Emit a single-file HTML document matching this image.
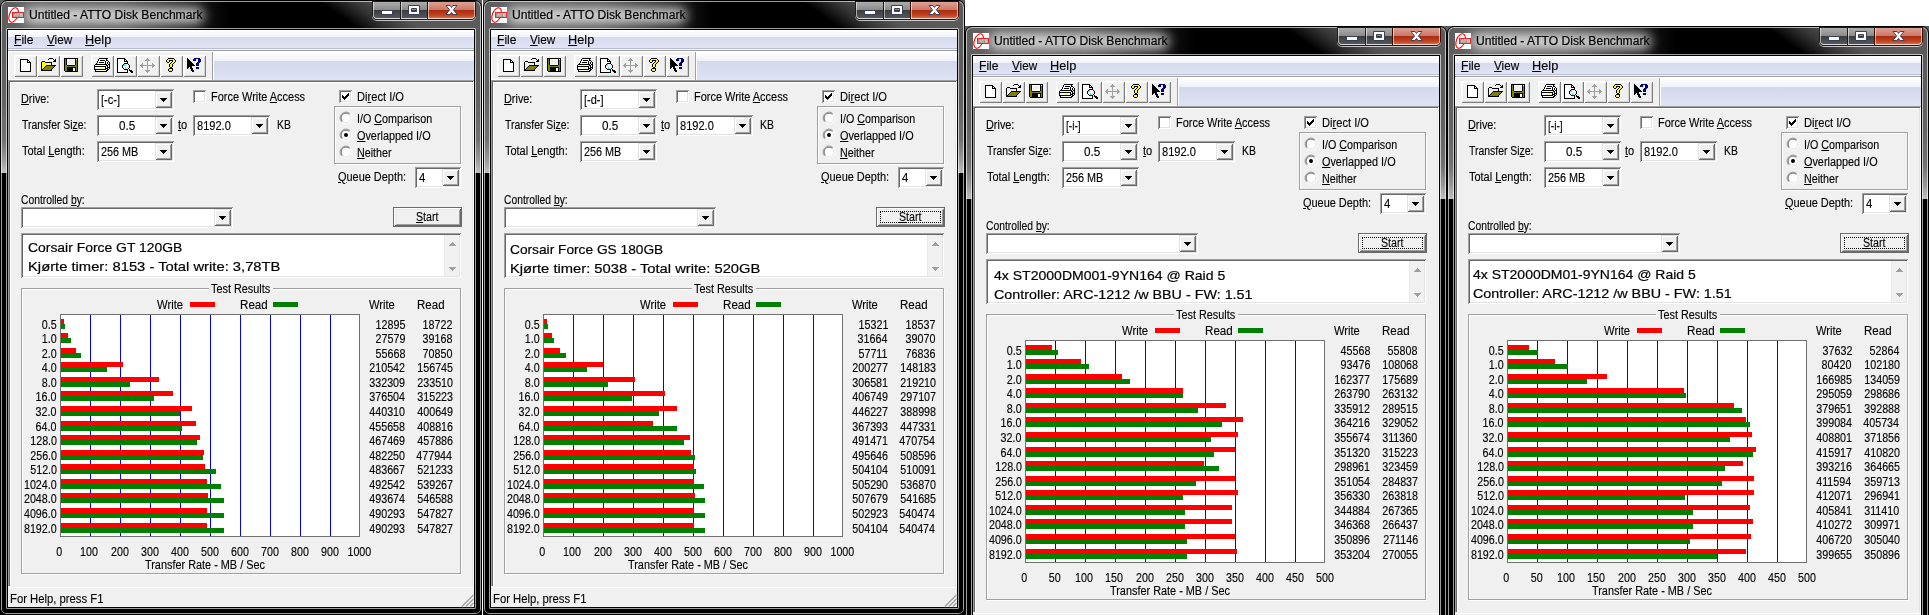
<!DOCTYPE html><html><head><meta charset="utf-8"><title>ATTO Disk Benchmark</title><style>
html,body{margin:0;padding:0}
body{width:1929px;height:615px;background:#fff;position:relative;overflow:hidden;font-family:"Liberation Sans",sans-serif}
.win{position:absolute;width:482px;height:615px;background:#000;overflow:hidden}
.win div,.win span,.win svg,.win i{position:absolute}
.t{white-space:pre;display:block;-webkit-text-stroke:.13px #000}
.ns{-webkit-text-stroke:.12px #000 !important}
.ds{-webkit-text-stroke:.2px #000 !important}
.t u{text-decoration:underline;text-underline-offset:1px}
.px{display:block;overflow:visible}
.glassT{left:0;top:0;width:482px;height:30px;background:linear-gradient(90deg,#5e5e5e 0,#626262 30px,#555 120px,#111 205px,#000 230px,#000 100%)}
.glassT2{left:290px;top:0;width:192px;height:30px;background:linear-gradient(35deg,#000 40px,#333 58px,#444 67px,#555 76px,#5a5a5a 100px)}
.glassL{left:0;top:30px;width:8px;height:143px;background:linear-gradient(180deg,#5e5e5e 0,#646464 70px,#727272 110px,#9a9a9a 130px,#c0c0c0 143px)}
.glassR{left:474px;top:30px;width:8px;height:143px;background:linear-gradient(180deg,#5a5a5a 0,#626262 70px,#727272 110px,#9a9a9a 130px,#c0c0c0 143px)}
.glow{left:24px;top:8px;width:180px;height:15px;border-radius:8px;background:rgba(255,255,255,.8);filter:blur(6px)}
.edgeO{left:0;top:0;width:480px;height:613px;border:1px solid #000;border-radius:7px 7px 6px 6px;box-shadow:inset 0 0 0 1px rgba(255,255,255,.62)}
.edgeI{left:6px;top:28px;width:468px;height:579px;border:1px solid rgba(255,255,255,.62);box-shadow:inset 0 0 0 1px #000;border-radius:1px}
.client{left:8px;top:30px;width:466px;height:577px;background:#f0f0f0}
.menubar{left:8px;top:30px;width:466px;height:19px;background:linear-gradient(180deg,#fff 0,#f1f3fb 7px,#d6dbed 7px,#e0e4f5 18px,#b9bfd2 18px)}
.tbline1{left:8px;top:49px;width:466px;height:1px;background:#f4f4f6}
.tbline2{left:8px;top:50px;width:466px;height:1px;background:#a0a0a0}
.tbline3{left:8px;top:51px;width:466px;height:1px;background:#fff}
.tbleft{left:8px;top:52px;width:204px;height:28px;background:linear-gradient(180deg,#f0f0f0 27px,#fff 27px);box-shadow:inset 1px 0 0 #fff}
.tbsep{left:212px;top:52px;width:2px;height:28px;background:linear-gradient(90deg,#a0a0a0 1px,#fff 1px)}
.tbright{left:214px;top:52px;width:260px;height:28px;background:linear-gradient(180deg,#fff 0,#eff1fa 9px,#d3d8eb 9px,#dee2f4 28px)}
.form{left:8px;top:80px;width:466px;height:510px;background:#f0f0f0;box-shadow:inset 1px 1px 0 #a0a0a0,inset -1px -1px 0 #fff,inset 2px 2px 0 #696969,inset -2px -2px 0 #e3e3e3,inset 3px 3px 0 #fff}
.status{left:8px;top:586px;width:466px;height:21px;background:linear-gradient(180deg,#f0f0f0 1px,#fbfbfb 1px,#fbfbfb 2px,#f0f0f0 2px)}
.capwrap{left:372px;top:1px;width:104px;height:20px;border:1px solid rgba(255,255,255,.7);border-top:none;border-radius:0 0 5px 5px;box-sizing:border-box}
.cap{top:2px;height:17px;box-sizing:border-box;border:1px solid rgba(255,255,255,.55);border-top:none}
.cmin{left:373px;width:28px;border-radius:0 0 0 4px;background:linear-gradient(180deg,#adadad 0,#8a8a8a 8px,#3c3c3c 8px,#555a64 17px);box-shadow:0 0 0 1px #1c1c1c}
.cmax{left:401px;width:27px;background:linear-gradient(180deg,#adadad 0,#8a8a8a 8px,#3c3c3c 8px,#555a64 17px);box-shadow:0 0 0 1px #1c1c1c}
.cclose{left:428px;width:47px;border-radius:0 0 4px 0;background:linear-gradient(180deg,#dda093 0,#cc7766 8px,#a82a12 8px,#c2411d 13px,#d47a55 17px);box-shadow:0 0 0 1px #3a0c06}
.chart{left:60px;top:314px;width:298px;height:221px;border:1px solid #707070;background:#fff;overflow:hidden}
.chart i{display:block}
.g{top:0;width:1px;height:221px;background:#0000ff}
.r{left:0;height:5px;background:#ff0000}
.n{left:0;height:5px;background:#008000}
</style></head><body>
<div class="win" style="left:0px;top:0px">
<div class="glassT"></div><div class="glassT2"></div><div class="glassL"></div><div class="glassR"></div>
<div class="glow"></div>
<div class="edgeO"></div><div class="edgeI"></div>
<svg class="px" style="left:8px;top:7px" width="16" height="16" viewBox="0 0 16 16"><rect width="16" height="16" fill="#fff"/><ellipse cx="5.6" cy="8" rx="4.2" ry="7.6" transform="rotate(22 5.6 8)" fill="none" stroke="#f00" stroke-width="1.1"/><rect x="4.5" y="5.5" width="11" height="5" fill="#a3968a" stroke="#e8202c" stroke-width="1"/><path d="M6.5 9.5l1-3l1 3M9 6.5h2M10 6.5v3M11.5 6.5h2M12.5 6.5v3" stroke="#e8e0d8" stroke-width=".7" fill="none"/><rect x="13.6" y="6.6" width="1.2" height="2.8" fill="none" stroke="#e8e0d8" stroke-width=".5"/></svg>
<span class="t ds" style="left:28.53px;transform-origin:0 0;top:7.00px;font-size:12px;line-height:16px;transform:scaleX(1.007);">Untitled - ATTO Disk Benchmark</span>
<div class="capwrap"></div>
<div class="cap cmin"></div><div class="cap cmax"></div><div class="cap cclose"></div>
<svg class="px" style="left:381px;top:10px" width="12" height="5" viewBox="0 0 12 5"><rect x=".5" y=".5" width="11" height="4" fill="#fff" stroke="#3a4058" stroke-width="1"/></svg>
<svg class="px" style="left:408px;top:5px" width="12" height="10" viewBox="0 0 12 10"><path d="M.5 .5h11v9h-11z M3.5 3.5v3h5v-3z" fill="#fff" fill-rule="evenodd" stroke="#3a4058" stroke-width="1"/></svg>
<svg class="px" style="left:445px;top:4px" width="13" height="12" viewBox="0 0 13 12"><path d="M1 1.5h4l1.5 1.9l1.5-1.9h4l-3.6 4.4l3.8 4.6h-4.1l-1.6-2.1l-1.6 2.1h-4.1l3.8-4.6z" fill="#fff" stroke="#40435a" stroke-width="1" stroke-linejoin="round"/></svg>
<div class="client">
</div>
<div class="menubar"></div>
<span class="t ns" style="left:14.23px;transform-origin:0 0;top:32.00px;font-size:12px;line-height:16px;transform:scaleX(1.007);"><u>F</u>ile</span>
<span class="t ns" style="left:46.78px;transform-origin:0 0;top:32.00px;font-size:12px;line-height:16px;transform:scaleX(0.977);"><u>V</u>iew</span>
<span class="t ns" style="left:84.98px;transform-origin:0 0;top:32.00px;font-size:12px;line-height:16px;transform:scaleX(1.062);"><u>H</u>elp</span>
<div class="tbline1"></div><div class="tbline2"></div><div class="tbline3"></div>
<div class="tbleft"></div><div class="tbsep"></div><div class="tbright"></div>
<div style="position:absolute;left:14px;top:55px;width:23px;height:22px;background:#f0f0f0;box-shadow:inset 1px 1px 0 #fff,inset -1px -1px 0 #7d7d7d,inset 2px 2px 0 #f9f9f9,inset -2px -2px 0 #d4d4d4;"></div>
<div style="position:absolute;left:37px;top:55px;width:23px;height:22px;background:#f0f0f0;box-shadow:inset 1px 1px 0 #fff,inset -1px -1px 0 #7d7d7d,inset 2px 2px 0 #f9f9f9,inset -2px -2px 0 #d4d4d4;"></div>
<div style="position:absolute;left:60px;top:55px;width:23px;height:22px;background:#f0f0f0;box-shadow:inset 1px 1px 0 #fff,inset -1px -1px 0 #7d7d7d,inset 2px 2px 0 #f9f9f9,inset -2px -2px 0 #d4d4d4;"></div>
<div style="position:absolute;left:91px;top:55px;width:23px;height:22px;background:#f0f0f0;box-shadow:inset 1px 1px 0 #fff,inset -1px -1px 0 #7d7d7d,inset 2px 2px 0 #f9f9f9,inset -2px -2px 0 #d4d4d4;"></div>
<div style="position:absolute;left:114px;top:55px;width:23px;height:22px;background:#f0f0f0;box-shadow:inset 1px 1px 0 #fff,inset -1px -1px 0 #7d7d7d,inset 2px 2px 0 #f9f9f9,inset -2px -2px 0 #d4d4d4;"></div>
<div style="position:absolute;left:137px;top:55px;width:23px;height:22px;background:#f0f0f0;box-shadow:inset 1px 1px 0 #fff,inset -1px -1px 0 #7d7d7d,inset 2px 2px 0 #f9f9f9,inset -2px -2px 0 #d4d4d4;"></div>
<div style="position:absolute;left:160px;top:55px;width:23px;height:22px;background:#f0f0f0;box-shadow:inset 1px 1px 0 #fff,inset -1px -1px 0 #7d7d7d,inset 2px 2px 0 #f9f9f9,inset -2px -2px 0 #d4d4d4;"></div>
<div style="position:absolute;left:183px;top:55px;width:23px;height:22px;background:#f0f0f0;box-shadow:inset 1px 1px 0 #fff,inset -1px -1px 0 #7d7d7d,inset 2px 2px 0 #f9f9f9,inset -2px -2px 0 #d4d4d4;"></div>
<svg class="px" style="left:20px;top:59px" width="11" height="13" viewBox="0 0 11 13" shape-rendering="crispEdges"><rect x="0" y="0" width="8" height="1" fill="#000"/><rect x="0" y="1" width="1" height="1" fill="#000"/><rect x="1" y="1" width="6" height="1" fill="#fff"/><rect x="7" y="1" width="2" height="1" fill="#000"/><rect x="0" y="2" width="1" height="1" fill="#000"/><rect x="1" y="2" width="6" height="1" fill="#fff"/><rect x="7" y="2" width="1" height="1" fill="#000"/><rect x="8" y="2" width="1" height="1" fill="#fff"/><rect x="9" y="2" width="1" height="1" fill="#000"/><rect x="0" y="3" width="1" height="1" fill="#000"/><rect x="1" y="3" width="6" height="1" fill="#fff"/><rect x="7" y="3" width="4" height="1" fill="#000"/><rect x="0" y="4" width="1" height="1" fill="#000"/><rect x="1" y="4" width="9" height="1" fill="#fff"/><rect x="10" y="4" width="1" height="1" fill="#000"/><rect x="0" y="5" width="1" height="1" fill="#000"/><rect x="1" y="5" width="9" height="1" fill="#fff"/><rect x="10" y="5" width="1" height="1" fill="#000"/><rect x="0" y="6" width="1" height="1" fill="#000"/><rect x="1" y="6" width="9" height="1" fill="#fff"/><rect x="10" y="6" width="1" height="1" fill="#000"/><rect x="0" y="7" width="1" height="1" fill="#000"/><rect x="1" y="7" width="9" height="1" fill="#fff"/><rect x="10" y="7" width="1" height="1" fill="#000"/><rect x="0" y="8" width="1" height="1" fill="#000"/><rect x="1" y="8" width="9" height="1" fill="#fff"/><rect x="10" y="8" width="1" height="1" fill="#000"/><rect x="0" y="9" width="1" height="1" fill="#000"/><rect x="1" y="9" width="9" height="1" fill="#fff"/><rect x="10" y="9" width="1" height="1" fill="#000"/><rect x="0" y="10" width="1" height="1" fill="#000"/><rect x="1" y="10" width="9" height="1" fill="#fff"/><rect x="10" y="10" width="1" height="1" fill="#000"/><rect x="0" y="11" width="1" height="1" fill="#000"/><rect x="1" y="11" width="9" height="1" fill="#fff"/><rect x="10" y="11" width="1" height="1" fill="#000"/><rect x="0" y="12" width="11" height="1" fill="#000"/></svg>
<svg class="px" style="left:41px;top:58px" width="16" height="13" viewBox="0 0 16 13" shape-rendering="crispEdges"><rect x="8" y="0" width="4" height="1" fill="#000"/><rect x="7" y="1" width="1" height="1" fill="#000"/><rect x="12" y="1" width="1" height="1" fill="#000"/><rect x="14" y="1" width="1" height="1" fill="#000"/><rect x="13" y="2" width="2" height="1" fill="#000"/><rect x="1" y="3" width="3" height="1" fill="#000"/><rect x="12" y="3" width="3" height="1" fill="#000"/><rect x="0" y="4" width="1" height="1" fill="#000"/><rect x="1" y="4" width="1" height="1" fill="#ffff00"/><rect x="2" y="4" width="1" height="1" fill="#fff"/><rect x="3" y="4" width="1" height="1" fill="#ffff00"/><rect x="4" y="4" width="7" height="1" fill="#000"/><rect x="0" y="5" width="1" height="1" fill="#000"/><rect x="1" y="5" width="1" height="1" fill="#fff"/><rect x="2" y="5" width="1" height="1" fill="#ffff00"/><rect x="3" y="5" width="1" height="1" fill="#fff"/><rect x="4" y="5" width="1" height="1" fill="#ffff00"/><rect x="5" y="5" width="1" height="1" fill="#fff"/><rect x="6" y="5" width="1" height="1" fill="#ffff00"/><rect x="7" y="5" width="1" height="1" fill="#fff"/><rect x="8" y="5" width="1" height="1" fill="#ffff00"/><rect x="9" y="5" width="1" height="1" fill="#fff"/><rect x="10" y="5" width="1" height="1" fill="#000"/><rect x="0" y="6" width="1" height="1" fill="#000"/><rect x="1" y="6" width="1" height="1" fill="#ffff00"/><rect x="2" y="6" width="1" height="1" fill="#fff"/><rect x="3" y="6" width="1" height="1" fill="#ffff00"/><rect x="4" y="6" width="1" height="1" fill="#fff"/><rect x="5" y="6" width="1" height="1" fill="#ffff00"/><rect x="6" y="6" width="1" height="1" fill="#fff"/><rect x="7" y="6" width="1" height="1" fill="#ffff00"/><rect x="8" y="6" width="1" height="1" fill="#fff"/><rect x="9" y="6" width="1" height="1" fill="#ffff00"/><rect x="10" y="6" width="1" height="1" fill="#000"/><rect x="0" y="7" width="1" height="1" fill="#000"/><rect x="1" y="7" width="1" height="1" fill="#fff"/><rect x="2" y="7" width="1" height="1" fill="#ffff00"/><rect x="3" y="7" width="1" height="1" fill="#fff"/><rect x="4" y="7" width="1" height="1" fill="#ffff00"/><rect x="5" y="7" width="10" height="1" fill="#000"/><rect x="0" y="8" width="1" height="1" fill="#000"/><rect x="1" y="8" width="1" height="1" fill="#ffff00"/><rect x="2" y="8" width="1" height="1" fill="#fff"/><rect x="3" y="8" width="1" height="1" fill="#ffff00"/><rect x="4" y="8" width="1" height="1" fill="#000"/><rect x="5" y="8" width="8" height="1" fill="#808000"/><rect x="13" y="8" width="1" height="1" fill="#000"/><rect x="0" y="9" width="1" height="1" fill="#000"/><rect x="1" y="9" width="1" height="1" fill="#fff"/><rect x="2" y="9" width="1" height="1" fill="#ffff00"/><rect x="3" y="9" width="1" height="1" fill="#000"/><rect x="4" y="9" width="8" height="1" fill="#808000"/><rect x="12" y="9" width="1" height="1" fill="#000"/><rect x="0" y="10" width="1" height="1" fill="#000"/><rect x="1" y="10" width="1" height="1" fill="#ffff00"/><rect x="2" y="10" width="1" height="1" fill="#000"/><rect x="3" y="10" width="8" height="1" fill="#808000"/><rect x="11" y="10" width="1" height="1" fill="#000"/><rect x="0" y="11" width="2" height="1" fill="#000"/><rect x="2" y="11" width="8" height="1" fill="#808000"/><rect x="10" y="11" width="1" height="1" fill="#000"/><rect x="0" y="12" width="11" height="1" fill="#000"/></svg>
<svg class="px" style="left:64px;top:58px" width="14" height="14" viewBox="0 0 14 14" shape-rendering="crispEdges"><rect x="0" y="0" width="14" height="1" fill="#000"/><rect x="0" y="1" width="1" height="1" fill="#000"/><rect x="1" y="1" width="1" height="1" fill="#808000"/><rect x="2" y="1" width="1" height="1" fill="#000"/><rect x="3" y="1" width="8" height="1" fill="#fff"/><rect x="11" y="1" width="1" height="1" fill="#000"/><rect x="12" y="1" width="1" height="1" fill="#fff"/><rect x="13" y="1" width="1" height="1" fill="#000"/><rect x="0" y="2" width="1" height="1" fill="#000"/><rect x="1" y="2" width="1" height="1" fill="#808000"/><rect x="2" y="2" width="1" height="1" fill="#000"/><rect x="3" y="2" width="1" height="1" fill="#fff"/><rect x="4" y="2" width="6" height="1" fill="#f0f0f0"/><rect x="10" y="2" width="1" height="1" fill="#fff"/><rect x="11" y="2" width="1" height="1" fill="#000"/><rect x="12" y="2" width="1" height="1" fill="#808000"/><rect x="13" y="2" width="1" height="1" fill="#000"/><rect x="0" y="3" width="1" height="1" fill="#000"/><rect x="1" y="3" width="1" height="1" fill="#808000"/><rect x="2" y="3" width="1" height="1" fill="#000"/><rect x="3" y="3" width="1" height="1" fill="#fff"/><rect x="4" y="3" width="6" height="1" fill="#f0f0f0"/><rect x="10" y="3" width="1" height="1" fill="#fff"/><rect x="11" y="3" width="1" height="1" fill="#000"/><rect x="12" y="3" width="1" height="1" fill="#808000"/><rect x="13" y="3" width="1" height="1" fill="#000"/><rect x="0" y="4" width="1" height="1" fill="#000"/><rect x="1" y="4" width="1" height="1" fill="#808000"/><rect x="2" y="4" width="1" height="1" fill="#000"/><rect x="3" y="4" width="1" height="1" fill="#fff"/><rect x="4" y="4" width="6" height="1" fill="#f0f0f0"/><rect x="10" y="4" width="1" height="1" fill="#fff"/><rect x="11" y="4" width="1" height="1" fill="#000"/><rect x="12" y="4" width="1" height="1" fill="#808000"/><rect x="13" y="4" width="1" height="1" fill="#000"/><rect x="0" y="5" width="1" height="1" fill="#000"/><rect x="1" y="5" width="1" height="1" fill="#808000"/><rect x="2" y="5" width="1" height="1" fill="#000"/><rect x="3" y="5" width="1" height="1" fill="#fff"/><rect x="4" y="5" width="6" height="1" fill="#f0f0f0"/><rect x="10" y="5" width="1" height="1" fill="#fff"/><rect x="11" y="5" width="1" height="1" fill="#000"/><rect x="12" y="5" width="1" height="1" fill="#808000"/><rect x="13" y="5" width="1" height="1" fill="#000"/><rect x="0" y="6" width="1" height="1" fill="#000"/><rect x="1" y="6" width="1" height="1" fill="#808000"/><rect x="2" y="6" width="1" height="1" fill="#000"/><rect x="3" y="6" width="8" height="1" fill="#fff"/><rect x="11" y="6" width="1" height="1" fill="#000"/><rect x="12" y="6" width="1" height="1" fill="#808000"/><rect x="13" y="6" width="1" height="1" fill="#000"/><rect x="0" y="7" width="1" height="1" fill="#000"/><rect x="1" y="7" width="2" height="1" fill="#808000"/><rect x="3" y="7" width="8" height="1" fill="#000"/><rect x="11" y="7" width="2" height="1" fill="#808000"/><rect x="13" y="7" width="1" height="1" fill="#000"/><rect x="0" y="8" width="1" height="1" fill="#000"/><rect x="1" y="8" width="12" height="1" fill="#808000"/><rect x="13" y="8" width="1" height="1" fill="#000"/><rect x="0" y="9" width="1" height="1" fill="#000"/><rect x="1" y="9" width="2" height="1" fill="#808000"/><rect x="3" y="9" width="9" height="1" fill="#000"/><rect x="12" y="9" width="1" height="1" fill="#808000"/><rect x="13" y="9" width="1" height="1" fill="#000"/><rect x="0" y="10" width="1" height="1" fill="#000"/><rect x="1" y="10" width="2" height="1" fill="#808000"/><rect x="3" y="10" width="6" height="1" fill="#000"/><rect x="9" y="10" width="2" height="1" fill="#fff"/><rect x="11" y="10" width="1" height="1" fill="#000"/><rect x="12" y="10" width="1" height="1" fill="#808000"/><rect x="13" y="10" width="1" height="1" fill="#000"/><rect x="0" y="11" width="1" height="1" fill="#000"/><rect x="1" y="11" width="2" height="1" fill="#808000"/><rect x="3" y="11" width="6" height="1" fill="#000"/><rect x="9" y="11" width="2" height="1" fill="#fff"/><rect x="11" y="11" width="1" height="1" fill="#000"/><rect x="12" y="11" width="1" height="1" fill="#808000"/><rect x="13" y="11" width="1" height="1" fill="#000"/><rect x="0" y="12" width="1" height="1" fill="#000"/><rect x="1" y="12" width="2" height="1" fill="#808000"/><rect x="3" y="12" width="6" height="1" fill="#000"/><rect x="9" y="12" width="2" height="1" fill="#fff"/><rect x="11" y="12" width="1" height="1" fill="#000"/><rect x="12" y="12" width="1" height="1" fill="#808000"/><rect x="13" y="12" width="1" height="1" fill="#000"/><rect x="1" y="13" width="13" height="1" fill="#000"/></svg>
<svg class="px" style="left:94px;top:58px" width="16" height="14" viewBox="0 0 16 14" shape-rendering="crispEdges"><rect x="5" y="0" width="9" height="1" fill="#000"/><rect x="4" y="1" width="1" height="1" fill="#000"/><rect x="5" y="1" width="7" height="1" fill="#fff"/><rect x="12" y="1" width="1" height="1" fill="#000"/><rect x="4" y="2" width="1" height="1" fill="#000"/><rect x="5" y="2" width="1" height="1" fill="#fff"/><rect x="6" y="2" width="5" height="1" fill="#000"/><rect x="11" y="2" width="1" height="1" fill="#fff"/><rect x="12" y="2" width="2" height="1" fill="#000"/><rect x="3" y="3" width="1" height="1" fill="#000"/><rect x="4" y="3" width="7" height="1" fill="#fff"/><rect x="11" y="3" width="1" height="1" fill="#000"/><rect x="12" y="3" width="1" height="1" fill="#fff"/><rect x="14" y="3" width="1" height="1" fill="#000"/><rect x="3" y="4" width="1" height="1" fill="#000"/><rect x="4" y="4" width="1" height="1" fill="#fff"/><rect x="5" y="4" width="5" height="1" fill="#000"/><rect x="10" y="4" width="1" height="1" fill="#fff"/><rect x="11" y="4" width="1" height="1" fill="#000"/><rect x="13" y="4" width="1" height="1" fill="#000"/><rect x="15" y="4" width="1" height="1" fill="#000"/><rect x="2" y="5" width="1" height="1" fill="#000"/><rect x="3" y="5" width="8" height="1" fill="#fff"/><rect x="11" y="5" width="1" height="1" fill="#000"/><rect x="13" y="5" width="1" height="1" fill="#000"/><rect x="15" y="5" width="1" height="1" fill="#000"/><rect x="1" y="6" width="12" height="1" fill="#000"/><rect x="14" y="6" width="2" height="1" fill="#000"/><rect x="0" y="7" width="1" height="1" fill="#000"/><rect x="1" y="7" width="11" height="1" fill="#fff"/><rect x="12" y="7" width="2" height="1" fill="#000"/><rect x="15" y="7" width="1" height="1" fill="#000"/><rect x="0" y="8" width="12" height="1" fill="#000"/><rect x="13" y="8" width="1" height="1" fill="#000"/><rect x="15" y="8" width="1" height="1" fill="#000"/><rect x="0" y="9" width="1" height="1" fill="#000"/><rect x="1" y="9" width="10" height="1" fill="#fff"/><rect x="11" y="9" width="1" height="1" fill="#000"/><rect x="13" y="9" width="3" height="1" fill="#000"/><rect x="0" y="10" width="1" height="1" fill="#000"/><rect x="1" y="10" width="5" height="1" fill="#fff"/><rect x="6" y="10" width="3" height="1" fill="#ffff00"/><rect x="9" y="10" width="2" height="1" fill="#fff"/><rect x="11" y="10" width="3" height="1" fill="#000"/><rect x="15" y="10" width="1" height="1" fill="#000"/><rect x="0" y="11" width="12" height="1" fill="#000"/><rect x="13" y="11" width="2" height="1" fill="#000"/><rect x="1" y="12" width="1" height="1" fill="#000"/><rect x="2" y="12" width="10" height="1" fill="#fff"/><rect x="12" y="12" width="2" height="1" fill="#000"/><rect x="1" y="13" width="12" height="1" fill="#000"/></svg>
<svg class="px" style="left:117px;top:58px" width="16" height="15" viewBox="0 0 16 15" shape-rendering="crispEdges"><rect x="0" y="0" width="8" height="1" fill="#000"/><rect x="0" y="1" width="1" height="1" fill="#000"/><rect x="1" y="1" width="6" height="1" fill="#fff"/><rect x="7" y="1" width="2" height="1" fill="#000"/><rect x="0" y="2" width="1" height="1" fill="#000"/><rect x="1" y="2" width="6" height="1" fill="#fff"/><rect x="7" y="2" width="1" height="1" fill="#000"/><rect x="8" y="2" width="1" height="1" fill="#fff"/><rect x="9" y="2" width="1" height="1" fill="#000"/><rect x="0" y="3" width="1" height="1" fill="#000"/><rect x="1" y="3" width="6" height="1" fill="#fff"/><rect x="7" y="3" width="4" height="1" fill="#000"/><rect x="0" y="4" width="1" height="1" fill="#000"/><rect x="1" y="4" width="9" height="1" fill="#fff"/><rect x="10" y="4" width="1" height="1" fill="#000"/><rect x="0" y="5" width="1" height="1" fill="#000"/><rect x="1" y="5" width="6" height="1" fill="#fff"/><rect x="7" y="5" width="4" height="1" fill="#000"/><rect x="0" y="6" width="1" height="1" fill="#000"/><rect x="1" y="6" width="5" height="1" fill="#fff"/><rect x="6" y="6" width="1" height="1" fill="#000"/><rect x="7" y="6" width="1" height="1" fill="#00ffff"/><rect x="8" y="6" width="1" height="1" fill="#fff"/><rect x="9" y="6" width="2" height="1" fill="#f0f0f0"/><rect x="11" y="6" width="1" height="1" fill="#000"/><rect x="0" y="7" width="1" height="1" fill="#000"/><rect x="1" y="7" width="4" height="1" fill="#fff"/><rect x="5" y="7" width="1" height="1" fill="#000"/><rect x="6" y="7" width="2" height="1" fill="#00ffff"/><rect x="8" y="7" width="1" height="1" fill="#fff"/><rect x="9" y="7" width="3" height="1" fill="#f0f0f0"/><rect x="12" y="7" width="1" height="1" fill="#000"/><rect x="0" y="8" width="1" height="1" fill="#000"/><rect x="1" y="8" width="4" height="1" fill="#fff"/><rect x="5" y="8" width="1" height="1" fill="#000"/><rect x="6" y="8" width="3" height="1" fill="#fff"/><rect x="9" y="8" width="3" height="1" fill="#f0f0f0"/><rect x="12" y="8" width="1" height="1" fill="#000"/><rect x="0" y="9" width="1" height="1" fill="#000"/><rect x="1" y="9" width="4" height="1" fill="#fff"/><rect x="5" y="9" width="1" height="1" fill="#000"/><rect x="6" y="9" width="2" height="1" fill="#fff"/><rect x="8" y="9" width="1" height="1" fill="#00ffff"/><rect x="9" y="9" width="3" height="1" fill="#f0f0f0"/><rect x="12" y="9" width="1" height="1" fill="#000"/><rect x="0" y="10" width="1" height="1" fill="#000"/><rect x="1" y="10" width="5" height="1" fill="#fff"/><rect x="6" y="10" width="1" height="1" fill="#000"/><rect x="7" y="10" width="1" height="1" fill="#f0f0f0"/><rect x="8" y="10" width="1" height="1" fill="#00ffff"/><rect x="9" y="10" width="2" height="1" fill="#f0f0f0"/><rect x="11" y="10" width="1" height="1" fill="#000"/><rect x="0" y="11" width="1" height="1" fill="#000"/><rect x="1" y="11" width="6" height="1" fill="#fff"/><rect x="7" y="11" width="4" height="1" fill="#000"/><rect x="12" y="11" width="1" height="1" fill="#000"/><rect x="0" y="12" width="1" height="1" fill="#000"/><rect x="1" y="12" width="9" height="1" fill="#fff"/><rect x="10" y="12" width="1" height="1" fill="#000"/><rect x="12" y="12" width="3" height="1" fill="#000"/><rect x="0" y="13" width="1" height="1" fill="#000"/><rect x="1" y="13" width="9" height="1" fill="#fff"/><rect x="10" y="13" width="1" height="1" fill="#000"/><rect x="13" y="13" width="3" height="1" fill="#000"/><rect x="0" y="14" width="11" height="1" fill="#000"/><rect x="14" y="14" width="2" height="1" fill="#000"/></svg>
<svg class="px" style="left:140px;top:58px" width="15" height="15" viewBox="0 0 15 15" shape-rendering="crispEdges"><rect x="7" y="0" width="1" height="1" fill="#a0a0a0"/><rect x="6" y="1" width="3" height="1" fill="#a0a0a0"/><rect x="5" y="2" width="5" height="1" fill="#a0a0a0"/><rect x="7" y="3" width="1" height="1" fill="#a0a0a0"/><rect x="7" y="4" width="1" height="1" fill="#a0a0a0"/><rect x="2" y="5" width="1" height="1" fill="#a0a0a0"/><rect x="7" y="5" width="1" height="1" fill="#a0a0a0"/><rect x="12" y="5" width="1" height="1" fill="#a0a0a0"/><rect x="1" y="6" width="2" height="1" fill="#a0a0a0"/><rect x="7" y="6" width="1" height="1" fill="#a0a0a0"/><rect x="12" y="6" width="2" height="1" fill="#a0a0a0"/><rect x="0" y="7" width="15" height="1" fill="#a0a0a0"/><rect x="1" y="8" width="2" height="1" fill="#a0a0a0"/><rect x="7" y="8" width="1" height="1" fill="#a0a0a0"/><rect x="12" y="8" width="2" height="1" fill="#a0a0a0"/><rect x="2" y="9" width="1" height="1" fill="#a0a0a0"/><rect x="7" y="9" width="1" height="1" fill="#a0a0a0"/><rect x="12" y="9" width="1" height="1" fill="#a0a0a0"/><rect x="7" y="10" width="1" height="1" fill="#a0a0a0"/><rect x="7" y="11" width="1" height="1" fill="#a0a0a0"/><rect x="5" y="12" width="5" height="1" fill="#a0a0a0"/><rect x="6" y="13" width="3" height="1" fill="#a0a0a0"/><rect x="7" y="14" width="1" height="1" fill="#a0a0a0"/></svg>
<svg class="px" style="left:166px;top:58px" width="10" height="14" viewBox="0 0 10 14" shape-rendering="crispEdges"><rect x="2" y="0" width="6" height="1" fill="#000"/><rect x="1" y="1" width="1" height="1" fill="#000"/><rect x="2" y="1" width="6" height="1" fill="#ffff00"/><rect x="8" y="1" width="1" height="1" fill="#000"/><rect x="0" y="2" width="1" height="1" fill="#000"/><rect x="1" y="2" width="2" height="1" fill="#ffff00"/><rect x="3" y="2" width="4" height="1" fill="#000"/><rect x="7" y="2" width="2" height="1" fill="#ffff00"/><rect x="9" y="2" width="1" height="1" fill="#000"/><rect x="0" y="3" width="1" height="1" fill="#000"/><rect x="1" y="3" width="2" height="1" fill="#ffff00"/><rect x="3" y="3" width="1" height="1" fill="#000"/><rect x="6" y="3" width="1" height="1" fill="#000"/><rect x="7" y="3" width="2" height="1" fill="#ffff00"/><rect x="9" y="3" width="1" height="1" fill="#000"/><rect x="1" y="4" width="2" height="1" fill="#000"/><rect x="5" y="4" width="1" height="1" fill="#000"/><rect x="6" y="4" width="2" height="1" fill="#ffff00"/><rect x="8" y="4" width="1" height="1" fill="#000"/><rect x="4" y="5" width="1" height="1" fill="#000"/><rect x="5" y="5" width="2" height="1" fill="#ffff00"/><rect x="7" y="5" width="1" height="1" fill="#000"/><rect x="3" y="6" width="1" height="1" fill="#000"/><rect x="4" y="6" width="2" height="1" fill="#ffff00"/><rect x="6" y="6" width="1" height="1" fill="#000"/><rect x="3" y="7" width="1" height="1" fill="#000"/><rect x="4" y="7" width="2" height="1" fill="#ffff00"/><rect x="6" y="7" width="1" height="1" fill="#000"/><rect x="3" y="8" width="1" height="1" fill="#000"/><rect x="4" y="8" width="2" height="1" fill="#ffff00"/><rect x="6" y="8" width="1" height="1" fill="#000"/><rect x="4" y="9" width="2" height="1" fill="#000"/><rect x="3" y="10" width="4" height="1" fill="#000"/><rect x="2" y="11" width="1" height="1" fill="#000"/><rect x="3" y="11" width="3" height="1" fill="#ffff00"/><rect x="6" y="11" width="1" height="1" fill="#000"/><rect x="2" y="12" width="1" height="1" fill="#000"/><rect x="3" y="12" width="3" height="1" fill="#ffff00"/><rect x="6" y="12" width="1" height="1" fill="#000"/><rect x="3" y="13" width="3" height="1" fill="#000"/></svg>
<svg class="px" style="left:187px;top:58px" width="16" height="14" viewBox="0 0 16 14" shape-rendering="crispEdges"><rect x="0" y="0" width="1" height="1" fill="#000"/><rect x="7" y="0" width="6" height="1" fill="#000080"/><rect x="0" y="1" width="2" height="1" fill="#000"/><rect x="6" y="1" width="3" height="1" fill="#000080"/><rect x="11" y="1" width="3" height="1" fill="#000080"/><rect x="0" y="2" width="3" height="1" fill="#000"/><rect x="6" y="2" width="3" height="1" fill="#000080"/><rect x="11" y="2" width="3" height="1" fill="#000080"/><rect x="0" y="3" width="4" height="1" fill="#000"/><rect x="11" y="3" width="3" height="1" fill="#000080"/><rect x="0" y="4" width="5" height="1" fill="#000"/><rect x="10" y="4" width="3" height="1" fill="#000080"/><rect x="0" y="5" width="6" height="1" fill="#000"/><rect x="9" y="5" width="3" height="1" fill="#000080"/><rect x="0" y="6" width="7" height="1" fill="#000"/><rect x="9" y="6" width="3" height="1" fill="#000080"/><rect x="0" y="7" width="8" height="1" fill="#000"/><rect x="9" y="7" width="3" height="1" fill="#000080"/><rect x="0" y="8" width="5" height="1" fill="#000"/><rect x="0" y="9" width="2" height="1" fill="#000"/><rect x="3" y="9" width="2" height="1" fill="#000"/><rect x="9" y="9" width="3" height="1" fill="#000080"/><rect x="0" y="10" width="1" height="1" fill="#000"/><rect x="3" y="10" width="3" height="1" fill="#000"/><rect x="9" y="10" width="3" height="1" fill="#000080"/><rect x="4" y="11" width="2" height="1" fill="#000"/><rect x="4" y="12" width="3" height="1" fill="#000"/><rect x="5" y="13" width="2" height="1" fill="#000"/></svg>
<div class="form"></div>
<span class="t" style="left:21.13px;transform-origin:0 0;top:91.00px;font-size:12px;line-height:16px;transform:scaleX(0.905);"><u>D</u>rive:</span>
<span class="t" style="left:21.79px;transform-origin:0 0;top:117.00px;font-size:12px;line-height:16px;transform:scaleX(0.868);">Transfer Si<u>z</u>e:</span>
<span class="t" style="left:21.78px;transform-origin:0 0;top:143.00px;font-size:12px;line-height:16px;transform:scaleX(0.912);">Total <u>L</u>ength:</span>
<div style="position:absolute;left:97px;top:89px;width:77px;height:21px;background:#fff;box-shadow:inset 1px 1px 0 #a0a0a0,inset -1px -1px 0 #fff,inset 2px 2px 0 #696969,inset -2px -2px 0 #e3e3e3;"></div><div style="position:absolute;left:155px;top:91px;width:17px;height:17px;background:#f0f0f0;box-shadow:inset 1px 1px 0 #e3e3e3,inset -1px -1px 0 #696969,inset 2px 2px 0 #fff,inset -2px -2px 0 #a0a0a0;"></div><svg class="px" style="left:160px;top:98px" width="7" height="4" viewBox="0 0 7 4" shape-rendering="crispEdges"><path d="M0 0h7v1h-1v1h-1v1h-1v1h-1v-1h-1v-1h-1v-1h-1z" fill="#000"/></svg>
<div style="position:absolute;left:97px;top:115px;width:77px;height:21px;background:#fff;box-shadow:inset 1px 1px 0 #a0a0a0,inset -1px -1px 0 #fff,inset 2px 2px 0 #696969,inset -2px -2px 0 #e3e3e3;"></div><div style="position:absolute;left:155px;top:117px;width:17px;height:17px;background:#f0f0f0;box-shadow:inset 1px 1px 0 #e3e3e3,inset -1px -1px 0 #696969,inset 2px 2px 0 #fff,inset -2px -2px 0 #a0a0a0;"></div><svg class="px" style="left:160px;top:124px" width="7" height="4" viewBox="0 0 7 4" shape-rendering="crispEdges"><path d="M0 0h7v1h-1v1h-1v1h-1v1h-1v-1h-1v-1h-1v-1h-1z" fill="#000"/></svg>
<div style="position:absolute;left:97px;top:141px;width:77px;height:21px;background:#fff;box-shadow:inset 1px 1px 0 #a0a0a0,inset -1px -1px 0 #fff,inset 2px 2px 0 #696969,inset -2px -2px 0 #e3e3e3;"></div><div style="position:absolute;left:155px;top:143px;width:17px;height:17px;background:#f0f0f0;box-shadow:inset 1px 1px 0 #e3e3e3,inset -1px -1px 0 #696969,inset 2px 2px 0 #fff,inset -2px -2px 0 #a0a0a0;"></div><svg class="px" style="left:160px;top:150px" width="7" height="4" viewBox="0 0 7 4" shape-rendering="crispEdges"><path d="M0 0h7v1h-1v1h-1v1h-1v1h-1v-1h-1v-1h-1v-1h-1z" fill="#000"/></svg>
<span class="t" style="left:101.02px;transform-origin:0 0;top:92.00px;font-size:12px;line-height:16px;transform:scaleX(0.923);">[-c-]</span>
<span class="t" style="left:118.93px;transform-origin:0 0;top:118.00px;font-size:12px;line-height:16px;transform:scaleX(0.974);">0.5</span>
<span class="t" style="left:100.96px;transform-origin:0 0;top:144.00px;font-size:12px;line-height:16px;transform:scaleX(0.901);">256 MB</span>
<span class="t" style="left:178.28px;transform-origin:0 0;top:117.00px;font-size:12px;line-height:16px;transform:scaleX(0.920);"><u>t</u>o</span>
<div style="position:absolute;left:193px;top:115px;width:77px;height:21px;background:#fff;box-shadow:inset 1px 1px 0 #a0a0a0,inset -1px -1px 0 #fff,inset 2px 2px 0 #696969,inset -2px -2px 0 #e3e3e3;"></div><div style="position:absolute;left:251px;top:117px;width:17px;height:17px;background:#f0f0f0;box-shadow:inset 1px 1px 0 #e3e3e3,inset -1px -1px 0 #696969,inset 2px 2px 0 #fff,inset -2px -2px 0 #a0a0a0;"></div><svg class="px" style="left:256px;top:124px" width="7" height="4" viewBox="0 0 7 4" shape-rendering="crispEdges"><path d="M0 0h7v1h-1v1h-1v1h-1v1h-1v-1h-1v-1h-1v-1h-1z" fill="#000"/></svg>
<span class="t" style="left:197.16px;transform-origin:0 0;top:118.00px;font-size:12px;line-height:16px;transform:scaleX(0.920);">8192.0</span>
<span class="t" style="left:276.67px;transform-origin:0 0;top:117.00px;font-size:12px;line-height:16px;transform:scaleX(0.868);">KB</span>
<div style="position:absolute;left:193px;top:90px;width:13px;height:13px;background:#fff;box-shadow:inset 1px 1px 0 #a0a0a0,inset -1px -1px 0 #fff,inset 2px 2px 0 #696969,inset -2px -2px 0 #e3e3e3;"></div>
<span class="t" style="left:210.82px;transform-origin:0 0;top:89.00px;font-size:12px;line-height:16px;transform:scaleX(0.912);">Force Write <u>A</u>ccess</span>
<div style="position:absolute;left:339px;top:90px;width:13px;height:13px;background:#fff;box-shadow:inset 1px 1px 0 #a0a0a0,inset -1px -1px 0 #fff,inset 2px 2px 0 #696969,inset -2px -2px 0 #e3e3e3;"></div><svg class="px" style="left:342px;top:93px" width="7" height="7" viewBox="0 0 7 7" shape-rendering="crispEdges"><path d="M0 2h1v1h1v1h1v-1h1v-1h1v-1h1v-1h1v3h-1v1h-1v1h-1v1h-1v1h-1v-1h-1v-1h-1z" fill="#000"/></svg>
<span class="t" style="left:356.61px;transform-origin:0 0;top:89.00px;font-size:12px;line-height:16px;transform:scaleX(0.927);">Di<u>r</u>ect I/O</span>
<div style="position:absolute;left:334px;top:106px;width:127px;height:58px;border:1px solid #a0a0a0;box-shadow:1px 1px 0 #fff,inset 1px 1px 0 #fff;box-sizing:border-box;"></div>
<svg class="px" style="left:340px;top:112px" width="12" height="12" viewBox="0 0 12 12"><circle cx="6" cy="6" r="5.5" fill="#fff"/><path d="M1.8 10.2A5.5 5.5 0 0 1 10.2 1.8" fill="none" stroke="#a0a0a0" stroke-width="1"/><path d="M2.5 9.5A4.5 4.5 0 0 1 9.5 2.5" fill="none" stroke="#696969" stroke-width="1"/><path d="M10.2 1.8A5.5 5.5 0 0 1 1.8 10.2" fill="none" stroke="#fff" stroke-width="1"/><path d="M9.5 2.5A4.5 4.5 0 0 1 2.5 9.5" fill="none" stroke="#e3e3e3" stroke-width="1"/></svg>
<svg class="px" style="left:340px;top:129px" width="12" height="12" viewBox="0 0 12 12"><circle cx="6" cy="6" r="5.5" fill="#fff"/><path d="M1.8 10.2A5.5 5.5 0 0 1 10.2 1.8" fill="none" stroke="#a0a0a0" stroke-width="1"/><path d="M2.5 9.5A4.5 4.5 0 0 1 9.5 2.5" fill="none" stroke="#696969" stroke-width="1"/><path d="M10.2 1.8A5.5 5.5 0 0 1 1.8 10.2" fill="none" stroke="#fff" stroke-width="1"/><path d="M9.5 2.5A4.5 4.5 0 0 1 2.5 9.5" fill="none" stroke="#e3e3e3" stroke-width="1"/><circle cx="6" cy="6" r="2" fill="#000"/></svg>
<svg class="px" style="left:340px;top:146px" width="12" height="12" viewBox="0 0 12 12"><circle cx="6" cy="6" r="5.5" fill="#fff"/><path d="M1.8 10.2A5.5 5.5 0 0 1 10.2 1.8" fill="none" stroke="#a0a0a0" stroke-width="1"/><path d="M2.5 9.5A4.5 4.5 0 0 1 9.5 2.5" fill="none" stroke="#696969" stroke-width="1"/><path d="M10.2 1.8A5.5 5.5 0 0 1 1.8 10.2" fill="none" stroke="#fff" stroke-width="1"/><path d="M9.5 2.5A4.5 4.5 0 0 1 2.5 9.5" fill="none" stroke="#e3e3e3" stroke-width="1"/></svg>
<span class="t" style="left:356.53px;transform-origin:0 0;top:111.00px;font-size:12px;line-height:16px;transform:scaleX(0.894);">I/O <u>C</u>omparison</span>
<span class="t" style="left:356.96px;transform-origin:0 0;top:128.00px;font-size:12px;line-height:16px;transform:scaleX(0.904);"><u>O</u>verlapped I/O</span>
<span class="t" style="left:356.64px;transform-origin:0 0;top:145.00px;font-size:12px;line-height:16px;transform:scaleX(0.892);"><u>N</u>either</span>
<span class="t" style="left:338.45px;transform-origin:0 0;top:169.00px;font-size:12px;line-height:16px;transform:scaleX(0.911);"><u>Q</u>ueue Depth:</span>
<div style="position:absolute;left:415px;top:167px;width:46px;height:21px;background:#fff;box-shadow:inset 1px 1px 0 #a0a0a0,inset -1px -1px 0 #fff,inset 2px 2px 0 #696969,inset -2px -2px 0 #e3e3e3;"></div><div style="position:absolute;left:442px;top:169px;width:17px;height:17px;background:#f0f0f0;box-shadow:inset 1px 1px 0 #e3e3e3,inset -1px -1px 0 #696969,inset 2px 2px 0 #fff,inset -2px -2px 0 #a0a0a0;"></div><svg class="px" style="left:447px;top:176px" width="7" height="4" viewBox="0 0 7 4" shape-rendering="crispEdges"><path d="M0 0h7v1h-1v1h-1v1h-1v1h-1v-1h-1v-1h-1v-1h-1z" fill="#000"/></svg>
<span class="t" style="left:419.27px;transform-origin:0 0;top:170.00px;font-size:12px;line-height:16px;transform:scaleX(0.948);">4</span>
<span class="t" style="left:21.48px;transform-origin:0 0;top:192.00px;font-size:12px;line-height:16px;transform:scaleX(0.860);">Controlled <u>b</u>y:</span>
<div style="position:absolute;left:21px;top:207px;width:212px;height:21px;background:#fff;box-shadow:inset 1px 1px 0 #a0a0a0,inset -1px -1px 0 #fff,inset 2px 2px 0 #696969,inset -2px -2px 0 #e3e3e3;"></div><div style="position:absolute;left:214px;top:209px;width:17px;height:17px;background:#f0f0f0;box-shadow:inset 1px 1px 0 #e3e3e3,inset -1px -1px 0 #696969,inset 2px 2px 0 #fff,inset -2px -2px 0 #a0a0a0;"></div><svg class="px" style="left:219px;top:216px" width="7" height="4" viewBox="0 0 7 4" shape-rendering="crispEdges"><path d="M0 0h7v1h-1v1h-1v1h-1v1h-1v-1h-1v-1h-1v-1h-1z" fill="#000"/></svg>
<div style="position:absolute;left:393px;top:207px;width:69px;height:20px;background:#f0f0f0;box-shadow:inset 0 0 0 1px #6a6a6a,inset 2px 2px 0 #fff,inset -2px -2px 0 #696969,inset 3px 3px 0 #e8e8e8,inset -3px -3px 0 #a0a0a0;"></div>
<span class="t" style="left:416.07px;transform-origin:0 0;top:209.00px;font-size:12px;line-height:16px;transform:scaleX(0.886);"><u>S</u>tart</span>
<div style="position:absolute;left:21px;top:233px;width:440px;height:45px;background:#fff;box-shadow:inset 1px 1px 0 #a0a0a0,inset -1px -1px 0 #fff,inset 2px 2px 0 #696969,inset -2px -2px 0 #e3e3e3;"></div>
<div style="position:absolute;left:444px;top:235px;width:15px;height:41px;background:#f1f1f1;box-shadow:inset 1px 0 0 #e9e9e9;"></div>
<svg class="px" style="left:449px;top:242px" width="7" height="4" viewBox="0 0 7 4" shape-rendering="crispEdges"><path d="M3 0h1v1h1v1h1v1h1v1h-7v-1h1v-1h1v-1h1z" fill="#a0a0a0"/></svg>
<svg class="px" style="left:449px;top:267px" width="7" height="4" viewBox="0 0 7 4" shape-rendering="crispEdges"><path d="M0 0h7v1h-1v1h-1v1h-1v1h-1v-1h-1v-1h-1v-1h-1z" fill="#a0a0a0"/></svg>
<span class="t ds" style="left:27.80px;transform-origin:0 0;top:239.00px;font-size:13.6px;line-height:17px;transform:scaleX(1.023);">Corsair Force GT 120GB</span>
<span class="t ds" style="left:27.62px;transform-origin:0 0;top:258.00px;font-size:13.6px;line-height:17px;transform:scaleX(1.086);">Kjørte timer: 8153 - Total write: 3,78TB</span>
<div style="position:absolute;left:21px;top:288px;width:440px;height:286px;border:1px solid #a0a0a0;box-shadow:1px 1px 0 #fff,inset 1px 1px 0 #fff;box-sizing:border-box;"></div>
<div style="position:absolute;left:209px;top:286px;width:64px;height:6px;background:#f0f0f0;"></div>
<span class="t" style="left:211.48px;transform-origin:0 0;top:281.00px;font-size:12px;line-height:16px;transform:scaleX(0.904);">Test Results</span>
<span class="t" style="left:156.89px;transform-origin:0 0;top:297.00px;font-size:12px;line-height:16px;transform:scaleX(0.937);">Write</span>
<div style="position:absolute;left:190px;top:302px;width:25px;height:5px;background:#f00;"></div>
<span class="t" style="left:239.67px;transform-origin:0 0;top:297.00px;font-size:12px;line-height:16px;transform:scaleX(0.967);">Read</span>
<div style="position:absolute;left:273px;top:302px;width:25px;height:5px;background:#008000;"></div>
<span class="t" style="left:368.89px;transform-origin:0 0;top:297.00px;font-size:12px;line-height:16px;transform:scaleX(0.929);">Write</span>
<span class="t" style="left:416.58px;transform-origin:0 0;top:297.00px;font-size:12px;line-height:16px;transform:scaleX(0.960);">Read</span>
<div class="chart">
<i class="g" style="left:29px"></i>
<i class="g" style="left:59px"></i>
<i class="g" style="left:89px"></i>
<i class="g" style="left:119px"></i>
<i class="g" style="left:149px"></i>
<i class="g" style="left:179px"></i>
<i class="g" style="left:209px"></i>
<i class="g" style="left:239px"></i>
<i class="g" style="left:269px"></i>
<i class="r" style="top:4px;width:2.5px"></i><i class="n" style="top:9px;width:4.2px"></i>
<i class="r" style="top:18px;width:6.9px"></i><i class="n" style="top:23px;width:10.4px"></i>
<i class="r" style="top:33px;width:15.3px"></i><i class="n" style="top:38px;width:19.9px"></i>
<i class="r" style="top:47px;width:61.8px"></i><i class="n" style="top:52px;width:45.6px"></i>
<i class="r" style="top:62px;width:98.3px"></i><i class="n" style="top:67px;width:68.7px"></i>
<i class="r" style="top:76px;width:111.6px"></i><i class="n" style="top:81px;width:93.2px"></i>
<i class="r" style="top:91px;width:130.7px"></i><i class="n" style="top:96px;width:118.8px"></i>
<i class="r" style="top:106px;width:135.3px"></i><i class="n" style="top:111px;width:121.2px"></i>
<i class="r" style="top:120px;width:138.8px"></i><i class="n" style="top:125px;width:136.0px"></i>
<i class="r" style="top:135px;width:143.3px"></i><i class="n" style="top:140px;width:142.0px"></i>
<i class="r" style="top:149px;width:143.7px"></i><i class="n" style="top:154px;width:155.0px"></i>
<i class="r" style="top:164px;width:146.4px"></i><i class="n" style="top:169px;width:160.4px"></i>
<i class="r" style="top:178px;width:146.7px"></i><i class="n" style="top:183px;width:162.6px"></i>
<i class="r" style="top:193px;width:145.7px"></i><i class="n" style="top:198px;width:162.9px"></i>
<i class="r" style="top:208px;width:145.7px"></i><i class="n" style="top:213px;width:162.9px"></i>
</div>
<span class="t" style="left:40.16px;transform-origin:100% 0;top:317.00px;font-size:12px;line-height:16px;transform:scaleX(0.893);">0.5</span>
<span class="t" style="left:371.58px;transform-origin:100% 0;top:317.00px;font-size:12px;line-height:16px;transform:scaleX(0.893);">12895</span>
<span class="t" style="left:419.38px;transform-origin:100% 0;top:317.00px;font-size:12px;line-height:16px;transform:scaleX(0.893);">18722</span>
<span class="t" style="left:40.05px;transform-origin:100% 0;top:331.00px;font-size:12px;line-height:16px;transform:scaleX(0.893);">1.0</span>
<span class="t" style="left:371.58px;transform-origin:100% 0;top:331.00px;font-size:12px;line-height:16px;transform:scaleX(0.893);">27579</span>
<span class="t" style="left:419.38px;transform-origin:100% 0;top:331.00px;font-size:12px;line-height:16px;transform:scaleX(0.893);">39168</span>
<span class="t" style="left:40.05px;transform-origin:100% 0;top:346.00px;font-size:12px;line-height:16px;transform:scaleX(0.893);">2.0</span>
<span class="t" style="left:371.58px;transform-origin:100% 0;top:346.00px;font-size:12px;line-height:16px;transform:scaleX(0.893);">55668</span>
<span class="t" style="left:419.27px;transform-origin:100% 0;top:346.00px;font-size:12px;line-height:16px;transform:scaleX(0.893);">70850</span>
<span class="t" style="left:40.05px;transform-origin:100% 0;top:360.00px;font-size:12px;line-height:16px;transform:scaleX(0.893);">4.0</span>
<span class="t" style="left:364.86px;transform-origin:100% 0;top:360.00px;font-size:12px;line-height:16px;transform:scaleX(0.893);">210542</span>
<span class="t" style="left:412.66px;transform-origin:100% 0;top:360.00px;font-size:12px;line-height:16px;transform:scaleX(0.893);">156745</span>
<span class="t" style="left:40.05px;transform-origin:100% 0;top:375.00px;font-size:12px;line-height:16px;transform:scaleX(0.893);">8.0</span>
<span class="t" style="left:364.86px;transform-origin:100% 0;top:375.00px;font-size:12px;line-height:16px;transform:scaleX(0.893);">332309</span>
<span class="t" style="left:412.55px;transform-origin:100% 0;top:375.00px;font-size:12px;line-height:16px;transform:scaleX(0.893);">233510</span>
<span class="t" style="left:33.33px;transform-origin:100% 0;top:389.00px;font-size:12px;line-height:16px;transform:scaleX(0.893);">16.0</span>
<span class="t" style="left:364.65px;transform-origin:100% 0;top:389.00px;font-size:12px;line-height:16px;transform:scaleX(0.893);">376504</span>
<span class="t" style="left:412.66px;transform-origin:100% 0;top:389.00px;font-size:12px;line-height:16px;transform:scaleX(0.893);">315223</span>
<span class="t" style="left:33.33px;transform-origin:100% 0;top:404.00px;font-size:12px;line-height:16px;transform:scaleX(0.893);">32.0</span>
<span class="t" style="left:364.75px;transform-origin:100% 0;top:404.00px;font-size:12px;line-height:16px;transform:scaleX(0.893);">440310</span>
<span class="t" style="left:412.66px;transform-origin:100% 0;top:404.00px;font-size:12px;line-height:16px;transform:scaleX(0.893);">400649</span>
<span class="t" style="left:33.33px;transform-origin:100% 0;top:419.00px;font-size:12px;line-height:16px;transform:scaleX(0.893);">64.0</span>
<span class="t" style="left:364.86px;transform-origin:100% 0;top:419.00px;font-size:12px;line-height:16px;transform:scaleX(0.893);">455658</span>
<span class="t" style="left:412.66px;transform-origin:100% 0;top:419.00px;font-size:12px;line-height:16px;transform:scaleX(0.893);">408816</span>
<span class="t" style="left:26.62px;transform-origin:100% 0;top:433.00px;font-size:12px;line-height:16px;transform:scaleX(0.893);">128.0</span>
<span class="t" style="left:364.86px;transform-origin:100% 0;top:433.00px;font-size:12px;line-height:16px;transform:scaleX(0.893);">467469</span>
<span class="t" style="left:412.66px;transform-origin:100% 0;top:433.00px;font-size:12px;line-height:16px;transform:scaleX(0.893);">457886</span>
<span class="t" style="left:26.62px;transform-origin:100% 0;top:448.00px;font-size:12px;line-height:16px;transform:scaleX(0.893);">256.0</span>
<span class="t" style="left:364.75px;transform-origin:100% 0;top:448.00px;font-size:12px;line-height:16px;transform:scaleX(0.893);">482250</span>
<span class="t" style="left:412.45px;transform-origin:100% 0;top:448.00px;font-size:12px;line-height:16px;transform:scaleX(0.893);">477944</span>
<span class="t" style="left:26.62px;transform-origin:100% 0;top:462.00px;font-size:12px;line-height:16px;transform:scaleX(0.893);">512.0</span>
<span class="t" style="left:364.86px;transform-origin:100% 0;top:462.00px;font-size:12px;line-height:16px;transform:scaleX(0.893);">483667</span>
<span class="t" style="left:412.66px;transform-origin:100% 0;top:462.00px;font-size:12px;line-height:16px;transform:scaleX(0.893);">521233</span>
<span class="t" style="left:20.01px;transform-origin:100% 0;top:477.00px;font-size:12px;line-height:16px;transform:scaleX(0.893);">1024.0</span>
<span class="t" style="left:364.86px;transform-origin:100% 0;top:477.00px;font-size:12px;line-height:16px;transform:scaleX(0.893);">492542</span>
<span class="t" style="left:412.66px;transform-origin:100% 0;top:477.00px;font-size:12px;line-height:16px;transform:scaleX(0.893);">539267</span>
<span class="t" style="left:20.01px;transform-origin:100% 0;top:491.00px;font-size:12px;line-height:16px;transform:scaleX(0.893);">2048.0</span>
<span class="t" style="left:364.65px;transform-origin:100% 0;top:491.00px;font-size:12px;line-height:16px;transform:scaleX(0.893);">493674</span>
<span class="t" style="left:412.66px;transform-origin:100% 0;top:491.00px;font-size:12px;line-height:16px;transform:scaleX(0.893);">546588</span>
<span class="t" style="left:20.01px;transform-origin:100% 0;top:506.00px;font-size:12px;line-height:16px;transform:scaleX(0.893);">4096.0</span>
<span class="t" style="left:364.86px;transform-origin:100% 0;top:506.00px;font-size:12px;line-height:16px;transform:scaleX(0.893);">490293</span>
<span class="t" style="left:412.66px;transform-origin:100% 0;top:506.00px;font-size:12px;line-height:16px;transform:scaleX(0.893);">547827</span>
<span class="t" style="left:20.01px;transform-origin:100% 0;top:521.00px;font-size:12px;line-height:16px;transform:scaleX(0.893);">8192.0</span>
<span class="t" style="left:364.86px;transform-origin:100% 0;top:521.00px;font-size:12px;line-height:16px;transform:scaleX(0.893);">490293</span>
<span class="t" style="left:412.66px;transform-origin:100% 0;top:521.00px;font-size:12px;line-height:16px;transform:scaleX(0.893);">547827</span>
<span class="t" style="left:56.34px;transform-origin:50% 0;top:544.00px;font-size:12px;line-height:16px;transform:scaleX(0.893);">0</span>
<span class="t" style="left:79.47px;transform-origin:50% 0;top:544.00px;font-size:12px;line-height:16px;transform:scaleX(0.893);">100</span>
<span class="t" style="left:109.63px;transform-origin:50% 0;top:544.00px;font-size:12px;line-height:16px;transform:scaleX(0.893);">200</span>
<span class="t" style="left:139.68px;transform-origin:50% 0;top:544.00px;font-size:12px;line-height:16px;transform:scaleX(0.893);">300</span>
<span class="t" style="left:169.79px;transform-origin:50% 0;top:544.00px;font-size:12px;line-height:16px;transform:scaleX(0.893);">400</span>
<span class="t" style="left:199.68px;transform-origin:50% 0;top:544.00px;font-size:12px;line-height:16px;transform:scaleX(0.893);">500</span>
<span class="t" style="left:229.63px;transform-origin:50% 0;top:544.00px;font-size:12px;line-height:16px;transform:scaleX(0.893);">600</span>
<span class="t" style="left:259.63px;transform-origin:50% 0;top:544.00px;font-size:12px;line-height:16px;transform:scaleX(0.893);">700</span>
<span class="t" style="left:289.68px;transform-origin:50% 0;top:544.00px;font-size:12px;line-height:16px;transform:scaleX(0.893);">800</span>
<span class="t" style="left:319.63px;transform-origin:50% 0;top:544.00px;font-size:12px;line-height:16px;transform:scaleX(0.893);">900</span>
<span class="t" style="left:346.11px;transform-origin:50% 0;top:544.00px;font-size:12px;line-height:16px;transform:scaleX(0.893);">1000</span>
<span class="t" style="left:144.68px;transform-origin:0 0;top:557.00px;font-size:12px;line-height:16px;transform:scaleX(0.907);">Transfer Rate - MB / Sec</span>
<div class="status"></div>
<span class="t ns" style="left:9.50px;transform-origin:0 0;top:591.00px;font-size:12px;line-height:16px;transform:scaleX(0.940);">For Help, press F1</span>
<svg class="px" style="left:461px;top:594px" width="13" height="13" viewBox="0 0 13 13"><path d="M13 1.5L1.5 13M13 5.5L5.5 13M13 9.5L9.5 13" stroke="#fff" stroke-width="1.2"/><path d="M12.5 1L1 12.5M12.5 5L5 12.5M12.5 9L9 12.5" stroke="#a4a4a4" stroke-width="1.7"/></svg>
</div>
<div style="position:absolute;left:482px;top:0;width:1px;height:615px;background:#fff"></div>
<div class="win" style="left:483px;top:0px">
<div class="glassT"></div><div class="glassT2"></div><div class="glassL"></div><div class="glassR"></div>
<div class="glow"></div>
<div class="edgeO"></div><div class="edgeI"></div>
<svg class="px" style="left:8px;top:7px" width="16" height="16" viewBox="0 0 16 16"><rect width="16" height="16" fill="#fff"/><ellipse cx="5.6" cy="8" rx="4.2" ry="7.6" transform="rotate(22 5.6 8)" fill="none" stroke="#f00" stroke-width="1.1"/><rect x="4.5" y="5.5" width="11" height="5" fill="#a3968a" stroke="#e8202c" stroke-width="1"/><path d="M6.5 9.5l1-3l1 3M9 6.5h2M10 6.5v3M11.5 6.5h2M12.5 6.5v3" stroke="#e8e0d8" stroke-width=".7" fill="none"/><rect x="13.6" y="6.6" width="1.2" height="2.8" fill="none" stroke="#e8e0d8" stroke-width=".5"/></svg>
<span class="t ds" style="left:28.53px;transform-origin:0 0;top:7.00px;font-size:12px;line-height:16px;transform:scaleX(1.007);">Untitled - ATTO Disk Benchmark</span>
<div class="capwrap"></div>
<div class="cap cmin"></div><div class="cap cmax"></div><div class="cap cclose"></div>
<svg class="px" style="left:381px;top:10px" width="12" height="5" viewBox="0 0 12 5"><rect x=".5" y=".5" width="11" height="4" fill="#fff" stroke="#3a4058" stroke-width="1"/></svg>
<svg class="px" style="left:408px;top:5px" width="12" height="10" viewBox="0 0 12 10"><path d="M.5 .5h11v9h-11z M3.5 3.5v3h5v-3z" fill="#fff" fill-rule="evenodd" stroke="#3a4058" stroke-width="1"/></svg>
<svg class="px" style="left:445px;top:4px" width="13" height="12" viewBox="0 0 13 12"><path d="M1 1.5h4l1.5 1.9l1.5-1.9h4l-3.6 4.4l3.8 4.6h-4.1l-1.6-2.1l-1.6 2.1h-4.1l3.8-4.6z" fill="#fff" stroke="#40435a" stroke-width="1" stroke-linejoin="round"/></svg>
<div class="client">
</div>
<div class="menubar"></div>
<span class="t ns" style="left:14.23px;transform-origin:0 0;top:32.00px;font-size:12px;line-height:16px;transform:scaleX(1.007);"><u>F</u>ile</span>
<span class="t ns" style="left:46.78px;transform-origin:0 0;top:32.00px;font-size:12px;line-height:16px;transform:scaleX(0.977);"><u>V</u>iew</span>
<span class="t ns" style="left:84.98px;transform-origin:0 0;top:32.00px;font-size:12px;line-height:16px;transform:scaleX(1.062);"><u>H</u>elp</span>
<div class="tbline1"></div><div class="tbline2"></div><div class="tbline3"></div>
<div class="tbleft"></div><div class="tbsep"></div><div class="tbright"></div>
<div style="position:absolute;left:14px;top:55px;width:23px;height:22px;background:#f0f0f0;box-shadow:inset 1px 1px 0 #fff,inset -1px -1px 0 #7d7d7d,inset 2px 2px 0 #f9f9f9,inset -2px -2px 0 #d4d4d4;"></div>
<div style="position:absolute;left:37px;top:55px;width:23px;height:22px;background:#f0f0f0;box-shadow:inset 1px 1px 0 #fff,inset -1px -1px 0 #7d7d7d,inset 2px 2px 0 #f9f9f9,inset -2px -2px 0 #d4d4d4;"></div>
<div style="position:absolute;left:60px;top:55px;width:23px;height:22px;background:#f0f0f0;box-shadow:inset 1px 1px 0 #fff,inset -1px -1px 0 #7d7d7d,inset 2px 2px 0 #f9f9f9,inset -2px -2px 0 #d4d4d4;"></div>
<div style="position:absolute;left:91px;top:55px;width:23px;height:22px;background:#f0f0f0;box-shadow:inset 1px 1px 0 #fff,inset -1px -1px 0 #7d7d7d,inset 2px 2px 0 #f9f9f9,inset -2px -2px 0 #d4d4d4;"></div>
<div style="position:absolute;left:114px;top:55px;width:23px;height:22px;background:#f0f0f0;box-shadow:inset 1px 1px 0 #fff,inset -1px -1px 0 #7d7d7d,inset 2px 2px 0 #f9f9f9,inset -2px -2px 0 #d4d4d4;"></div>
<div style="position:absolute;left:137px;top:55px;width:23px;height:22px;background:#f0f0f0;box-shadow:inset 1px 1px 0 #fff,inset -1px -1px 0 #7d7d7d,inset 2px 2px 0 #f9f9f9,inset -2px -2px 0 #d4d4d4;"></div>
<div style="position:absolute;left:160px;top:55px;width:23px;height:22px;background:#f0f0f0;box-shadow:inset 1px 1px 0 #fff,inset -1px -1px 0 #7d7d7d,inset 2px 2px 0 #f9f9f9,inset -2px -2px 0 #d4d4d4;"></div>
<div style="position:absolute;left:183px;top:55px;width:23px;height:22px;background:#f0f0f0;box-shadow:inset 1px 1px 0 #fff,inset -1px -1px 0 #7d7d7d,inset 2px 2px 0 #f9f9f9,inset -2px -2px 0 #d4d4d4;"></div>
<svg class="px" style="left:20px;top:59px" width="11" height="13" viewBox="0 0 11 13" shape-rendering="crispEdges"><rect x="0" y="0" width="8" height="1" fill="#000"/><rect x="0" y="1" width="1" height="1" fill="#000"/><rect x="1" y="1" width="6" height="1" fill="#fff"/><rect x="7" y="1" width="2" height="1" fill="#000"/><rect x="0" y="2" width="1" height="1" fill="#000"/><rect x="1" y="2" width="6" height="1" fill="#fff"/><rect x="7" y="2" width="1" height="1" fill="#000"/><rect x="8" y="2" width="1" height="1" fill="#fff"/><rect x="9" y="2" width="1" height="1" fill="#000"/><rect x="0" y="3" width="1" height="1" fill="#000"/><rect x="1" y="3" width="6" height="1" fill="#fff"/><rect x="7" y="3" width="4" height="1" fill="#000"/><rect x="0" y="4" width="1" height="1" fill="#000"/><rect x="1" y="4" width="9" height="1" fill="#fff"/><rect x="10" y="4" width="1" height="1" fill="#000"/><rect x="0" y="5" width="1" height="1" fill="#000"/><rect x="1" y="5" width="9" height="1" fill="#fff"/><rect x="10" y="5" width="1" height="1" fill="#000"/><rect x="0" y="6" width="1" height="1" fill="#000"/><rect x="1" y="6" width="9" height="1" fill="#fff"/><rect x="10" y="6" width="1" height="1" fill="#000"/><rect x="0" y="7" width="1" height="1" fill="#000"/><rect x="1" y="7" width="9" height="1" fill="#fff"/><rect x="10" y="7" width="1" height="1" fill="#000"/><rect x="0" y="8" width="1" height="1" fill="#000"/><rect x="1" y="8" width="9" height="1" fill="#fff"/><rect x="10" y="8" width="1" height="1" fill="#000"/><rect x="0" y="9" width="1" height="1" fill="#000"/><rect x="1" y="9" width="9" height="1" fill="#fff"/><rect x="10" y="9" width="1" height="1" fill="#000"/><rect x="0" y="10" width="1" height="1" fill="#000"/><rect x="1" y="10" width="9" height="1" fill="#fff"/><rect x="10" y="10" width="1" height="1" fill="#000"/><rect x="0" y="11" width="1" height="1" fill="#000"/><rect x="1" y="11" width="9" height="1" fill="#fff"/><rect x="10" y="11" width="1" height="1" fill="#000"/><rect x="0" y="12" width="11" height="1" fill="#000"/></svg>
<svg class="px" style="left:41px;top:58px" width="16" height="13" viewBox="0 0 16 13" shape-rendering="crispEdges"><rect x="8" y="0" width="4" height="1" fill="#000"/><rect x="7" y="1" width="1" height="1" fill="#000"/><rect x="12" y="1" width="1" height="1" fill="#000"/><rect x="14" y="1" width="1" height="1" fill="#000"/><rect x="13" y="2" width="2" height="1" fill="#000"/><rect x="1" y="3" width="3" height="1" fill="#000"/><rect x="12" y="3" width="3" height="1" fill="#000"/><rect x="0" y="4" width="1" height="1" fill="#000"/><rect x="1" y="4" width="1" height="1" fill="#ffff00"/><rect x="2" y="4" width="1" height="1" fill="#fff"/><rect x="3" y="4" width="1" height="1" fill="#ffff00"/><rect x="4" y="4" width="7" height="1" fill="#000"/><rect x="0" y="5" width="1" height="1" fill="#000"/><rect x="1" y="5" width="1" height="1" fill="#fff"/><rect x="2" y="5" width="1" height="1" fill="#ffff00"/><rect x="3" y="5" width="1" height="1" fill="#fff"/><rect x="4" y="5" width="1" height="1" fill="#ffff00"/><rect x="5" y="5" width="1" height="1" fill="#fff"/><rect x="6" y="5" width="1" height="1" fill="#ffff00"/><rect x="7" y="5" width="1" height="1" fill="#fff"/><rect x="8" y="5" width="1" height="1" fill="#ffff00"/><rect x="9" y="5" width="1" height="1" fill="#fff"/><rect x="10" y="5" width="1" height="1" fill="#000"/><rect x="0" y="6" width="1" height="1" fill="#000"/><rect x="1" y="6" width="1" height="1" fill="#ffff00"/><rect x="2" y="6" width="1" height="1" fill="#fff"/><rect x="3" y="6" width="1" height="1" fill="#ffff00"/><rect x="4" y="6" width="1" height="1" fill="#fff"/><rect x="5" y="6" width="1" height="1" fill="#ffff00"/><rect x="6" y="6" width="1" height="1" fill="#fff"/><rect x="7" y="6" width="1" height="1" fill="#ffff00"/><rect x="8" y="6" width="1" height="1" fill="#fff"/><rect x="9" y="6" width="1" height="1" fill="#ffff00"/><rect x="10" y="6" width="1" height="1" fill="#000"/><rect x="0" y="7" width="1" height="1" fill="#000"/><rect x="1" y="7" width="1" height="1" fill="#fff"/><rect x="2" y="7" width="1" height="1" fill="#ffff00"/><rect x="3" y="7" width="1" height="1" fill="#fff"/><rect x="4" y="7" width="1" height="1" fill="#ffff00"/><rect x="5" y="7" width="10" height="1" fill="#000"/><rect x="0" y="8" width="1" height="1" fill="#000"/><rect x="1" y="8" width="1" height="1" fill="#ffff00"/><rect x="2" y="8" width="1" height="1" fill="#fff"/><rect x="3" y="8" width="1" height="1" fill="#ffff00"/><rect x="4" y="8" width="1" height="1" fill="#000"/><rect x="5" y="8" width="8" height="1" fill="#808000"/><rect x="13" y="8" width="1" height="1" fill="#000"/><rect x="0" y="9" width="1" height="1" fill="#000"/><rect x="1" y="9" width="1" height="1" fill="#fff"/><rect x="2" y="9" width="1" height="1" fill="#ffff00"/><rect x="3" y="9" width="1" height="1" fill="#000"/><rect x="4" y="9" width="8" height="1" fill="#808000"/><rect x="12" y="9" width="1" height="1" fill="#000"/><rect x="0" y="10" width="1" height="1" fill="#000"/><rect x="1" y="10" width="1" height="1" fill="#ffff00"/><rect x="2" y="10" width="1" height="1" fill="#000"/><rect x="3" y="10" width="8" height="1" fill="#808000"/><rect x="11" y="10" width="1" height="1" fill="#000"/><rect x="0" y="11" width="2" height="1" fill="#000"/><rect x="2" y="11" width="8" height="1" fill="#808000"/><rect x="10" y="11" width="1" height="1" fill="#000"/><rect x="0" y="12" width="11" height="1" fill="#000"/></svg>
<svg class="px" style="left:64px;top:58px" width="14" height="14" viewBox="0 0 14 14" shape-rendering="crispEdges"><rect x="0" y="0" width="14" height="1" fill="#000"/><rect x="0" y="1" width="1" height="1" fill="#000"/><rect x="1" y="1" width="1" height="1" fill="#808000"/><rect x="2" y="1" width="1" height="1" fill="#000"/><rect x="3" y="1" width="8" height="1" fill="#fff"/><rect x="11" y="1" width="1" height="1" fill="#000"/><rect x="12" y="1" width="1" height="1" fill="#fff"/><rect x="13" y="1" width="1" height="1" fill="#000"/><rect x="0" y="2" width="1" height="1" fill="#000"/><rect x="1" y="2" width="1" height="1" fill="#808000"/><rect x="2" y="2" width="1" height="1" fill="#000"/><rect x="3" y="2" width="1" height="1" fill="#fff"/><rect x="4" y="2" width="6" height="1" fill="#f0f0f0"/><rect x="10" y="2" width="1" height="1" fill="#fff"/><rect x="11" y="2" width="1" height="1" fill="#000"/><rect x="12" y="2" width="1" height="1" fill="#808000"/><rect x="13" y="2" width="1" height="1" fill="#000"/><rect x="0" y="3" width="1" height="1" fill="#000"/><rect x="1" y="3" width="1" height="1" fill="#808000"/><rect x="2" y="3" width="1" height="1" fill="#000"/><rect x="3" y="3" width="1" height="1" fill="#fff"/><rect x="4" y="3" width="6" height="1" fill="#f0f0f0"/><rect x="10" y="3" width="1" height="1" fill="#fff"/><rect x="11" y="3" width="1" height="1" fill="#000"/><rect x="12" y="3" width="1" height="1" fill="#808000"/><rect x="13" y="3" width="1" height="1" fill="#000"/><rect x="0" y="4" width="1" height="1" fill="#000"/><rect x="1" y="4" width="1" height="1" fill="#808000"/><rect x="2" y="4" width="1" height="1" fill="#000"/><rect x="3" y="4" width="1" height="1" fill="#fff"/><rect x="4" y="4" width="6" height="1" fill="#f0f0f0"/><rect x="10" y="4" width="1" height="1" fill="#fff"/><rect x="11" y="4" width="1" height="1" fill="#000"/><rect x="12" y="4" width="1" height="1" fill="#808000"/><rect x="13" y="4" width="1" height="1" fill="#000"/><rect x="0" y="5" width="1" height="1" fill="#000"/><rect x="1" y="5" width="1" height="1" fill="#808000"/><rect x="2" y="5" width="1" height="1" fill="#000"/><rect x="3" y="5" width="1" height="1" fill="#fff"/><rect x="4" y="5" width="6" height="1" fill="#f0f0f0"/><rect x="10" y="5" width="1" height="1" fill="#fff"/><rect x="11" y="5" width="1" height="1" fill="#000"/><rect x="12" y="5" width="1" height="1" fill="#808000"/><rect x="13" y="5" width="1" height="1" fill="#000"/><rect x="0" y="6" width="1" height="1" fill="#000"/><rect x="1" y="6" width="1" height="1" fill="#808000"/><rect x="2" y="6" width="1" height="1" fill="#000"/><rect x="3" y="6" width="8" height="1" fill="#fff"/><rect x="11" y="6" width="1" height="1" fill="#000"/><rect x="12" y="6" width="1" height="1" fill="#808000"/><rect x="13" y="6" width="1" height="1" fill="#000"/><rect x="0" y="7" width="1" height="1" fill="#000"/><rect x="1" y="7" width="2" height="1" fill="#808000"/><rect x="3" y="7" width="8" height="1" fill="#000"/><rect x="11" y="7" width="2" height="1" fill="#808000"/><rect x="13" y="7" width="1" height="1" fill="#000"/><rect x="0" y="8" width="1" height="1" fill="#000"/><rect x="1" y="8" width="12" height="1" fill="#808000"/><rect x="13" y="8" width="1" height="1" fill="#000"/><rect x="0" y="9" width="1" height="1" fill="#000"/><rect x="1" y="9" width="2" height="1" fill="#808000"/><rect x="3" y="9" width="9" height="1" fill="#000"/><rect x="12" y="9" width="1" height="1" fill="#808000"/><rect x="13" y="9" width="1" height="1" fill="#000"/><rect x="0" y="10" width="1" height="1" fill="#000"/><rect x="1" y="10" width="2" height="1" fill="#808000"/><rect x="3" y="10" width="6" height="1" fill="#000"/><rect x="9" y="10" width="2" height="1" fill="#fff"/><rect x="11" y="10" width="1" height="1" fill="#000"/><rect x="12" y="10" width="1" height="1" fill="#808000"/><rect x="13" y="10" width="1" height="1" fill="#000"/><rect x="0" y="11" width="1" height="1" fill="#000"/><rect x="1" y="11" width="2" height="1" fill="#808000"/><rect x="3" y="11" width="6" height="1" fill="#000"/><rect x="9" y="11" width="2" height="1" fill="#fff"/><rect x="11" y="11" width="1" height="1" fill="#000"/><rect x="12" y="11" width="1" height="1" fill="#808000"/><rect x="13" y="11" width="1" height="1" fill="#000"/><rect x="0" y="12" width="1" height="1" fill="#000"/><rect x="1" y="12" width="2" height="1" fill="#808000"/><rect x="3" y="12" width="6" height="1" fill="#000"/><rect x="9" y="12" width="2" height="1" fill="#fff"/><rect x="11" y="12" width="1" height="1" fill="#000"/><rect x="12" y="12" width="1" height="1" fill="#808000"/><rect x="13" y="12" width="1" height="1" fill="#000"/><rect x="1" y="13" width="13" height="1" fill="#000"/></svg>
<svg class="px" style="left:94px;top:58px" width="16" height="14" viewBox="0 0 16 14" shape-rendering="crispEdges"><rect x="5" y="0" width="9" height="1" fill="#000"/><rect x="4" y="1" width="1" height="1" fill="#000"/><rect x="5" y="1" width="7" height="1" fill="#fff"/><rect x="12" y="1" width="1" height="1" fill="#000"/><rect x="4" y="2" width="1" height="1" fill="#000"/><rect x="5" y="2" width="1" height="1" fill="#fff"/><rect x="6" y="2" width="5" height="1" fill="#000"/><rect x="11" y="2" width="1" height="1" fill="#fff"/><rect x="12" y="2" width="2" height="1" fill="#000"/><rect x="3" y="3" width="1" height="1" fill="#000"/><rect x="4" y="3" width="7" height="1" fill="#fff"/><rect x="11" y="3" width="1" height="1" fill="#000"/><rect x="12" y="3" width="1" height="1" fill="#fff"/><rect x="14" y="3" width="1" height="1" fill="#000"/><rect x="3" y="4" width="1" height="1" fill="#000"/><rect x="4" y="4" width="1" height="1" fill="#fff"/><rect x="5" y="4" width="5" height="1" fill="#000"/><rect x="10" y="4" width="1" height="1" fill="#fff"/><rect x="11" y="4" width="1" height="1" fill="#000"/><rect x="13" y="4" width="1" height="1" fill="#000"/><rect x="15" y="4" width="1" height="1" fill="#000"/><rect x="2" y="5" width="1" height="1" fill="#000"/><rect x="3" y="5" width="8" height="1" fill="#fff"/><rect x="11" y="5" width="1" height="1" fill="#000"/><rect x="13" y="5" width="1" height="1" fill="#000"/><rect x="15" y="5" width="1" height="1" fill="#000"/><rect x="1" y="6" width="12" height="1" fill="#000"/><rect x="14" y="6" width="2" height="1" fill="#000"/><rect x="0" y="7" width="1" height="1" fill="#000"/><rect x="1" y="7" width="11" height="1" fill="#fff"/><rect x="12" y="7" width="2" height="1" fill="#000"/><rect x="15" y="7" width="1" height="1" fill="#000"/><rect x="0" y="8" width="12" height="1" fill="#000"/><rect x="13" y="8" width="1" height="1" fill="#000"/><rect x="15" y="8" width="1" height="1" fill="#000"/><rect x="0" y="9" width="1" height="1" fill="#000"/><rect x="1" y="9" width="10" height="1" fill="#fff"/><rect x="11" y="9" width="1" height="1" fill="#000"/><rect x="13" y="9" width="3" height="1" fill="#000"/><rect x="0" y="10" width="1" height="1" fill="#000"/><rect x="1" y="10" width="5" height="1" fill="#fff"/><rect x="6" y="10" width="3" height="1" fill="#ffff00"/><rect x="9" y="10" width="2" height="1" fill="#fff"/><rect x="11" y="10" width="3" height="1" fill="#000"/><rect x="15" y="10" width="1" height="1" fill="#000"/><rect x="0" y="11" width="12" height="1" fill="#000"/><rect x="13" y="11" width="2" height="1" fill="#000"/><rect x="1" y="12" width="1" height="1" fill="#000"/><rect x="2" y="12" width="10" height="1" fill="#fff"/><rect x="12" y="12" width="2" height="1" fill="#000"/><rect x="1" y="13" width="12" height="1" fill="#000"/></svg>
<svg class="px" style="left:117px;top:58px" width="16" height="15" viewBox="0 0 16 15" shape-rendering="crispEdges"><rect x="0" y="0" width="8" height="1" fill="#000"/><rect x="0" y="1" width="1" height="1" fill="#000"/><rect x="1" y="1" width="6" height="1" fill="#fff"/><rect x="7" y="1" width="2" height="1" fill="#000"/><rect x="0" y="2" width="1" height="1" fill="#000"/><rect x="1" y="2" width="6" height="1" fill="#fff"/><rect x="7" y="2" width="1" height="1" fill="#000"/><rect x="8" y="2" width="1" height="1" fill="#fff"/><rect x="9" y="2" width="1" height="1" fill="#000"/><rect x="0" y="3" width="1" height="1" fill="#000"/><rect x="1" y="3" width="6" height="1" fill="#fff"/><rect x="7" y="3" width="4" height="1" fill="#000"/><rect x="0" y="4" width="1" height="1" fill="#000"/><rect x="1" y="4" width="9" height="1" fill="#fff"/><rect x="10" y="4" width="1" height="1" fill="#000"/><rect x="0" y="5" width="1" height="1" fill="#000"/><rect x="1" y="5" width="6" height="1" fill="#fff"/><rect x="7" y="5" width="4" height="1" fill="#000"/><rect x="0" y="6" width="1" height="1" fill="#000"/><rect x="1" y="6" width="5" height="1" fill="#fff"/><rect x="6" y="6" width="1" height="1" fill="#000"/><rect x="7" y="6" width="1" height="1" fill="#00ffff"/><rect x="8" y="6" width="1" height="1" fill="#fff"/><rect x="9" y="6" width="2" height="1" fill="#f0f0f0"/><rect x="11" y="6" width="1" height="1" fill="#000"/><rect x="0" y="7" width="1" height="1" fill="#000"/><rect x="1" y="7" width="4" height="1" fill="#fff"/><rect x="5" y="7" width="1" height="1" fill="#000"/><rect x="6" y="7" width="2" height="1" fill="#00ffff"/><rect x="8" y="7" width="1" height="1" fill="#fff"/><rect x="9" y="7" width="3" height="1" fill="#f0f0f0"/><rect x="12" y="7" width="1" height="1" fill="#000"/><rect x="0" y="8" width="1" height="1" fill="#000"/><rect x="1" y="8" width="4" height="1" fill="#fff"/><rect x="5" y="8" width="1" height="1" fill="#000"/><rect x="6" y="8" width="3" height="1" fill="#fff"/><rect x="9" y="8" width="3" height="1" fill="#f0f0f0"/><rect x="12" y="8" width="1" height="1" fill="#000"/><rect x="0" y="9" width="1" height="1" fill="#000"/><rect x="1" y="9" width="4" height="1" fill="#fff"/><rect x="5" y="9" width="1" height="1" fill="#000"/><rect x="6" y="9" width="2" height="1" fill="#fff"/><rect x="8" y="9" width="1" height="1" fill="#00ffff"/><rect x="9" y="9" width="3" height="1" fill="#f0f0f0"/><rect x="12" y="9" width="1" height="1" fill="#000"/><rect x="0" y="10" width="1" height="1" fill="#000"/><rect x="1" y="10" width="5" height="1" fill="#fff"/><rect x="6" y="10" width="1" height="1" fill="#000"/><rect x="7" y="10" width="1" height="1" fill="#f0f0f0"/><rect x="8" y="10" width="1" height="1" fill="#00ffff"/><rect x="9" y="10" width="2" height="1" fill="#f0f0f0"/><rect x="11" y="10" width="1" height="1" fill="#000"/><rect x="0" y="11" width="1" height="1" fill="#000"/><rect x="1" y="11" width="6" height="1" fill="#fff"/><rect x="7" y="11" width="4" height="1" fill="#000"/><rect x="12" y="11" width="1" height="1" fill="#000"/><rect x="0" y="12" width="1" height="1" fill="#000"/><rect x="1" y="12" width="9" height="1" fill="#fff"/><rect x="10" y="12" width="1" height="1" fill="#000"/><rect x="12" y="12" width="3" height="1" fill="#000"/><rect x="0" y="13" width="1" height="1" fill="#000"/><rect x="1" y="13" width="9" height="1" fill="#fff"/><rect x="10" y="13" width="1" height="1" fill="#000"/><rect x="13" y="13" width="3" height="1" fill="#000"/><rect x="0" y="14" width="11" height="1" fill="#000"/><rect x="14" y="14" width="2" height="1" fill="#000"/></svg>
<svg class="px" style="left:140px;top:58px" width="15" height="15" viewBox="0 0 15 15" shape-rendering="crispEdges"><rect x="7" y="0" width="1" height="1" fill="#a0a0a0"/><rect x="6" y="1" width="3" height="1" fill="#a0a0a0"/><rect x="5" y="2" width="5" height="1" fill="#a0a0a0"/><rect x="7" y="3" width="1" height="1" fill="#a0a0a0"/><rect x="7" y="4" width="1" height="1" fill="#a0a0a0"/><rect x="2" y="5" width="1" height="1" fill="#a0a0a0"/><rect x="7" y="5" width="1" height="1" fill="#a0a0a0"/><rect x="12" y="5" width="1" height="1" fill="#a0a0a0"/><rect x="1" y="6" width="2" height="1" fill="#a0a0a0"/><rect x="7" y="6" width="1" height="1" fill="#a0a0a0"/><rect x="12" y="6" width="2" height="1" fill="#a0a0a0"/><rect x="0" y="7" width="15" height="1" fill="#a0a0a0"/><rect x="1" y="8" width="2" height="1" fill="#a0a0a0"/><rect x="7" y="8" width="1" height="1" fill="#a0a0a0"/><rect x="12" y="8" width="2" height="1" fill="#a0a0a0"/><rect x="2" y="9" width="1" height="1" fill="#a0a0a0"/><rect x="7" y="9" width="1" height="1" fill="#a0a0a0"/><rect x="12" y="9" width="1" height="1" fill="#a0a0a0"/><rect x="7" y="10" width="1" height="1" fill="#a0a0a0"/><rect x="7" y="11" width="1" height="1" fill="#a0a0a0"/><rect x="5" y="12" width="5" height="1" fill="#a0a0a0"/><rect x="6" y="13" width="3" height="1" fill="#a0a0a0"/><rect x="7" y="14" width="1" height="1" fill="#a0a0a0"/></svg>
<svg class="px" style="left:166px;top:58px" width="10" height="14" viewBox="0 0 10 14" shape-rendering="crispEdges"><rect x="2" y="0" width="6" height="1" fill="#000"/><rect x="1" y="1" width="1" height="1" fill="#000"/><rect x="2" y="1" width="6" height="1" fill="#ffff00"/><rect x="8" y="1" width="1" height="1" fill="#000"/><rect x="0" y="2" width="1" height="1" fill="#000"/><rect x="1" y="2" width="2" height="1" fill="#ffff00"/><rect x="3" y="2" width="4" height="1" fill="#000"/><rect x="7" y="2" width="2" height="1" fill="#ffff00"/><rect x="9" y="2" width="1" height="1" fill="#000"/><rect x="0" y="3" width="1" height="1" fill="#000"/><rect x="1" y="3" width="2" height="1" fill="#ffff00"/><rect x="3" y="3" width="1" height="1" fill="#000"/><rect x="6" y="3" width="1" height="1" fill="#000"/><rect x="7" y="3" width="2" height="1" fill="#ffff00"/><rect x="9" y="3" width="1" height="1" fill="#000"/><rect x="1" y="4" width="2" height="1" fill="#000"/><rect x="5" y="4" width="1" height="1" fill="#000"/><rect x="6" y="4" width="2" height="1" fill="#ffff00"/><rect x="8" y="4" width="1" height="1" fill="#000"/><rect x="4" y="5" width="1" height="1" fill="#000"/><rect x="5" y="5" width="2" height="1" fill="#ffff00"/><rect x="7" y="5" width="1" height="1" fill="#000"/><rect x="3" y="6" width="1" height="1" fill="#000"/><rect x="4" y="6" width="2" height="1" fill="#ffff00"/><rect x="6" y="6" width="1" height="1" fill="#000"/><rect x="3" y="7" width="1" height="1" fill="#000"/><rect x="4" y="7" width="2" height="1" fill="#ffff00"/><rect x="6" y="7" width="1" height="1" fill="#000"/><rect x="3" y="8" width="1" height="1" fill="#000"/><rect x="4" y="8" width="2" height="1" fill="#ffff00"/><rect x="6" y="8" width="1" height="1" fill="#000"/><rect x="4" y="9" width="2" height="1" fill="#000"/><rect x="3" y="10" width="4" height="1" fill="#000"/><rect x="2" y="11" width="1" height="1" fill="#000"/><rect x="3" y="11" width="3" height="1" fill="#ffff00"/><rect x="6" y="11" width="1" height="1" fill="#000"/><rect x="2" y="12" width="1" height="1" fill="#000"/><rect x="3" y="12" width="3" height="1" fill="#ffff00"/><rect x="6" y="12" width="1" height="1" fill="#000"/><rect x="3" y="13" width="3" height="1" fill="#000"/></svg>
<svg class="px" style="left:187px;top:58px" width="16" height="14" viewBox="0 0 16 14" shape-rendering="crispEdges"><rect x="0" y="0" width="1" height="1" fill="#000"/><rect x="7" y="0" width="6" height="1" fill="#000080"/><rect x="0" y="1" width="2" height="1" fill="#000"/><rect x="6" y="1" width="3" height="1" fill="#000080"/><rect x="11" y="1" width="3" height="1" fill="#000080"/><rect x="0" y="2" width="3" height="1" fill="#000"/><rect x="6" y="2" width="3" height="1" fill="#000080"/><rect x="11" y="2" width="3" height="1" fill="#000080"/><rect x="0" y="3" width="4" height="1" fill="#000"/><rect x="11" y="3" width="3" height="1" fill="#000080"/><rect x="0" y="4" width="5" height="1" fill="#000"/><rect x="10" y="4" width="3" height="1" fill="#000080"/><rect x="0" y="5" width="6" height="1" fill="#000"/><rect x="9" y="5" width="3" height="1" fill="#000080"/><rect x="0" y="6" width="7" height="1" fill="#000"/><rect x="9" y="6" width="3" height="1" fill="#000080"/><rect x="0" y="7" width="8" height="1" fill="#000"/><rect x="9" y="7" width="3" height="1" fill="#000080"/><rect x="0" y="8" width="5" height="1" fill="#000"/><rect x="0" y="9" width="2" height="1" fill="#000"/><rect x="3" y="9" width="2" height="1" fill="#000"/><rect x="9" y="9" width="3" height="1" fill="#000080"/><rect x="0" y="10" width="1" height="1" fill="#000"/><rect x="3" y="10" width="3" height="1" fill="#000"/><rect x="9" y="10" width="3" height="1" fill="#000080"/><rect x="4" y="11" width="2" height="1" fill="#000"/><rect x="4" y="12" width="3" height="1" fill="#000"/><rect x="5" y="13" width="2" height="1" fill="#000"/></svg>
<div class="form"></div>
<span class="t" style="left:21.13px;transform-origin:0 0;top:91.00px;font-size:12px;line-height:16px;transform:scaleX(0.905);"><u>D</u>rive:</span>
<span class="t" style="left:21.79px;transform-origin:0 0;top:117.00px;font-size:12px;line-height:16px;transform:scaleX(0.868);">Transfer Si<u>z</u>e:</span>
<span class="t" style="left:21.78px;transform-origin:0 0;top:143.00px;font-size:12px;line-height:16px;transform:scaleX(0.912);">Total <u>L</u>ength:</span>
<div style="position:absolute;left:97px;top:89px;width:77px;height:21px;background:#fff;box-shadow:inset 1px 1px 0 #a0a0a0,inset -1px -1px 0 #fff,inset 2px 2px 0 #696969,inset -2px -2px 0 #e3e3e3;"></div><div style="position:absolute;left:155px;top:91px;width:17px;height:17px;background:#f0f0f0;box-shadow:inset 1px 1px 0 #e3e3e3,inset -1px -1px 0 #696969,inset 2px 2px 0 #fff,inset -2px -2px 0 #a0a0a0;"></div><svg class="px" style="left:160px;top:98px" width="7" height="4" viewBox="0 0 7 4" shape-rendering="crispEdges"><path d="M0 0h7v1h-1v1h-1v1h-1v1h-1v-1h-1v-1h-1v-1h-1z" fill="#000"/></svg>
<div style="position:absolute;left:97px;top:115px;width:77px;height:21px;background:#fff;box-shadow:inset 1px 1px 0 #a0a0a0,inset -1px -1px 0 #fff,inset 2px 2px 0 #696969,inset -2px -2px 0 #e3e3e3;"></div><div style="position:absolute;left:155px;top:117px;width:17px;height:17px;background:#f0f0f0;box-shadow:inset 1px 1px 0 #e3e3e3,inset -1px -1px 0 #696969,inset 2px 2px 0 #fff,inset -2px -2px 0 #a0a0a0;"></div><svg class="px" style="left:160px;top:124px" width="7" height="4" viewBox="0 0 7 4" shape-rendering="crispEdges"><path d="M0 0h7v1h-1v1h-1v1h-1v1h-1v-1h-1v-1h-1v-1h-1z" fill="#000"/></svg>
<div style="position:absolute;left:97px;top:141px;width:77px;height:21px;background:#fff;box-shadow:inset 1px 1px 0 #a0a0a0,inset -1px -1px 0 #fff,inset 2px 2px 0 #696969,inset -2px -2px 0 #e3e3e3;"></div><div style="position:absolute;left:155px;top:143px;width:17px;height:17px;background:#f0f0f0;box-shadow:inset 1px 1px 0 #e3e3e3,inset -1px -1px 0 #696969,inset 2px 2px 0 #fff,inset -2px -2px 0 #a0a0a0;"></div><svg class="px" style="left:160px;top:150px" width="7" height="4" viewBox="0 0 7 4" shape-rendering="crispEdges"><path d="M0 0h7v1h-1v1h-1v1h-1v1h-1v-1h-1v-1h-1v-1h-1z" fill="#000"/></svg>
<span class="t" style="left:101.03px;transform-origin:0 0;top:92.00px;font-size:12px;line-height:16px;transform:scaleX(0.915);">[-d-]</span>
<span class="t" style="left:118.93px;transform-origin:0 0;top:118.00px;font-size:12px;line-height:16px;transform:scaleX(0.974);">0.5</span>
<span class="t" style="left:100.96px;transform-origin:0 0;top:144.00px;font-size:12px;line-height:16px;transform:scaleX(0.901);">256 MB</span>
<span class="t" style="left:178.28px;transform-origin:0 0;top:117.00px;font-size:12px;line-height:16px;transform:scaleX(0.920);"><u>t</u>o</span>
<div style="position:absolute;left:193px;top:115px;width:77px;height:21px;background:#fff;box-shadow:inset 1px 1px 0 #a0a0a0,inset -1px -1px 0 #fff,inset 2px 2px 0 #696969,inset -2px -2px 0 #e3e3e3;"></div><div style="position:absolute;left:251px;top:117px;width:17px;height:17px;background:#f0f0f0;box-shadow:inset 1px 1px 0 #e3e3e3,inset -1px -1px 0 #696969,inset 2px 2px 0 #fff,inset -2px -2px 0 #a0a0a0;"></div><svg class="px" style="left:256px;top:124px" width="7" height="4" viewBox="0 0 7 4" shape-rendering="crispEdges"><path d="M0 0h7v1h-1v1h-1v1h-1v1h-1v-1h-1v-1h-1v-1h-1z" fill="#000"/></svg>
<span class="t" style="left:197.16px;transform-origin:0 0;top:118.00px;font-size:12px;line-height:16px;transform:scaleX(0.920);">8192.0</span>
<span class="t" style="left:276.67px;transform-origin:0 0;top:117.00px;font-size:12px;line-height:16px;transform:scaleX(0.868);">KB</span>
<div style="position:absolute;left:193px;top:90px;width:13px;height:13px;background:#fff;box-shadow:inset 1px 1px 0 #a0a0a0,inset -1px -1px 0 #fff,inset 2px 2px 0 #696969,inset -2px -2px 0 #e3e3e3;"></div>
<span class="t" style="left:210.82px;transform-origin:0 0;top:89.00px;font-size:12px;line-height:16px;transform:scaleX(0.912);">Force Write <u>A</u>ccess</span>
<div style="position:absolute;left:339px;top:90px;width:13px;height:13px;background:#fff;box-shadow:inset 1px 1px 0 #a0a0a0,inset -1px -1px 0 #fff,inset 2px 2px 0 #696969,inset -2px -2px 0 #e3e3e3;"></div><svg class="px" style="left:342px;top:93px" width="7" height="7" viewBox="0 0 7 7" shape-rendering="crispEdges"><path d="M0 2h1v1h1v1h1v-1h1v-1h1v-1h1v-1h1v3h-1v1h-1v1h-1v1h-1v1h-1v-1h-1v-1h-1z" fill="#000"/></svg>
<span class="t" style="left:356.61px;transform-origin:0 0;top:89.00px;font-size:12px;line-height:16px;transform:scaleX(0.927);">Di<u>r</u>ect I/O</span>
<div style="position:absolute;left:334px;top:106px;width:127px;height:58px;border:1px solid #a0a0a0;box-shadow:1px 1px 0 #fff,inset 1px 1px 0 #fff;box-sizing:border-box;"></div>
<svg class="px" style="left:340px;top:112px" width="12" height="12" viewBox="0 0 12 12"><circle cx="6" cy="6" r="5.5" fill="#fff"/><path d="M1.8 10.2A5.5 5.5 0 0 1 10.2 1.8" fill="none" stroke="#a0a0a0" stroke-width="1"/><path d="M2.5 9.5A4.5 4.5 0 0 1 9.5 2.5" fill="none" stroke="#696969" stroke-width="1"/><path d="M10.2 1.8A5.5 5.5 0 0 1 1.8 10.2" fill="none" stroke="#fff" stroke-width="1"/><path d="M9.5 2.5A4.5 4.5 0 0 1 2.5 9.5" fill="none" stroke="#e3e3e3" stroke-width="1"/></svg>
<svg class="px" style="left:340px;top:129px" width="12" height="12" viewBox="0 0 12 12"><circle cx="6" cy="6" r="5.5" fill="#fff"/><path d="M1.8 10.2A5.5 5.5 0 0 1 10.2 1.8" fill="none" stroke="#a0a0a0" stroke-width="1"/><path d="M2.5 9.5A4.5 4.5 0 0 1 9.5 2.5" fill="none" stroke="#696969" stroke-width="1"/><path d="M10.2 1.8A5.5 5.5 0 0 1 1.8 10.2" fill="none" stroke="#fff" stroke-width="1"/><path d="M9.5 2.5A4.5 4.5 0 0 1 2.5 9.5" fill="none" stroke="#e3e3e3" stroke-width="1"/><circle cx="6" cy="6" r="2" fill="#000"/></svg>
<svg class="px" style="left:340px;top:146px" width="12" height="12" viewBox="0 0 12 12"><circle cx="6" cy="6" r="5.5" fill="#fff"/><path d="M1.8 10.2A5.5 5.5 0 0 1 10.2 1.8" fill="none" stroke="#a0a0a0" stroke-width="1"/><path d="M2.5 9.5A4.5 4.5 0 0 1 9.5 2.5" fill="none" stroke="#696969" stroke-width="1"/><path d="M10.2 1.8A5.5 5.5 0 0 1 1.8 10.2" fill="none" stroke="#fff" stroke-width="1"/><path d="M9.5 2.5A4.5 4.5 0 0 1 2.5 9.5" fill="none" stroke="#e3e3e3" stroke-width="1"/></svg>
<span class="t" style="left:356.53px;transform-origin:0 0;top:111.00px;font-size:12px;line-height:16px;transform:scaleX(0.894);">I/O <u>C</u>omparison</span>
<span class="t" style="left:356.96px;transform-origin:0 0;top:128.00px;font-size:12px;line-height:16px;transform:scaleX(0.904);"><u>O</u>verlapped I/O</span>
<span class="t" style="left:356.64px;transform-origin:0 0;top:145.00px;font-size:12px;line-height:16px;transform:scaleX(0.892);"><u>N</u>either</span>
<span class="t" style="left:338.45px;transform-origin:0 0;top:169.00px;font-size:12px;line-height:16px;transform:scaleX(0.911);"><u>Q</u>ueue Depth:</span>
<div style="position:absolute;left:415px;top:167px;width:46px;height:21px;background:#fff;box-shadow:inset 1px 1px 0 #a0a0a0,inset -1px -1px 0 #fff,inset 2px 2px 0 #696969,inset -2px -2px 0 #e3e3e3;"></div><div style="position:absolute;left:442px;top:169px;width:17px;height:17px;background:#f0f0f0;box-shadow:inset 1px 1px 0 #e3e3e3,inset -1px -1px 0 #696969,inset 2px 2px 0 #fff,inset -2px -2px 0 #a0a0a0;"></div><svg class="px" style="left:447px;top:176px" width="7" height="4" viewBox="0 0 7 4" shape-rendering="crispEdges"><path d="M0 0h7v1h-1v1h-1v1h-1v1h-1v-1h-1v-1h-1v-1h-1z" fill="#000"/></svg>
<span class="t" style="left:419.27px;transform-origin:0 0;top:170.00px;font-size:12px;line-height:16px;transform:scaleX(0.948);">4</span>
<span class="t" style="left:21.48px;transform-origin:0 0;top:192.00px;font-size:12px;line-height:16px;transform:scaleX(0.860);">Controlled <u>b</u>y:</span>
<div style="position:absolute;left:21px;top:207px;width:212px;height:21px;background:#fff;box-shadow:inset 1px 1px 0 #a0a0a0,inset -1px -1px 0 #fff,inset 2px 2px 0 #696969,inset -2px -2px 0 #e3e3e3;"></div><div style="position:absolute;left:214px;top:209px;width:17px;height:17px;background:#f0f0f0;box-shadow:inset 1px 1px 0 #e3e3e3,inset -1px -1px 0 #696969,inset 2px 2px 0 #fff,inset -2px -2px 0 #a0a0a0;"></div><svg class="px" style="left:219px;top:216px" width="7" height="4" viewBox="0 0 7 4" shape-rendering="crispEdges"><path d="M0 0h7v1h-1v1h-1v1h-1v1h-1v-1h-1v-1h-1v-1h-1z" fill="#000"/></svg>
<div style="position:absolute;left:393px;top:207px;width:69px;height:20px;background:#f0f0f0;box-shadow:inset 0 0 0 1px #6a6a6a,inset 2px 2px 0 #fff,inset -2px -2px 0 #696969,inset 3px 3px 0 #e8e8e8,inset -3px -3px 0 #a0a0a0;"></div>
<div style="position:absolute;left:397px;top:211px;width:61px;height:12px;border:1px dotted #000;box-sizing:border-box;"></div>
<span class="t" style="left:416.07px;transform-origin:0 0;top:209.00px;font-size:12px;line-height:16px;transform:scaleX(0.886);"><u>S</u>tart</span>
<div style="position:absolute;left:21px;top:233px;width:440px;height:45px;background:#fff;box-shadow:inset 1px 1px 0 #a0a0a0,inset -1px -1px 0 #fff,inset 2px 2px 0 #696969,inset -2px -2px 0 #e3e3e3;"></div>
<div style="position:absolute;left:444px;top:235px;width:15px;height:41px;background:#f1f1f1;box-shadow:inset 1px 0 0 #e9e9e9;"></div>
<svg class="px" style="left:449px;top:242px" width="7" height="4" viewBox="0 0 7 4" shape-rendering="crispEdges"><path d="M3 0h1v1h1v1h1v1h1v1h-7v-1h1v-1h1v-1h1z" fill="#a0a0a0"/></svg>
<svg class="px" style="left:449px;top:267px" width="7" height="4" viewBox="0 0 7 4" shape-rendering="crispEdges"><path d="M0 0h7v1h-1v1h-1v1h-1v1h-1v-1h-1v-1h-1v-1h-1z" fill="#a0a0a0"/></svg>
<span class="t ds" style="left:27.01px;transform-origin:0 0;top:241.00px;font-size:13.6px;line-height:17px;transform:scaleX(1.009);">Corsair Force GS 180GB</span>
<span class="t ds" style="left:26.82px;transform-origin:0 0;top:260.00px;font-size:13.6px;line-height:17px;transform:scaleX(1.084);">Kjørte timer: 5038 - Total write: 520GB</span>
<div style="position:absolute;left:21px;top:288px;width:440px;height:286px;border:1px solid #a0a0a0;box-shadow:1px 1px 0 #fff,inset 1px 1px 0 #fff;box-sizing:border-box;"></div>
<div style="position:absolute;left:209px;top:286px;width:64px;height:6px;background:#f0f0f0;"></div>
<span class="t" style="left:211.48px;transform-origin:0 0;top:281.00px;font-size:12px;line-height:16px;transform:scaleX(0.904);">Test Results</span>
<span class="t" style="left:156.89px;transform-origin:0 0;top:297.00px;font-size:12px;line-height:16px;transform:scaleX(0.937);">Write</span>
<div style="position:absolute;left:190px;top:302px;width:25px;height:5px;background:#f00;"></div>
<span class="t" style="left:239.67px;transform-origin:0 0;top:297.00px;font-size:12px;line-height:16px;transform:scaleX(0.967);">Read</span>
<div style="position:absolute;left:273px;top:302px;width:25px;height:5px;background:#008000;"></div>
<span class="t" style="left:368.89px;transform-origin:0 0;top:297.00px;font-size:12px;line-height:16px;transform:scaleX(0.929);">Write</span>
<span class="t" style="left:416.58px;transform-origin:0 0;top:297.00px;font-size:12px;line-height:16px;transform:scaleX(0.960);">Read</span>
<div class="chart">
<i class="g" style="left:29px"></i>
<i class="g" style="left:59px"></i>
<i class="g" style="left:89px"></i>
<i class="g" style="left:119px"></i>
<i class="g" style="left:149px"></i>
<i class="g" style="left:179px"></i>
<i class="g" style="left:209px"></i>
<i class="g" style="left:239px"></i>
<i class="g" style="left:269px"></i>
<i class="r" style="top:4px;width:3.2px"></i><i class="n" style="top:9px;width:4.2px"></i>
<i class="r" style="top:18px;width:8.1px"></i><i class="n" style="top:23px;width:10.3px"></i>
<i class="r" style="top:33px;width:15.9px"></i><i class="n" style="top:38px;width:21.7px"></i>
<i class="r" style="top:47px;width:58.7px"></i><i class="n" style="top:52px;width:43.1px"></i>
<i class="r" style="top:62px;width:90.6px"></i><i class="n" style="top:67px;width:64.4px"></i>
<i class="r" style="top:76px;width:120.6px"></i><i class="n" style="top:81px;width:87.7px"></i>
<i class="r" style="top:91px;width:132.5px"></i><i class="n" style="top:96px;width:115.3px"></i>
<i class="r" style="top:106px;width:108.8px"></i><i class="n" style="top:111px;width:132.8px"></i>
<i class="r" style="top:120px;width:146.0px"></i><i class="n" style="top:125px;width:139.8px"></i>
<i class="r" style="top:135px;width:147.3px"></i><i class="n" style="top:140px;width:151.2px"></i>
<i class="r" style="top:149px;width:149.8px"></i><i class="n" style="top:154px;width:151.6px"></i>
<i class="r" style="top:164px;width:150.2px"></i><i class="n" style="top:169px;width:159.7px"></i>
<i class="r" style="top:178px;width:150.9px"></i><i class="n" style="top:183px;width:161.1px"></i>
<i class="r" style="top:193px;width:149.5px"></i><i class="n" style="top:198px;width:160.7px"></i>
<i class="r" style="top:208px;width:149.8px"></i><i class="n" style="top:213px;width:160.7px"></i>
</div>
<span class="t" style="left:40.16px;transform-origin:100% 0;top:317.00px;font-size:12px;line-height:16px;transform:scaleX(0.893);">0.5</span>
<span class="t" style="left:371.58px;transform-origin:100% 0;top:317.00px;font-size:12px;line-height:16px;transform:scaleX(0.893);">15321</span>
<span class="t" style="left:419.38px;transform-origin:100% 0;top:317.00px;font-size:12px;line-height:16px;transform:scaleX(0.893);">18537</span>
<span class="t" style="left:40.05px;transform-origin:100% 0;top:331.00px;font-size:12px;line-height:16px;transform:scaleX(0.893);">1.0</span>
<span class="t" style="left:371.36px;transform-origin:100% 0;top:331.00px;font-size:12px;line-height:16px;transform:scaleX(0.893);">31664</span>
<span class="t" style="left:419.27px;transform-origin:100% 0;top:331.00px;font-size:12px;line-height:16px;transform:scaleX(0.893);">39070</span>
<span class="t" style="left:40.05px;transform-origin:100% 0;top:346.00px;font-size:12px;line-height:16px;transform:scaleX(0.893);">2.0</span>
<span class="t" style="left:372.42px;transform-origin:100% 0;top:346.00px;font-size:12px;line-height:16px;transform:scaleX(0.893);">57711</span>
<span class="t" style="left:419.38px;transform-origin:100% 0;top:346.00px;font-size:12px;line-height:16px;transform:scaleX(0.893);">76836</span>
<span class="t" style="left:40.05px;transform-origin:100% 0;top:360.00px;font-size:12px;line-height:16px;transform:scaleX(0.893);">4.0</span>
<span class="t" style="left:364.86px;transform-origin:100% 0;top:360.00px;font-size:12px;line-height:16px;transform:scaleX(0.893);">200277</span>
<span class="t" style="left:412.66px;transform-origin:100% 0;top:360.00px;font-size:12px;line-height:16px;transform:scaleX(0.893);">148183</span>
<span class="t" style="left:40.05px;transform-origin:100% 0;top:375.00px;font-size:12px;line-height:16px;transform:scaleX(0.893);">8.0</span>
<span class="t" style="left:364.86px;transform-origin:100% 0;top:375.00px;font-size:12px;line-height:16px;transform:scaleX(0.893);">306581</span>
<span class="t" style="left:412.55px;transform-origin:100% 0;top:375.00px;font-size:12px;line-height:16px;transform:scaleX(0.893);">219210</span>
<span class="t" style="left:33.33px;transform-origin:100% 0;top:389.00px;font-size:12px;line-height:16px;transform:scaleX(0.893);">16.0</span>
<span class="t" style="left:364.86px;transform-origin:100% 0;top:389.00px;font-size:12px;line-height:16px;transform:scaleX(0.893);">406749</span>
<span class="t" style="left:412.66px;transform-origin:100% 0;top:389.00px;font-size:12px;line-height:16px;transform:scaleX(0.893);">297107</span>
<span class="t" style="left:33.33px;transform-origin:100% 0;top:404.00px;font-size:12px;line-height:16px;transform:scaleX(0.893);">32.0</span>
<span class="t" style="left:364.86px;transform-origin:100% 0;top:404.00px;font-size:12px;line-height:16px;transform:scaleX(0.893);">446227</span>
<span class="t" style="left:412.66px;transform-origin:100% 0;top:404.00px;font-size:12px;line-height:16px;transform:scaleX(0.893);">388998</span>
<span class="t" style="left:33.33px;transform-origin:100% 0;top:419.00px;font-size:12px;line-height:16px;transform:scaleX(0.893);">64.0</span>
<span class="t" style="left:364.86px;transform-origin:100% 0;top:419.00px;font-size:12px;line-height:16px;transform:scaleX(0.893);">367393</span>
<span class="t" style="left:412.66px;transform-origin:100% 0;top:419.00px;font-size:12px;line-height:16px;transform:scaleX(0.893);">447331</span>
<span class="t" style="left:26.62px;transform-origin:100% 0;top:433.00px;font-size:12px;line-height:16px;transform:scaleX(0.893);">128.0</span>
<span class="t" style="left:364.86px;transform-origin:100% 0;top:433.00px;font-size:12px;line-height:16px;transform:scaleX(0.893);">491471</span>
<span class="t" style="left:412.45px;transform-origin:100% 0;top:433.00px;font-size:12px;line-height:16px;transform:scaleX(0.893);">470754</span>
<span class="t" style="left:26.62px;transform-origin:100% 0;top:448.00px;font-size:12px;line-height:16px;transform:scaleX(0.893);">256.0</span>
<span class="t" style="left:364.86px;transform-origin:100% 0;top:448.00px;font-size:12px;line-height:16px;transform:scaleX(0.893);">495646</span>
<span class="t" style="left:412.66px;transform-origin:100% 0;top:448.00px;font-size:12px;line-height:16px;transform:scaleX(0.893);">508596</span>
<span class="t" style="left:26.62px;transform-origin:100% 0;top:462.00px;font-size:12px;line-height:16px;transform:scaleX(0.893);">512.0</span>
<span class="t" style="left:364.65px;transform-origin:100% 0;top:462.00px;font-size:12px;line-height:16px;transform:scaleX(0.893);">504104</span>
<span class="t" style="left:412.66px;transform-origin:100% 0;top:462.00px;font-size:12px;line-height:16px;transform:scaleX(0.893);">510091</span>
<span class="t" style="left:20.01px;transform-origin:100% 0;top:477.00px;font-size:12px;line-height:16px;transform:scaleX(0.893);">1024.0</span>
<span class="t" style="left:364.75px;transform-origin:100% 0;top:477.00px;font-size:12px;line-height:16px;transform:scaleX(0.893);">505290</span>
<span class="t" style="left:412.55px;transform-origin:100% 0;top:477.00px;font-size:12px;line-height:16px;transform:scaleX(0.893);">536870</span>
<span class="t" style="left:20.01px;transform-origin:100% 0;top:491.00px;font-size:12px;line-height:16px;transform:scaleX(0.893);">2048.0</span>
<span class="t" style="left:364.86px;transform-origin:100% 0;top:491.00px;font-size:12px;line-height:16px;transform:scaleX(0.893);">507679</span>
<span class="t" style="left:412.66px;transform-origin:100% 0;top:491.00px;font-size:12px;line-height:16px;transform:scaleX(0.893);">541685</span>
<span class="t" style="left:20.01px;transform-origin:100% 0;top:506.00px;font-size:12px;line-height:16px;transform:scaleX(0.893);">4096.0</span>
<span class="t" style="left:364.86px;transform-origin:100% 0;top:506.00px;font-size:12px;line-height:16px;transform:scaleX(0.893);">502923</span>
<span class="t" style="left:412.45px;transform-origin:100% 0;top:506.00px;font-size:12px;line-height:16px;transform:scaleX(0.893);">540474</span>
<span class="t" style="left:20.01px;transform-origin:100% 0;top:521.00px;font-size:12px;line-height:16px;transform:scaleX(0.893);">8192.0</span>
<span class="t" style="left:364.65px;transform-origin:100% 0;top:521.00px;font-size:12px;line-height:16px;transform:scaleX(0.893);">504104</span>
<span class="t" style="left:412.45px;transform-origin:100% 0;top:521.00px;font-size:12px;line-height:16px;transform:scaleX(0.893);">540474</span>
<span class="t" style="left:56.34px;transform-origin:50% 0;top:544.00px;font-size:12px;line-height:16px;transform:scaleX(0.893);">0</span>
<span class="t" style="left:79.47px;transform-origin:50% 0;top:544.00px;font-size:12px;line-height:16px;transform:scaleX(0.893);">100</span>
<span class="t" style="left:109.63px;transform-origin:50% 0;top:544.00px;font-size:12px;line-height:16px;transform:scaleX(0.893);">200</span>
<span class="t" style="left:139.68px;transform-origin:50% 0;top:544.00px;font-size:12px;line-height:16px;transform:scaleX(0.893);">300</span>
<span class="t" style="left:169.79px;transform-origin:50% 0;top:544.00px;font-size:12px;line-height:16px;transform:scaleX(0.893);">400</span>
<span class="t" style="left:199.68px;transform-origin:50% 0;top:544.00px;font-size:12px;line-height:16px;transform:scaleX(0.893);">500</span>
<span class="t" style="left:229.63px;transform-origin:50% 0;top:544.00px;font-size:12px;line-height:16px;transform:scaleX(0.893);">600</span>
<span class="t" style="left:259.63px;transform-origin:50% 0;top:544.00px;font-size:12px;line-height:16px;transform:scaleX(0.893);">700</span>
<span class="t" style="left:289.68px;transform-origin:50% 0;top:544.00px;font-size:12px;line-height:16px;transform:scaleX(0.893);">800</span>
<span class="t" style="left:319.63px;transform-origin:50% 0;top:544.00px;font-size:12px;line-height:16px;transform:scaleX(0.893);">900</span>
<span class="t" style="left:346.11px;transform-origin:50% 0;top:544.00px;font-size:12px;line-height:16px;transform:scaleX(0.893);">1000</span>
<span class="t" style="left:144.68px;transform-origin:0 0;top:557.00px;font-size:12px;line-height:16px;transform:scaleX(0.907);">Transfer Rate - MB / Sec</span>
<div class="status"></div>
<span class="t ns" style="left:9.50px;transform-origin:0 0;top:591.00px;font-size:12px;line-height:16px;transform:scaleX(0.940);">For Help, press F1</span>
<svg class="px" style="left:461px;top:594px" width="13" height="13" viewBox="0 0 13 13"><path d="M13 1.5L1.5 13M13 5.5L5.5 13M13 9.5L9.5 13" stroke="#fff" stroke-width="1.2"/><path d="M12.5 1L1 12.5M12.5 5L5 12.5M12.5 9L9 12.5" stroke="#a4a4a4" stroke-width="1.7"/></svg>
</div>
<div class="win" style="left:965px;top:26px">
<div class="glassT"></div><div class="glassT2"></div><div class="glassL"></div><div class="glassR"></div>
<div class="glow"></div>
<div class="edgeO"></div><div class="edgeI"></div>
<svg class="px" style="left:8px;top:7px" width="16" height="16" viewBox="0 0 16 16"><rect width="16" height="16" fill="#fff"/><ellipse cx="5.6" cy="8" rx="4.2" ry="7.6" transform="rotate(22 5.6 8)" fill="none" stroke="#f00" stroke-width="1.1"/><rect x="4.5" y="5.5" width="11" height="5" fill="#a3968a" stroke="#e8202c" stroke-width="1"/><path d="M6.5 9.5l1-3l1 3M9 6.5h2M10 6.5v3M11.5 6.5h2M12.5 6.5v3" stroke="#e8e0d8" stroke-width=".7" fill="none"/><rect x="13.6" y="6.6" width="1.2" height="2.8" fill="none" stroke="#e8e0d8" stroke-width=".5"/></svg>
<span class="t ds" style="left:28.53px;transform-origin:0 0;top:7.00px;font-size:12px;line-height:16px;transform:scaleX(1.007);">Untitled - ATTO Disk Benchmark</span>
<div class="capwrap"></div>
<div class="cap cmin"></div><div class="cap cmax"></div><div class="cap cclose"></div>
<svg class="px" style="left:381px;top:10px" width="12" height="5" viewBox="0 0 12 5"><rect x=".5" y=".5" width="11" height="4" fill="#fff" stroke="#3a4058" stroke-width="1"/></svg>
<svg class="px" style="left:408px;top:5px" width="12" height="10" viewBox="0 0 12 10"><path d="M.5 .5h11v9h-11z M3.5 3.5v3h5v-3z" fill="#fff" fill-rule="evenodd" stroke="#3a4058" stroke-width="1"/></svg>
<svg class="px" style="left:445px;top:4px" width="13" height="12" viewBox="0 0 13 12"><path d="M1 1.5h4l1.5 1.9l1.5-1.9h4l-3.6 4.4l3.8 4.6h-4.1l-1.6-2.1l-1.6 2.1h-4.1l3.8-4.6z" fill="#fff" stroke="#40435a" stroke-width="1" stroke-linejoin="round"/></svg>
<div class="client">
</div>
<div class="menubar"></div>
<span class="t ns" style="left:14.23px;transform-origin:0 0;top:32.00px;font-size:12px;line-height:16px;transform:scaleX(1.007);"><u>F</u>ile</span>
<span class="t ns" style="left:46.78px;transform-origin:0 0;top:32.00px;font-size:12px;line-height:16px;transform:scaleX(0.977);"><u>V</u>iew</span>
<span class="t ns" style="left:84.98px;transform-origin:0 0;top:32.00px;font-size:12px;line-height:16px;transform:scaleX(1.062);"><u>H</u>elp</span>
<div class="tbline1"></div><div class="tbline2"></div><div class="tbline3"></div>
<div class="tbleft"></div><div class="tbsep"></div><div class="tbright"></div>
<div style="position:absolute;left:14px;top:55px;width:23px;height:22px;background:#f0f0f0;box-shadow:inset 1px 1px 0 #fff,inset -1px -1px 0 #7d7d7d,inset 2px 2px 0 #f9f9f9,inset -2px -2px 0 #d4d4d4;"></div>
<div style="position:absolute;left:37px;top:55px;width:23px;height:22px;background:#f0f0f0;box-shadow:inset 1px 1px 0 #fff,inset -1px -1px 0 #7d7d7d,inset 2px 2px 0 #f9f9f9,inset -2px -2px 0 #d4d4d4;"></div>
<div style="position:absolute;left:60px;top:55px;width:23px;height:22px;background:#f0f0f0;box-shadow:inset 1px 1px 0 #fff,inset -1px -1px 0 #7d7d7d,inset 2px 2px 0 #f9f9f9,inset -2px -2px 0 #d4d4d4;"></div>
<div style="position:absolute;left:91px;top:55px;width:23px;height:22px;background:#f0f0f0;box-shadow:inset 1px 1px 0 #fff,inset -1px -1px 0 #7d7d7d,inset 2px 2px 0 #f9f9f9,inset -2px -2px 0 #d4d4d4;"></div>
<div style="position:absolute;left:114px;top:55px;width:23px;height:22px;background:#f0f0f0;box-shadow:inset 1px 1px 0 #fff,inset -1px -1px 0 #7d7d7d,inset 2px 2px 0 #f9f9f9,inset -2px -2px 0 #d4d4d4;"></div>
<div style="position:absolute;left:137px;top:55px;width:23px;height:22px;background:#f0f0f0;box-shadow:inset 1px 1px 0 #fff,inset -1px -1px 0 #7d7d7d,inset 2px 2px 0 #f9f9f9,inset -2px -2px 0 #d4d4d4;"></div>
<div style="position:absolute;left:160px;top:55px;width:23px;height:22px;background:#f0f0f0;box-shadow:inset 1px 1px 0 #fff,inset -1px -1px 0 #7d7d7d,inset 2px 2px 0 #f9f9f9,inset -2px -2px 0 #d4d4d4;"></div>
<div style="position:absolute;left:183px;top:55px;width:23px;height:22px;background:#f0f0f0;box-shadow:inset 1px 1px 0 #fff,inset -1px -1px 0 #7d7d7d,inset 2px 2px 0 #f9f9f9,inset -2px -2px 0 #d4d4d4;"></div>
<svg class="px" style="left:20px;top:59px" width="11" height="13" viewBox="0 0 11 13" shape-rendering="crispEdges"><rect x="0" y="0" width="8" height="1" fill="#000"/><rect x="0" y="1" width="1" height="1" fill="#000"/><rect x="1" y="1" width="6" height="1" fill="#fff"/><rect x="7" y="1" width="2" height="1" fill="#000"/><rect x="0" y="2" width="1" height="1" fill="#000"/><rect x="1" y="2" width="6" height="1" fill="#fff"/><rect x="7" y="2" width="1" height="1" fill="#000"/><rect x="8" y="2" width="1" height="1" fill="#fff"/><rect x="9" y="2" width="1" height="1" fill="#000"/><rect x="0" y="3" width="1" height="1" fill="#000"/><rect x="1" y="3" width="6" height="1" fill="#fff"/><rect x="7" y="3" width="4" height="1" fill="#000"/><rect x="0" y="4" width="1" height="1" fill="#000"/><rect x="1" y="4" width="9" height="1" fill="#fff"/><rect x="10" y="4" width="1" height="1" fill="#000"/><rect x="0" y="5" width="1" height="1" fill="#000"/><rect x="1" y="5" width="9" height="1" fill="#fff"/><rect x="10" y="5" width="1" height="1" fill="#000"/><rect x="0" y="6" width="1" height="1" fill="#000"/><rect x="1" y="6" width="9" height="1" fill="#fff"/><rect x="10" y="6" width="1" height="1" fill="#000"/><rect x="0" y="7" width="1" height="1" fill="#000"/><rect x="1" y="7" width="9" height="1" fill="#fff"/><rect x="10" y="7" width="1" height="1" fill="#000"/><rect x="0" y="8" width="1" height="1" fill="#000"/><rect x="1" y="8" width="9" height="1" fill="#fff"/><rect x="10" y="8" width="1" height="1" fill="#000"/><rect x="0" y="9" width="1" height="1" fill="#000"/><rect x="1" y="9" width="9" height="1" fill="#fff"/><rect x="10" y="9" width="1" height="1" fill="#000"/><rect x="0" y="10" width="1" height="1" fill="#000"/><rect x="1" y="10" width="9" height="1" fill="#fff"/><rect x="10" y="10" width="1" height="1" fill="#000"/><rect x="0" y="11" width="1" height="1" fill="#000"/><rect x="1" y="11" width="9" height="1" fill="#fff"/><rect x="10" y="11" width="1" height="1" fill="#000"/><rect x="0" y="12" width="11" height="1" fill="#000"/></svg>
<svg class="px" style="left:41px;top:58px" width="16" height="13" viewBox="0 0 16 13" shape-rendering="crispEdges"><rect x="8" y="0" width="4" height="1" fill="#000"/><rect x="7" y="1" width="1" height="1" fill="#000"/><rect x="12" y="1" width="1" height="1" fill="#000"/><rect x="14" y="1" width="1" height="1" fill="#000"/><rect x="13" y="2" width="2" height="1" fill="#000"/><rect x="1" y="3" width="3" height="1" fill="#000"/><rect x="12" y="3" width="3" height="1" fill="#000"/><rect x="0" y="4" width="1" height="1" fill="#000"/><rect x="1" y="4" width="1" height="1" fill="#ffff00"/><rect x="2" y="4" width="1" height="1" fill="#fff"/><rect x="3" y="4" width="1" height="1" fill="#ffff00"/><rect x="4" y="4" width="7" height="1" fill="#000"/><rect x="0" y="5" width="1" height="1" fill="#000"/><rect x="1" y="5" width="1" height="1" fill="#fff"/><rect x="2" y="5" width="1" height="1" fill="#ffff00"/><rect x="3" y="5" width="1" height="1" fill="#fff"/><rect x="4" y="5" width="1" height="1" fill="#ffff00"/><rect x="5" y="5" width="1" height="1" fill="#fff"/><rect x="6" y="5" width="1" height="1" fill="#ffff00"/><rect x="7" y="5" width="1" height="1" fill="#fff"/><rect x="8" y="5" width="1" height="1" fill="#ffff00"/><rect x="9" y="5" width="1" height="1" fill="#fff"/><rect x="10" y="5" width="1" height="1" fill="#000"/><rect x="0" y="6" width="1" height="1" fill="#000"/><rect x="1" y="6" width="1" height="1" fill="#ffff00"/><rect x="2" y="6" width="1" height="1" fill="#fff"/><rect x="3" y="6" width="1" height="1" fill="#ffff00"/><rect x="4" y="6" width="1" height="1" fill="#fff"/><rect x="5" y="6" width="1" height="1" fill="#ffff00"/><rect x="6" y="6" width="1" height="1" fill="#fff"/><rect x="7" y="6" width="1" height="1" fill="#ffff00"/><rect x="8" y="6" width="1" height="1" fill="#fff"/><rect x="9" y="6" width="1" height="1" fill="#ffff00"/><rect x="10" y="6" width="1" height="1" fill="#000"/><rect x="0" y="7" width="1" height="1" fill="#000"/><rect x="1" y="7" width="1" height="1" fill="#fff"/><rect x="2" y="7" width="1" height="1" fill="#ffff00"/><rect x="3" y="7" width="1" height="1" fill="#fff"/><rect x="4" y="7" width="1" height="1" fill="#ffff00"/><rect x="5" y="7" width="10" height="1" fill="#000"/><rect x="0" y="8" width="1" height="1" fill="#000"/><rect x="1" y="8" width="1" height="1" fill="#ffff00"/><rect x="2" y="8" width="1" height="1" fill="#fff"/><rect x="3" y="8" width="1" height="1" fill="#ffff00"/><rect x="4" y="8" width="1" height="1" fill="#000"/><rect x="5" y="8" width="8" height="1" fill="#808000"/><rect x="13" y="8" width="1" height="1" fill="#000"/><rect x="0" y="9" width="1" height="1" fill="#000"/><rect x="1" y="9" width="1" height="1" fill="#fff"/><rect x="2" y="9" width="1" height="1" fill="#ffff00"/><rect x="3" y="9" width="1" height="1" fill="#000"/><rect x="4" y="9" width="8" height="1" fill="#808000"/><rect x="12" y="9" width="1" height="1" fill="#000"/><rect x="0" y="10" width="1" height="1" fill="#000"/><rect x="1" y="10" width="1" height="1" fill="#ffff00"/><rect x="2" y="10" width="1" height="1" fill="#000"/><rect x="3" y="10" width="8" height="1" fill="#808000"/><rect x="11" y="10" width="1" height="1" fill="#000"/><rect x="0" y="11" width="2" height="1" fill="#000"/><rect x="2" y="11" width="8" height="1" fill="#808000"/><rect x="10" y="11" width="1" height="1" fill="#000"/><rect x="0" y="12" width="11" height="1" fill="#000"/></svg>
<svg class="px" style="left:64px;top:58px" width="14" height="14" viewBox="0 0 14 14" shape-rendering="crispEdges"><rect x="0" y="0" width="14" height="1" fill="#000"/><rect x="0" y="1" width="1" height="1" fill="#000"/><rect x="1" y="1" width="1" height="1" fill="#808000"/><rect x="2" y="1" width="1" height="1" fill="#000"/><rect x="3" y="1" width="8" height="1" fill="#fff"/><rect x="11" y="1" width="1" height="1" fill="#000"/><rect x="12" y="1" width="1" height="1" fill="#fff"/><rect x="13" y="1" width="1" height="1" fill="#000"/><rect x="0" y="2" width="1" height="1" fill="#000"/><rect x="1" y="2" width="1" height="1" fill="#808000"/><rect x="2" y="2" width="1" height="1" fill="#000"/><rect x="3" y="2" width="1" height="1" fill="#fff"/><rect x="4" y="2" width="6" height="1" fill="#f0f0f0"/><rect x="10" y="2" width="1" height="1" fill="#fff"/><rect x="11" y="2" width="1" height="1" fill="#000"/><rect x="12" y="2" width="1" height="1" fill="#808000"/><rect x="13" y="2" width="1" height="1" fill="#000"/><rect x="0" y="3" width="1" height="1" fill="#000"/><rect x="1" y="3" width="1" height="1" fill="#808000"/><rect x="2" y="3" width="1" height="1" fill="#000"/><rect x="3" y="3" width="1" height="1" fill="#fff"/><rect x="4" y="3" width="6" height="1" fill="#f0f0f0"/><rect x="10" y="3" width="1" height="1" fill="#fff"/><rect x="11" y="3" width="1" height="1" fill="#000"/><rect x="12" y="3" width="1" height="1" fill="#808000"/><rect x="13" y="3" width="1" height="1" fill="#000"/><rect x="0" y="4" width="1" height="1" fill="#000"/><rect x="1" y="4" width="1" height="1" fill="#808000"/><rect x="2" y="4" width="1" height="1" fill="#000"/><rect x="3" y="4" width="1" height="1" fill="#fff"/><rect x="4" y="4" width="6" height="1" fill="#f0f0f0"/><rect x="10" y="4" width="1" height="1" fill="#fff"/><rect x="11" y="4" width="1" height="1" fill="#000"/><rect x="12" y="4" width="1" height="1" fill="#808000"/><rect x="13" y="4" width="1" height="1" fill="#000"/><rect x="0" y="5" width="1" height="1" fill="#000"/><rect x="1" y="5" width="1" height="1" fill="#808000"/><rect x="2" y="5" width="1" height="1" fill="#000"/><rect x="3" y="5" width="1" height="1" fill="#fff"/><rect x="4" y="5" width="6" height="1" fill="#f0f0f0"/><rect x="10" y="5" width="1" height="1" fill="#fff"/><rect x="11" y="5" width="1" height="1" fill="#000"/><rect x="12" y="5" width="1" height="1" fill="#808000"/><rect x="13" y="5" width="1" height="1" fill="#000"/><rect x="0" y="6" width="1" height="1" fill="#000"/><rect x="1" y="6" width="1" height="1" fill="#808000"/><rect x="2" y="6" width="1" height="1" fill="#000"/><rect x="3" y="6" width="8" height="1" fill="#fff"/><rect x="11" y="6" width="1" height="1" fill="#000"/><rect x="12" y="6" width="1" height="1" fill="#808000"/><rect x="13" y="6" width="1" height="1" fill="#000"/><rect x="0" y="7" width="1" height="1" fill="#000"/><rect x="1" y="7" width="2" height="1" fill="#808000"/><rect x="3" y="7" width="8" height="1" fill="#000"/><rect x="11" y="7" width="2" height="1" fill="#808000"/><rect x="13" y="7" width="1" height="1" fill="#000"/><rect x="0" y="8" width="1" height="1" fill="#000"/><rect x="1" y="8" width="12" height="1" fill="#808000"/><rect x="13" y="8" width="1" height="1" fill="#000"/><rect x="0" y="9" width="1" height="1" fill="#000"/><rect x="1" y="9" width="2" height="1" fill="#808000"/><rect x="3" y="9" width="9" height="1" fill="#000"/><rect x="12" y="9" width="1" height="1" fill="#808000"/><rect x="13" y="9" width="1" height="1" fill="#000"/><rect x="0" y="10" width="1" height="1" fill="#000"/><rect x="1" y="10" width="2" height="1" fill="#808000"/><rect x="3" y="10" width="6" height="1" fill="#000"/><rect x="9" y="10" width="2" height="1" fill="#fff"/><rect x="11" y="10" width="1" height="1" fill="#000"/><rect x="12" y="10" width="1" height="1" fill="#808000"/><rect x="13" y="10" width="1" height="1" fill="#000"/><rect x="0" y="11" width="1" height="1" fill="#000"/><rect x="1" y="11" width="2" height="1" fill="#808000"/><rect x="3" y="11" width="6" height="1" fill="#000"/><rect x="9" y="11" width="2" height="1" fill="#fff"/><rect x="11" y="11" width="1" height="1" fill="#000"/><rect x="12" y="11" width="1" height="1" fill="#808000"/><rect x="13" y="11" width="1" height="1" fill="#000"/><rect x="0" y="12" width="1" height="1" fill="#000"/><rect x="1" y="12" width="2" height="1" fill="#808000"/><rect x="3" y="12" width="6" height="1" fill="#000"/><rect x="9" y="12" width="2" height="1" fill="#fff"/><rect x="11" y="12" width="1" height="1" fill="#000"/><rect x="12" y="12" width="1" height="1" fill="#808000"/><rect x="13" y="12" width="1" height="1" fill="#000"/><rect x="1" y="13" width="13" height="1" fill="#000"/></svg>
<svg class="px" style="left:94px;top:58px" width="16" height="14" viewBox="0 0 16 14" shape-rendering="crispEdges"><rect x="5" y="0" width="9" height="1" fill="#000"/><rect x="4" y="1" width="1" height="1" fill="#000"/><rect x="5" y="1" width="7" height="1" fill="#fff"/><rect x="12" y="1" width="1" height="1" fill="#000"/><rect x="4" y="2" width="1" height="1" fill="#000"/><rect x="5" y="2" width="1" height="1" fill="#fff"/><rect x="6" y="2" width="5" height="1" fill="#000"/><rect x="11" y="2" width="1" height="1" fill="#fff"/><rect x="12" y="2" width="2" height="1" fill="#000"/><rect x="3" y="3" width="1" height="1" fill="#000"/><rect x="4" y="3" width="7" height="1" fill="#fff"/><rect x="11" y="3" width="1" height="1" fill="#000"/><rect x="12" y="3" width="1" height="1" fill="#fff"/><rect x="14" y="3" width="1" height="1" fill="#000"/><rect x="3" y="4" width="1" height="1" fill="#000"/><rect x="4" y="4" width="1" height="1" fill="#fff"/><rect x="5" y="4" width="5" height="1" fill="#000"/><rect x="10" y="4" width="1" height="1" fill="#fff"/><rect x="11" y="4" width="1" height="1" fill="#000"/><rect x="13" y="4" width="1" height="1" fill="#000"/><rect x="15" y="4" width="1" height="1" fill="#000"/><rect x="2" y="5" width="1" height="1" fill="#000"/><rect x="3" y="5" width="8" height="1" fill="#fff"/><rect x="11" y="5" width="1" height="1" fill="#000"/><rect x="13" y="5" width="1" height="1" fill="#000"/><rect x="15" y="5" width="1" height="1" fill="#000"/><rect x="1" y="6" width="12" height="1" fill="#000"/><rect x="14" y="6" width="2" height="1" fill="#000"/><rect x="0" y="7" width="1" height="1" fill="#000"/><rect x="1" y="7" width="11" height="1" fill="#fff"/><rect x="12" y="7" width="2" height="1" fill="#000"/><rect x="15" y="7" width="1" height="1" fill="#000"/><rect x="0" y="8" width="12" height="1" fill="#000"/><rect x="13" y="8" width="1" height="1" fill="#000"/><rect x="15" y="8" width="1" height="1" fill="#000"/><rect x="0" y="9" width="1" height="1" fill="#000"/><rect x="1" y="9" width="10" height="1" fill="#fff"/><rect x="11" y="9" width="1" height="1" fill="#000"/><rect x="13" y="9" width="3" height="1" fill="#000"/><rect x="0" y="10" width="1" height="1" fill="#000"/><rect x="1" y="10" width="5" height="1" fill="#fff"/><rect x="6" y="10" width="3" height="1" fill="#ffff00"/><rect x="9" y="10" width="2" height="1" fill="#fff"/><rect x="11" y="10" width="3" height="1" fill="#000"/><rect x="15" y="10" width="1" height="1" fill="#000"/><rect x="0" y="11" width="12" height="1" fill="#000"/><rect x="13" y="11" width="2" height="1" fill="#000"/><rect x="1" y="12" width="1" height="1" fill="#000"/><rect x="2" y="12" width="10" height="1" fill="#fff"/><rect x="12" y="12" width="2" height="1" fill="#000"/><rect x="1" y="13" width="12" height="1" fill="#000"/></svg>
<svg class="px" style="left:117px;top:58px" width="16" height="15" viewBox="0 0 16 15" shape-rendering="crispEdges"><rect x="0" y="0" width="8" height="1" fill="#000"/><rect x="0" y="1" width="1" height="1" fill="#000"/><rect x="1" y="1" width="6" height="1" fill="#fff"/><rect x="7" y="1" width="2" height="1" fill="#000"/><rect x="0" y="2" width="1" height="1" fill="#000"/><rect x="1" y="2" width="6" height="1" fill="#fff"/><rect x="7" y="2" width="1" height="1" fill="#000"/><rect x="8" y="2" width="1" height="1" fill="#fff"/><rect x="9" y="2" width="1" height="1" fill="#000"/><rect x="0" y="3" width="1" height="1" fill="#000"/><rect x="1" y="3" width="6" height="1" fill="#fff"/><rect x="7" y="3" width="4" height="1" fill="#000"/><rect x="0" y="4" width="1" height="1" fill="#000"/><rect x="1" y="4" width="9" height="1" fill="#fff"/><rect x="10" y="4" width="1" height="1" fill="#000"/><rect x="0" y="5" width="1" height="1" fill="#000"/><rect x="1" y="5" width="6" height="1" fill="#fff"/><rect x="7" y="5" width="4" height="1" fill="#000"/><rect x="0" y="6" width="1" height="1" fill="#000"/><rect x="1" y="6" width="5" height="1" fill="#fff"/><rect x="6" y="6" width="1" height="1" fill="#000"/><rect x="7" y="6" width="1" height="1" fill="#00ffff"/><rect x="8" y="6" width="1" height="1" fill="#fff"/><rect x="9" y="6" width="2" height="1" fill="#f0f0f0"/><rect x="11" y="6" width="1" height="1" fill="#000"/><rect x="0" y="7" width="1" height="1" fill="#000"/><rect x="1" y="7" width="4" height="1" fill="#fff"/><rect x="5" y="7" width="1" height="1" fill="#000"/><rect x="6" y="7" width="2" height="1" fill="#00ffff"/><rect x="8" y="7" width="1" height="1" fill="#fff"/><rect x="9" y="7" width="3" height="1" fill="#f0f0f0"/><rect x="12" y="7" width="1" height="1" fill="#000"/><rect x="0" y="8" width="1" height="1" fill="#000"/><rect x="1" y="8" width="4" height="1" fill="#fff"/><rect x="5" y="8" width="1" height="1" fill="#000"/><rect x="6" y="8" width="3" height="1" fill="#fff"/><rect x="9" y="8" width="3" height="1" fill="#f0f0f0"/><rect x="12" y="8" width="1" height="1" fill="#000"/><rect x="0" y="9" width="1" height="1" fill="#000"/><rect x="1" y="9" width="4" height="1" fill="#fff"/><rect x="5" y="9" width="1" height="1" fill="#000"/><rect x="6" y="9" width="2" height="1" fill="#fff"/><rect x="8" y="9" width="1" height="1" fill="#00ffff"/><rect x="9" y="9" width="3" height="1" fill="#f0f0f0"/><rect x="12" y="9" width="1" height="1" fill="#000"/><rect x="0" y="10" width="1" height="1" fill="#000"/><rect x="1" y="10" width="5" height="1" fill="#fff"/><rect x="6" y="10" width="1" height="1" fill="#000"/><rect x="7" y="10" width="1" height="1" fill="#f0f0f0"/><rect x="8" y="10" width="1" height="1" fill="#00ffff"/><rect x="9" y="10" width="2" height="1" fill="#f0f0f0"/><rect x="11" y="10" width="1" height="1" fill="#000"/><rect x="0" y="11" width="1" height="1" fill="#000"/><rect x="1" y="11" width="6" height="1" fill="#fff"/><rect x="7" y="11" width="4" height="1" fill="#000"/><rect x="12" y="11" width="1" height="1" fill="#000"/><rect x="0" y="12" width="1" height="1" fill="#000"/><rect x="1" y="12" width="9" height="1" fill="#fff"/><rect x="10" y="12" width="1" height="1" fill="#000"/><rect x="12" y="12" width="3" height="1" fill="#000"/><rect x="0" y="13" width="1" height="1" fill="#000"/><rect x="1" y="13" width="9" height="1" fill="#fff"/><rect x="10" y="13" width="1" height="1" fill="#000"/><rect x="13" y="13" width="3" height="1" fill="#000"/><rect x="0" y="14" width="11" height="1" fill="#000"/><rect x="14" y="14" width="2" height="1" fill="#000"/></svg>
<svg class="px" style="left:140px;top:58px" width="15" height="15" viewBox="0 0 15 15" shape-rendering="crispEdges"><rect x="7" y="0" width="1" height="1" fill="#a0a0a0"/><rect x="6" y="1" width="3" height="1" fill="#a0a0a0"/><rect x="5" y="2" width="5" height="1" fill="#a0a0a0"/><rect x="7" y="3" width="1" height="1" fill="#a0a0a0"/><rect x="7" y="4" width="1" height="1" fill="#a0a0a0"/><rect x="2" y="5" width="1" height="1" fill="#a0a0a0"/><rect x="7" y="5" width="1" height="1" fill="#a0a0a0"/><rect x="12" y="5" width="1" height="1" fill="#a0a0a0"/><rect x="1" y="6" width="2" height="1" fill="#a0a0a0"/><rect x="7" y="6" width="1" height="1" fill="#a0a0a0"/><rect x="12" y="6" width="2" height="1" fill="#a0a0a0"/><rect x="0" y="7" width="15" height="1" fill="#a0a0a0"/><rect x="1" y="8" width="2" height="1" fill="#a0a0a0"/><rect x="7" y="8" width="1" height="1" fill="#a0a0a0"/><rect x="12" y="8" width="2" height="1" fill="#a0a0a0"/><rect x="2" y="9" width="1" height="1" fill="#a0a0a0"/><rect x="7" y="9" width="1" height="1" fill="#a0a0a0"/><rect x="12" y="9" width="1" height="1" fill="#a0a0a0"/><rect x="7" y="10" width="1" height="1" fill="#a0a0a0"/><rect x="7" y="11" width="1" height="1" fill="#a0a0a0"/><rect x="5" y="12" width="5" height="1" fill="#a0a0a0"/><rect x="6" y="13" width="3" height="1" fill="#a0a0a0"/><rect x="7" y="14" width="1" height="1" fill="#a0a0a0"/></svg>
<svg class="px" style="left:166px;top:58px" width="10" height="14" viewBox="0 0 10 14" shape-rendering="crispEdges"><rect x="2" y="0" width="6" height="1" fill="#000"/><rect x="1" y="1" width="1" height="1" fill="#000"/><rect x="2" y="1" width="6" height="1" fill="#ffff00"/><rect x="8" y="1" width="1" height="1" fill="#000"/><rect x="0" y="2" width="1" height="1" fill="#000"/><rect x="1" y="2" width="2" height="1" fill="#ffff00"/><rect x="3" y="2" width="4" height="1" fill="#000"/><rect x="7" y="2" width="2" height="1" fill="#ffff00"/><rect x="9" y="2" width="1" height="1" fill="#000"/><rect x="0" y="3" width="1" height="1" fill="#000"/><rect x="1" y="3" width="2" height="1" fill="#ffff00"/><rect x="3" y="3" width="1" height="1" fill="#000"/><rect x="6" y="3" width="1" height="1" fill="#000"/><rect x="7" y="3" width="2" height="1" fill="#ffff00"/><rect x="9" y="3" width="1" height="1" fill="#000"/><rect x="1" y="4" width="2" height="1" fill="#000"/><rect x="5" y="4" width="1" height="1" fill="#000"/><rect x="6" y="4" width="2" height="1" fill="#ffff00"/><rect x="8" y="4" width="1" height="1" fill="#000"/><rect x="4" y="5" width="1" height="1" fill="#000"/><rect x="5" y="5" width="2" height="1" fill="#ffff00"/><rect x="7" y="5" width="1" height="1" fill="#000"/><rect x="3" y="6" width="1" height="1" fill="#000"/><rect x="4" y="6" width="2" height="1" fill="#ffff00"/><rect x="6" y="6" width="1" height="1" fill="#000"/><rect x="3" y="7" width="1" height="1" fill="#000"/><rect x="4" y="7" width="2" height="1" fill="#ffff00"/><rect x="6" y="7" width="1" height="1" fill="#000"/><rect x="3" y="8" width="1" height="1" fill="#000"/><rect x="4" y="8" width="2" height="1" fill="#ffff00"/><rect x="6" y="8" width="1" height="1" fill="#000"/><rect x="4" y="9" width="2" height="1" fill="#000"/><rect x="3" y="10" width="4" height="1" fill="#000"/><rect x="2" y="11" width="1" height="1" fill="#000"/><rect x="3" y="11" width="3" height="1" fill="#ffff00"/><rect x="6" y="11" width="1" height="1" fill="#000"/><rect x="2" y="12" width="1" height="1" fill="#000"/><rect x="3" y="12" width="3" height="1" fill="#ffff00"/><rect x="6" y="12" width="1" height="1" fill="#000"/><rect x="3" y="13" width="3" height="1" fill="#000"/></svg>
<svg class="px" style="left:187px;top:58px" width="16" height="14" viewBox="0 0 16 14" shape-rendering="crispEdges"><rect x="0" y="0" width="1" height="1" fill="#000"/><rect x="7" y="0" width="6" height="1" fill="#000080"/><rect x="0" y="1" width="2" height="1" fill="#000"/><rect x="6" y="1" width="3" height="1" fill="#000080"/><rect x="11" y="1" width="3" height="1" fill="#000080"/><rect x="0" y="2" width="3" height="1" fill="#000"/><rect x="6" y="2" width="3" height="1" fill="#000080"/><rect x="11" y="2" width="3" height="1" fill="#000080"/><rect x="0" y="3" width="4" height="1" fill="#000"/><rect x="11" y="3" width="3" height="1" fill="#000080"/><rect x="0" y="4" width="5" height="1" fill="#000"/><rect x="10" y="4" width="3" height="1" fill="#000080"/><rect x="0" y="5" width="6" height="1" fill="#000"/><rect x="9" y="5" width="3" height="1" fill="#000080"/><rect x="0" y="6" width="7" height="1" fill="#000"/><rect x="9" y="6" width="3" height="1" fill="#000080"/><rect x="0" y="7" width="8" height="1" fill="#000"/><rect x="9" y="7" width="3" height="1" fill="#000080"/><rect x="0" y="8" width="5" height="1" fill="#000"/><rect x="0" y="9" width="2" height="1" fill="#000"/><rect x="3" y="9" width="2" height="1" fill="#000"/><rect x="9" y="9" width="3" height="1" fill="#000080"/><rect x="0" y="10" width="1" height="1" fill="#000"/><rect x="3" y="10" width="3" height="1" fill="#000"/><rect x="9" y="10" width="3" height="1" fill="#000080"/><rect x="4" y="11" width="2" height="1" fill="#000"/><rect x="4" y="12" width="3" height="1" fill="#000"/><rect x="5" y="13" width="2" height="1" fill="#000"/></svg>
<div class="form"></div>
<span class="t" style="left:21.13px;transform-origin:0 0;top:91.00px;font-size:12px;line-height:16px;transform:scaleX(0.905);"><u>D</u>rive:</span>
<span class="t" style="left:21.79px;transform-origin:0 0;top:117.00px;font-size:12px;line-height:16px;transform:scaleX(0.868);">Transfer Si<u>z</u>e:</span>
<span class="t" style="left:21.78px;transform-origin:0 0;top:143.00px;font-size:12px;line-height:16px;transform:scaleX(0.912);">Total <u>L</u>ength:</span>
<div style="position:absolute;left:97px;top:89px;width:77px;height:21px;background:#fff;box-shadow:inset 1px 1px 0 #a0a0a0,inset -1px -1px 0 #fff,inset 2px 2px 0 #696969,inset -2px -2px 0 #e3e3e3;"></div><div style="position:absolute;left:155px;top:91px;width:17px;height:17px;background:#f0f0f0;box-shadow:inset 1px 1px 0 #e3e3e3,inset -1px -1px 0 #696969,inset 2px 2px 0 #fff,inset -2px -2px 0 #a0a0a0;"></div><svg class="px" style="left:160px;top:98px" width="7" height="4" viewBox="0 0 7 4" shape-rendering="crispEdges"><path d="M0 0h7v1h-1v1h-1v1h-1v1h-1v-1h-1v-1h-1v-1h-1z" fill="#000"/></svg>
<div style="position:absolute;left:97px;top:115px;width:77px;height:21px;background:#fff;box-shadow:inset 1px 1px 0 #a0a0a0,inset -1px -1px 0 #fff,inset 2px 2px 0 #696969,inset -2px -2px 0 #e3e3e3;"></div><div style="position:absolute;left:155px;top:117px;width:17px;height:17px;background:#f0f0f0;box-shadow:inset 1px 1px 0 #e3e3e3,inset -1px -1px 0 #696969,inset 2px 2px 0 #fff,inset -2px -2px 0 #a0a0a0;"></div><svg class="px" style="left:160px;top:124px" width="7" height="4" viewBox="0 0 7 4" shape-rendering="crispEdges"><path d="M0 0h7v1h-1v1h-1v1h-1v1h-1v-1h-1v-1h-1v-1h-1z" fill="#000"/></svg>
<div style="position:absolute;left:97px;top:141px;width:77px;height:21px;background:#fff;box-shadow:inset 1px 1px 0 #a0a0a0,inset -1px -1px 0 #fff,inset 2px 2px 0 #696969,inset -2px -2px 0 #e3e3e3;"></div><div style="position:absolute;left:155px;top:143px;width:17px;height:17px;background:#f0f0f0;box-shadow:inset 1px 1px 0 #e3e3e3,inset -1px -1px 0 #696969,inset 2px 2px 0 #fff,inset -2px -2px 0 #a0a0a0;"></div><svg class="px" style="left:160px;top:150px" width="7" height="4" viewBox="0 0 7 4" shape-rendering="crispEdges"><path d="M0 0h7v1h-1v1h-1v1h-1v1h-1v-1h-1v-1h-1v-1h-1z" fill="#000"/></svg>
<span class="t" style="left:101.09px;transform-origin:0 0;top:92.00px;font-size:12px;line-height:16px;transform:scaleX(0.846);">[-i-]</span>
<span class="t" style="left:118.93px;transform-origin:0 0;top:118.00px;font-size:12px;line-height:16px;transform:scaleX(0.974);">0.5</span>
<span class="t" style="left:100.96px;transform-origin:0 0;top:144.00px;font-size:12px;line-height:16px;transform:scaleX(0.901);">256 MB</span>
<span class="t" style="left:178.28px;transform-origin:0 0;top:117.00px;font-size:12px;line-height:16px;transform:scaleX(0.920);"><u>t</u>o</span>
<div style="position:absolute;left:193px;top:115px;width:77px;height:21px;background:#fff;box-shadow:inset 1px 1px 0 #a0a0a0,inset -1px -1px 0 #fff,inset 2px 2px 0 #696969,inset -2px -2px 0 #e3e3e3;"></div><div style="position:absolute;left:251px;top:117px;width:17px;height:17px;background:#f0f0f0;box-shadow:inset 1px 1px 0 #e3e3e3,inset -1px -1px 0 #696969,inset 2px 2px 0 #fff,inset -2px -2px 0 #a0a0a0;"></div><svg class="px" style="left:256px;top:124px" width="7" height="4" viewBox="0 0 7 4" shape-rendering="crispEdges"><path d="M0 0h7v1h-1v1h-1v1h-1v1h-1v-1h-1v-1h-1v-1h-1z" fill="#000"/></svg>
<span class="t" style="left:197.16px;transform-origin:0 0;top:118.00px;font-size:12px;line-height:16px;transform:scaleX(0.920);">8192.0</span>
<span class="t" style="left:276.67px;transform-origin:0 0;top:117.00px;font-size:12px;line-height:16px;transform:scaleX(0.868);">KB</span>
<div style="position:absolute;left:193px;top:90px;width:13px;height:13px;background:#fff;box-shadow:inset 1px 1px 0 #a0a0a0,inset -1px -1px 0 #fff,inset 2px 2px 0 #696969,inset -2px -2px 0 #e3e3e3;"></div>
<span class="t" style="left:210.82px;transform-origin:0 0;top:89.00px;font-size:12px;line-height:16px;transform:scaleX(0.912);">Force Write <u>A</u>ccess</span>
<div style="position:absolute;left:339px;top:90px;width:13px;height:13px;background:#fff;box-shadow:inset 1px 1px 0 #a0a0a0,inset -1px -1px 0 #fff,inset 2px 2px 0 #696969,inset -2px -2px 0 #e3e3e3;"></div><svg class="px" style="left:342px;top:93px" width="7" height="7" viewBox="0 0 7 7" shape-rendering="crispEdges"><path d="M0 2h1v1h1v1h1v-1h1v-1h1v-1h1v-1h1v3h-1v1h-1v1h-1v1h-1v1h-1v-1h-1v-1h-1z" fill="#000"/></svg>
<span class="t" style="left:356.61px;transform-origin:0 0;top:89.00px;font-size:12px;line-height:16px;transform:scaleX(0.927);">Di<u>r</u>ect I/O</span>
<div style="position:absolute;left:334px;top:106px;width:127px;height:58px;border:1px solid #a0a0a0;box-shadow:1px 1px 0 #fff,inset 1px 1px 0 #fff;box-sizing:border-box;"></div>
<svg class="px" style="left:340px;top:112px" width="12" height="12" viewBox="0 0 12 12"><circle cx="6" cy="6" r="5.5" fill="#fff"/><path d="M1.8 10.2A5.5 5.5 0 0 1 10.2 1.8" fill="none" stroke="#a0a0a0" stroke-width="1"/><path d="M2.5 9.5A4.5 4.5 0 0 1 9.5 2.5" fill="none" stroke="#696969" stroke-width="1"/><path d="M10.2 1.8A5.5 5.5 0 0 1 1.8 10.2" fill="none" stroke="#fff" stroke-width="1"/><path d="M9.5 2.5A4.5 4.5 0 0 1 2.5 9.5" fill="none" stroke="#e3e3e3" stroke-width="1"/></svg>
<svg class="px" style="left:340px;top:129px" width="12" height="12" viewBox="0 0 12 12"><circle cx="6" cy="6" r="5.5" fill="#fff"/><path d="M1.8 10.2A5.5 5.5 0 0 1 10.2 1.8" fill="none" stroke="#a0a0a0" stroke-width="1"/><path d="M2.5 9.5A4.5 4.5 0 0 1 9.5 2.5" fill="none" stroke="#696969" stroke-width="1"/><path d="M10.2 1.8A5.5 5.5 0 0 1 1.8 10.2" fill="none" stroke="#fff" stroke-width="1"/><path d="M9.5 2.5A4.5 4.5 0 0 1 2.5 9.5" fill="none" stroke="#e3e3e3" stroke-width="1"/><circle cx="6" cy="6" r="2" fill="#000"/></svg>
<svg class="px" style="left:340px;top:146px" width="12" height="12" viewBox="0 0 12 12"><circle cx="6" cy="6" r="5.5" fill="#fff"/><path d="M1.8 10.2A5.5 5.5 0 0 1 10.2 1.8" fill="none" stroke="#a0a0a0" stroke-width="1"/><path d="M2.5 9.5A4.5 4.5 0 0 1 9.5 2.5" fill="none" stroke="#696969" stroke-width="1"/><path d="M10.2 1.8A5.5 5.5 0 0 1 1.8 10.2" fill="none" stroke="#fff" stroke-width="1"/><path d="M9.5 2.5A4.5 4.5 0 0 1 2.5 9.5" fill="none" stroke="#e3e3e3" stroke-width="1"/></svg>
<span class="t" style="left:356.53px;transform-origin:0 0;top:111.00px;font-size:12px;line-height:16px;transform:scaleX(0.894);">I/O <u>C</u>omparison</span>
<span class="t" style="left:356.96px;transform-origin:0 0;top:128.00px;font-size:12px;line-height:16px;transform:scaleX(0.904);"><u>O</u>verlapped I/O</span>
<span class="t" style="left:356.64px;transform-origin:0 0;top:145.00px;font-size:12px;line-height:16px;transform:scaleX(0.892);"><u>N</u>either</span>
<span class="t" style="left:338.45px;transform-origin:0 0;top:169.00px;font-size:12px;line-height:16px;transform:scaleX(0.911);"><u>Q</u>ueue Depth:</span>
<div style="position:absolute;left:415px;top:167px;width:46px;height:21px;background:#fff;box-shadow:inset 1px 1px 0 #a0a0a0,inset -1px -1px 0 #fff,inset 2px 2px 0 #696969,inset -2px -2px 0 #e3e3e3;"></div><div style="position:absolute;left:442px;top:169px;width:17px;height:17px;background:#f0f0f0;box-shadow:inset 1px 1px 0 #e3e3e3,inset -1px -1px 0 #696969,inset 2px 2px 0 #fff,inset -2px -2px 0 #a0a0a0;"></div><svg class="px" style="left:447px;top:176px" width="7" height="4" viewBox="0 0 7 4" shape-rendering="crispEdges"><path d="M0 0h7v1h-1v1h-1v1h-1v1h-1v-1h-1v-1h-1v-1h-1z" fill="#000"/></svg>
<span class="t" style="left:419.27px;transform-origin:0 0;top:170.00px;font-size:12px;line-height:16px;transform:scaleX(0.948);">4</span>
<span class="t" style="left:21.48px;transform-origin:0 0;top:192.00px;font-size:12px;line-height:16px;transform:scaleX(0.860);">Controlled <u>b</u>y:</span>
<div style="position:absolute;left:21px;top:207px;width:212px;height:21px;background:#fff;box-shadow:inset 1px 1px 0 #a0a0a0,inset -1px -1px 0 #fff,inset 2px 2px 0 #696969,inset -2px -2px 0 #e3e3e3;"></div><div style="position:absolute;left:214px;top:209px;width:17px;height:17px;background:#f0f0f0;box-shadow:inset 1px 1px 0 #e3e3e3,inset -1px -1px 0 #696969,inset 2px 2px 0 #fff,inset -2px -2px 0 #a0a0a0;"></div><svg class="px" style="left:219px;top:216px" width="7" height="4" viewBox="0 0 7 4" shape-rendering="crispEdges"><path d="M0 0h7v1h-1v1h-1v1h-1v1h-1v-1h-1v-1h-1v-1h-1z" fill="#000"/></svg>
<div style="position:absolute;left:393px;top:207px;width:69px;height:20px;background:#f0f0f0;box-shadow:inset 0 0 0 1px #6a6a6a,inset 2px 2px 0 #fff,inset -2px -2px 0 #696969,inset 3px 3px 0 #e8e8e8,inset -3px -3px 0 #a0a0a0;"></div>
<div style="position:absolute;left:397px;top:211px;width:61px;height:12px;border:1px dotted #000;box-sizing:border-box;"></div>
<span class="t" style="left:416.07px;transform-origin:0 0;top:209.00px;font-size:12px;line-height:16px;transform:scaleX(0.886);"><u>S</u>tart</span>
<div style="position:absolute;left:21px;top:233px;width:440px;height:45px;background:#fff;box-shadow:inset 1px 1px 0 #a0a0a0,inset -1px -1px 0 #fff,inset 2px 2px 0 #696969,inset -2px -2px 0 #e3e3e3;"></div>
<div style="position:absolute;left:444px;top:235px;width:15px;height:41px;background:#f1f1f1;box-shadow:inset 1px 0 0 #e9e9e9;"></div>
<svg class="px" style="left:449px;top:242px" width="7" height="4" viewBox="0 0 7 4" shape-rendering="crispEdges"><path d="M3 0h1v1h1v1h1v1h1v1h-7v-1h1v-1h1v-1h1z" fill="#a0a0a0"/></svg>
<svg class="px" style="left:449px;top:267px" width="7" height="4" viewBox="0 0 7 4" shape-rendering="crispEdges"><path d="M0 0h7v1h-1v1h-1v1h-1v1h-1v-1h-1v-1h-1v-1h-1z" fill="#a0a0a0"/></svg>
<span class="t ds" style="left:29.02px;transform-origin:0 0;top:241.00px;font-size:13.6px;line-height:17px;transform:scaleX(1.033);">4x ST2000DM001-9YN164 @ Raid 5</span>
<span class="t ds" style="left:29.08px;transform-origin:0 0;top:260.00px;font-size:13.6px;line-height:17px;transform:scaleX(1.054);">Controller: ARC-1212 /w BBU - FW: 1.51</span>
<div style="position:absolute;left:21px;top:288px;width:440px;height:286px;border:1px solid #a0a0a0;box-shadow:1px 1px 0 #fff,inset 1px 1px 0 #fff;box-sizing:border-box;"></div>
<div style="position:absolute;left:209px;top:286px;width:64px;height:6px;background:#f0f0f0;"></div>
<span class="t" style="left:211.48px;transform-origin:0 0;top:281.00px;font-size:12px;line-height:16px;transform:scaleX(0.904);">Test Results</span>
<span class="t" style="left:156.89px;transform-origin:0 0;top:297.00px;font-size:12px;line-height:16px;transform:scaleX(0.937);">Write</span>
<div style="position:absolute;left:190px;top:302px;width:25px;height:5px;background:#f00;"></div>
<span class="t" style="left:239.67px;transform-origin:0 0;top:297.00px;font-size:12px;line-height:16px;transform:scaleX(0.967);">Read</span>
<div style="position:absolute;left:273px;top:302px;width:25px;height:5px;background:#008000;"></div>
<span class="t" style="left:368.89px;transform-origin:0 0;top:297.00px;font-size:12px;line-height:16px;transform:scaleX(0.929);">Write</span>
<span class="t" style="left:416.58px;transform-origin:0 0;top:297.00px;font-size:12px;line-height:16px;transform:scaleX(0.960);">Read</span>
<div class="chart">
<i class="g" style="left:29px"></i>
<i class="g" style="left:59px"></i>
<i class="g" style="left:89px"></i>
<i class="g" style="left:119px"></i>
<i class="g" style="left:149px"></i>
<i class="g" style="left:179px"></i>
<i class="g" style="left:209px"></i>
<i class="g" style="left:239px"></i>
<i class="g" style="left:269px"></i>
<i class="r" style="top:4px;width:25.9px"></i><i class="n" style="top:9px;width:32.1px"></i>
<i class="r" style="top:18px;width:54.7px"></i><i class="n" style="top:23px;width:63.4px"></i>
<i class="r" style="top:33px;width:96.0px"></i><i class="n" style="top:38px;width:104.0px"></i>
<i class="r" style="top:47px;width:156.9px"></i><i class="n" style="top:52px;width:156.5px"></i>
<i class="r" style="top:62px;width:200.1px"></i><i class="n" style="top:67px;width:172.3px"></i>
<i class="r" style="top:76px;width:217.1px"></i><i class="n" style="top:81px;width:196.0px"></i>
<i class="r" style="top:91px;width:212.0px"></i><i class="n" style="top:96px;width:185.4px"></i>
<i class="r" style="top:106px;width:209.4px"></i><i class="n" style="top:111px;width:187.7px"></i>
<i class="r" style="top:120px;width:178.0px"></i><i class="n" style="top:125px;width:192.7px"></i>
<i class="r" style="top:135px;width:209.2px"></i><i class="n" style="top:140px;width:169.5px"></i>
<i class="r" style="top:149px;width:212.4px"></i><i class="n" style="top:154px;width:156.9px"></i>
<i class="r" style="top:164px;width:205.5px"></i><i class="n" style="top:169px;width:159.0px"></i>
<i class="r" style="top:178px;width:206.4px"></i><i class="n" style="top:183px;width:158.5px"></i>
<i class="r" style="top:193px;width:209.1px"></i><i class="n" style="top:198px;width:161.3px"></i>
<i class="r" style="top:208px;width:210.5px"></i><i class="n" style="top:213px;width:160.6px"></i>
</div>
<span class="t" style="left:40.16px;transform-origin:100% 0;top:317.00px;font-size:12px;line-height:16px;transform:scaleX(0.893);">0.5</span>
<span class="t" style="left:371.58px;transform-origin:100% 0;top:317.00px;font-size:12px;line-height:16px;transform:scaleX(0.893);">45568</span>
<span class="t" style="left:419.38px;transform-origin:100% 0;top:317.00px;font-size:12px;line-height:16px;transform:scaleX(0.893);">55808</span>
<span class="t" style="left:40.05px;transform-origin:100% 0;top:331.00px;font-size:12px;line-height:16px;transform:scaleX(0.893);">1.0</span>
<span class="t" style="left:371.58px;transform-origin:100% 0;top:331.00px;font-size:12px;line-height:16px;transform:scaleX(0.893);">93476</span>
<span class="t" style="left:412.66px;transform-origin:100% 0;top:331.00px;font-size:12px;line-height:16px;transform:scaleX(0.893);">108068</span>
<span class="t" style="left:40.05px;transform-origin:100% 0;top:346.00px;font-size:12px;line-height:16px;transform:scaleX(0.893);">2.0</span>
<span class="t" style="left:364.86px;transform-origin:100% 0;top:346.00px;font-size:12px;line-height:16px;transform:scaleX(0.893);">162377</span>
<span class="t" style="left:412.66px;transform-origin:100% 0;top:346.00px;font-size:12px;line-height:16px;transform:scaleX(0.893);">175689</span>
<span class="t" style="left:40.05px;transform-origin:100% 0;top:360.00px;font-size:12px;line-height:16px;transform:scaleX(0.893);">4.0</span>
<span class="t" style="left:364.75px;transform-origin:100% 0;top:360.00px;font-size:12px;line-height:16px;transform:scaleX(0.893);">263790</span>
<span class="t" style="left:412.66px;transform-origin:100% 0;top:360.00px;font-size:12px;line-height:16px;transform:scaleX(0.893);">263132</span>
<span class="t" style="left:40.05px;transform-origin:100% 0;top:375.00px;font-size:12px;line-height:16px;transform:scaleX(0.893);">8.0</span>
<span class="t" style="left:364.86px;transform-origin:100% 0;top:375.00px;font-size:12px;line-height:16px;transform:scaleX(0.893);">335912</span>
<span class="t" style="left:412.66px;transform-origin:100% 0;top:375.00px;font-size:12px;line-height:16px;transform:scaleX(0.893);">289515</span>
<span class="t" style="left:33.33px;transform-origin:100% 0;top:389.00px;font-size:12px;line-height:16px;transform:scaleX(0.893);">16.0</span>
<span class="t" style="left:364.86px;transform-origin:100% 0;top:389.00px;font-size:12px;line-height:16px;transform:scaleX(0.893);">364216</span>
<span class="t" style="left:412.66px;transform-origin:100% 0;top:389.00px;font-size:12px;line-height:16px;transform:scaleX(0.893);">329052</span>
<span class="t" style="left:33.33px;transform-origin:100% 0;top:404.00px;font-size:12px;line-height:16px;transform:scaleX(0.893);">32.0</span>
<span class="t" style="left:364.65px;transform-origin:100% 0;top:404.00px;font-size:12px;line-height:16px;transform:scaleX(0.893);">355674</span>
<span class="t" style="left:413.40px;transform-origin:100% 0;top:404.00px;font-size:12px;line-height:16px;transform:scaleX(0.893);">311360</span>
<span class="t" style="left:33.33px;transform-origin:100% 0;top:419.00px;font-size:12px;line-height:16px;transform:scaleX(0.893);">64.0</span>
<span class="t" style="left:364.75px;transform-origin:100% 0;top:419.00px;font-size:12px;line-height:16px;transform:scaleX(0.893);">351320</span>
<span class="t" style="left:412.66px;transform-origin:100% 0;top:419.00px;font-size:12px;line-height:16px;transform:scaleX(0.893);">315223</span>
<span class="t" style="left:26.62px;transform-origin:100% 0;top:433.00px;font-size:12px;line-height:16px;transform:scaleX(0.893);">128.0</span>
<span class="t" style="left:364.86px;transform-origin:100% 0;top:433.00px;font-size:12px;line-height:16px;transform:scaleX(0.893);">298961</span>
<span class="t" style="left:412.66px;transform-origin:100% 0;top:433.00px;font-size:12px;line-height:16px;transform:scaleX(0.893);">323459</span>
<span class="t" style="left:26.62px;transform-origin:100% 0;top:448.00px;font-size:12px;line-height:16px;transform:scaleX(0.893);">256.0</span>
<span class="t" style="left:364.65px;transform-origin:100% 0;top:448.00px;font-size:12px;line-height:16px;transform:scaleX(0.893);">351054</span>
<span class="t" style="left:412.66px;transform-origin:100% 0;top:448.00px;font-size:12px;line-height:16px;transform:scaleX(0.893);">284837</span>
<span class="t" style="left:26.62px;transform-origin:100% 0;top:462.00px;font-size:12px;line-height:16px;transform:scaleX(0.893);">512.0</span>
<span class="t" style="left:364.75px;transform-origin:100% 0;top:462.00px;font-size:12px;line-height:16px;transform:scaleX(0.893);">356330</span>
<span class="t" style="left:412.66px;transform-origin:100% 0;top:462.00px;font-size:12px;line-height:16px;transform:scaleX(0.893);">263818</span>
<span class="t" style="left:20.01px;transform-origin:100% 0;top:477.00px;font-size:12px;line-height:16px;transform:scaleX(0.893);">1024.0</span>
<span class="t" style="left:364.65px;transform-origin:100% 0;top:477.00px;font-size:12px;line-height:16px;transform:scaleX(0.893);">344884</span>
<span class="t" style="left:412.66px;transform-origin:100% 0;top:477.00px;font-size:12px;line-height:16px;transform:scaleX(0.893);">267365</span>
<span class="t" style="left:20.01px;transform-origin:100% 0;top:491.00px;font-size:12px;line-height:16px;transform:scaleX(0.893);">2048.0</span>
<span class="t" style="left:364.86px;transform-origin:100% 0;top:491.00px;font-size:12px;line-height:16px;transform:scaleX(0.893);">346368</span>
<span class="t" style="left:412.66px;transform-origin:100% 0;top:491.00px;font-size:12px;line-height:16px;transform:scaleX(0.893);">266437</span>
<span class="t" style="left:20.01px;transform-origin:100% 0;top:506.00px;font-size:12px;line-height:16px;transform:scaleX(0.893);">4096.0</span>
<span class="t" style="left:364.86px;transform-origin:100% 0;top:506.00px;font-size:12px;line-height:16px;transform:scaleX(0.893);">350896</span>
<span class="t" style="left:413.51px;transform-origin:100% 0;top:506.00px;font-size:12px;line-height:16px;transform:scaleX(0.893);">271146</span>
<span class="t" style="left:20.01px;transform-origin:100% 0;top:521.00px;font-size:12px;line-height:16px;transform:scaleX(0.893);">8192.0</span>
<span class="t" style="left:364.65px;transform-origin:100% 0;top:521.00px;font-size:12px;line-height:16px;transform:scaleX(0.893);">353204</span>
<span class="t" style="left:412.66px;transform-origin:100% 0;top:521.00px;font-size:12px;line-height:16px;transform:scaleX(0.893);">270055</span>
<span class="t" style="left:56.34px;transform-origin:50% 0;top:544.00px;font-size:12px;line-height:16px;transform:scaleX(0.893);">0</span>
<span class="t" style="left:82.99px;transform-origin:50% 0;top:544.00px;font-size:12px;line-height:16px;transform:scaleX(0.893);">50</span>
<span class="t" style="left:109.47px;transform-origin:50% 0;top:544.00px;font-size:12px;line-height:16px;transform:scaleX(0.893);">100</span>
<span class="t" style="left:139.47px;transform-origin:50% 0;top:544.00px;font-size:12px;line-height:16px;transform:scaleX(0.893);">150</span>
<span class="t" style="left:169.63px;transform-origin:50% 0;top:544.00px;font-size:12px;line-height:16px;transform:scaleX(0.893);">200</span>
<span class="t" style="left:199.63px;transform-origin:50% 0;top:544.00px;font-size:12px;line-height:16px;transform:scaleX(0.893);">250</span>
<span class="t" style="left:229.68px;transform-origin:50% 0;top:544.00px;font-size:12px;line-height:16px;transform:scaleX(0.893);">300</span>
<span class="t" style="left:259.68px;transform-origin:50% 0;top:544.00px;font-size:12px;line-height:16px;transform:scaleX(0.893);">350</span>
<span class="t" style="left:289.79px;transform-origin:50% 0;top:544.00px;font-size:12px;line-height:16px;transform:scaleX(0.893);">400</span>
<span class="t" style="left:319.79px;transform-origin:50% 0;top:544.00px;font-size:12px;line-height:16px;transform:scaleX(0.893);">450</span>
<span class="t" style="left:349.68px;transform-origin:50% 0;top:544.00px;font-size:12px;line-height:16px;transform:scaleX(0.893);">500</span>
<span class="t" style="left:144.68px;transform-origin:0 0;top:557.00px;font-size:12px;line-height:16px;transform:scaleX(0.907);">Transfer Rate - MB / Sec</span>
<div class="status"></div>
<span class="t ns" style="left:9.50px;transform-origin:0 0;top:591.00px;font-size:12px;line-height:16px;transform:scaleX(0.940);">For Help, press F1</span>
<svg class="px" style="left:461px;top:594px" width="13" height="13" viewBox="0 0 13 13"><path d="M13 1.5L1.5 13M13 5.5L5.5 13M13 9.5L9.5 13" stroke="#fff" stroke-width="1.2"/><path d="M12.5 1L1 12.5M12.5 5L5 12.5M12.5 9L9 12.5" stroke="#a4a4a4" stroke-width="1.7"/></svg>
</div>
<div class="win" style="left:1447px;top:26px">
<div class="glassT"></div><div class="glassT2"></div><div class="glassL"></div><div class="glassR"></div>
<div class="glow"></div>
<div class="edgeO"></div><div class="edgeI"></div>
<svg class="px" style="left:8px;top:7px" width="16" height="16" viewBox="0 0 16 16"><rect width="16" height="16" fill="#fff"/><ellipse cx="5.6" cy="8" rx="4.2" ry="7.6" transform="rotate(22 5.6 8)" fill="none" stroke="#f00" stroke-width="1.1"/><rect x="4.5" y="5.5" width="11" height="5" fill="#a3968a" stroke="#e8202c" stroke-width="1"/><path d="M6.5 9.5l1-3l1 3M9 6.5h2M10 6.5v3M11.5 6.5h2M12.5 6.5v3" stroke="#e8e0d8" stroke-width=".7" fill="none"/><rect x="13.6" y="6.6" width="1.2" height="2.8" fill="none" stroke="#e8e0d8" stroke-width=".5"/></svg>
<span class="t ds" style="left:28.53px;transform-origin:0 0;top:7.00px;font-size:12px;line-height:16px;transform:scaleX(1.007);">Untitled - ATTO Disk Benchmark</span>
<div class="capwrap"></div>
<div class="cap cmin"></div><div class="cap cmax"></div><div class="cap cclose"></div>
<svg class="px" style="left:381px;top:10px" width="12" height="5" viewBox="0 0 12 5"><rect x=".5" y=".5" width="11" height="4" fill="#fff" stroke="#3a4058" stroke-width="1"/></svg>
<svg class="px" style="left:408px;top:5px" width="12" height="10" viewBox="0 0 12 10"><path d="M.5 .5h11v9h-11z M3.5 3.5v3h5v-3z" fill="#fff" fill-rule="evenodd" stroke="#3a4058" stroke-width="1"/></svg>
<svg class="px" style="left:445px;top:4px" width="13" height="12" viewBox="0 0 13 12"><path d="M1 1.5h4l1.5 1.9l1.5-1.9h4l-3.6 4.4l3.8 4.6h-4.1l-1.6-2.1l-1.6 2.1h-4.1l3.8-4.6z" fill="#fff" stroke="#40435a" stroke-width="1" stroke-linejoin="round"/></svg>
<div class="client">
</div>
<div class="menubar"></div>
<span class="t ns" style="left:14.23px;transform-origin:0 0;top:32.00px;font-size:12px;line-height:16px;transform:scaleX(1.007);"><u>F</u>ile</span>
<span class="t ns" style="left:46.78px;transform-origin:0 0;top:32.00px;font-size:12px;line-height:16px;transform:scaleX(0.977);"><u>V</u>iew</span>
<span class="t ns" style="left:84.98px;transform-origin:0 0;top:32.00px;font-size:12px;line-height:16px;transform:scaleX(1.062);"><u>H</u>elp</span>
<div class="tbline1"></div><div class="tbline2"></div><div class="tbline3"></div>
<div class="tbleft"></div><div class="tbsep"></div><div class="tbright"></div>
<div style="position:absolute;left:14px;top:55px;width:23px;height:22px;background:#f0f0f0;box-shadow:inset 1px 1px 0 #fff,inset -1px -1px 0 #7d7d7d,inset 2px 2px 0 #f9f9f9,inset -2px -2px 0 #d4d4d4;"></div>
<div style="position:absolute;left:37px;top:55px;width:23px;height:22px;background:#f0f0f0;box-shadow:inset 1px 1px 0 #fff,inset -1px -1px 0 #7d7d7d,inset 2px 2px 0 #f9f9f9,inset -2px -2px 0 #d4d4d4;"></div>
<div style="position:absolute;left:60px;top:55px;width:23px;height:22px;background:#f0f0f0;box-shadow:inset 1px 1px 0 #fff,inset -1px -1px 0 #7d7d7d,inset 2px 2px 0 #f9f9f9,inset -2px -2px 0 #d4d4d4;"></div>
<div style="position:absolute;left:91px;top:55px;width:23px;height:22px;background:#f0f0f0;box-shadow:inset 1px 1px 0 #fff,inset -1px -1px 0 #7d7d7d,inset 2px 2px 0 #f9f9f9,inset -2px -2px 0 #d4d4d4;"></div>
<div style="position:absolute;left:114px;top:55px;width:23px;height:22px;background:#f0f0f0;box-shadow:inset 1px 1px 0 #fff,inset -1px -1px 0 #7d7d7d,inset 2px 2px 0 #f9f9f9,inset -2px -2px 0 #d4d4d4;"></div>
<div style="position:absolute;left:137px;top:55px;width:23px;height:22px;background:#f0f0f0;box-shadow:inset 1px 1px 0 #fff,inset -1px -1px 0 #7d7d7d,inset 2px 2px 0 #f9f9f9,inset -2px -2px 0 #d4d4d4;"></div>
<div style="position:absolute;left:160px;top:55px;width:23px;height:22px;background:#f0f0f0;box-shadow:inset 1px 1px 0 #fff,inset -1px -1px 0 #7d7d7d,inset 2px 2px 0 #f9f9f9,inset -2px -2px 0 #d4d4d4;"></div>
<div style="position:absolute;left:183px;top:55px;width:23px;height:22px;background:#f0f0f0;box-shadow:inset 1px 1px 0 #fff,inset -1px -1px 0 #7d7d7d,inset 2px 2px 0 #f9f9f9,inset -2px -2px 0 #d4d4d4;"></div>
<svg class="px" style="left:20px;top:59px" width="11" height="13" viewBox="0 0 11 13" shape-rendering="crispEdges"><rect x="0" y="0" width="8" height="1" fill="#000"/><rect x="0" y="1" width="1" height="1" fill="#000"/><rect x="1" y="1" width="6" height="1" fill="#fff"/><rect x="7" y="1" width="2" height="1" fill="#000"/><rect x="0" y="2" width="1" height="1" fill="#000"/><rect x="1" y="2" width="6" height="1" fill="#fff"/><rect x="7" y="2" width="1" height="1" fill="#000"/><rect x="8" y="2" width="1" height="1" fill="#fff"/><rect x="9" y="2" width="1" height="1" fill="#000"/><rect x="0" y="3" width="1" height="1" fill="#000"/><rect x="1" y="3" width="6" height="1" fill="#fff"/><rect x="7" y="3" width="4" height="1" fill="#000"/><rect x="0" y="4" width="1" height="1" fill="#000"/><rect x="1" y="4" width="9" height="1" fill="#fff"/><rect x="10" y="4" width="1" height="1" fill="#000"/><rect x="0" y="5" width="1" height="1" fill="#000"/><rect x="1" y="5" width="9" height="1" fill="#fff"/><rect x="10" y="5" width="1" height="1" fill="#000"/><rect x="0" y="6" width="1" height="1" fill="#000"/><rect x="1" y="6" width="9" height="1" fill="#fff"/><rect x="10" y="6" width="1" height="1" fill="#000"/><rect x="0" y="7" width="1" height="1" fill="#000"/><rect x="1" y="7" width="9" height="1" fill="#fff"/><rect x="10" y="7" width="1" height="1" fill="#000"/><rect x="0" y="8" width="1" height="1" fill="#000"/><rect x="1" y="8" width="9" height="1" fill="#fff"/><rect x="10" y="8" width="1" height="1" fill="#000"/><rect x="0" y="9" width="1" height="1" fill="#000"/><rect x="1" y="9" width="9" height="1" fill="#fff"/><rect x="10" y="9" width="1" height="1" fill="#000"/><rect x="0" y="10" width="1" height="1" fill="#000"/><rect x="1" y="10" width="9" height="1" fill="#fff"/><rect x="10" y="10" width="1" height="1" fill="#000"/><rect x="0" y="11" width="1" height="1" fill="#000"/><rect x="1" y="11" width="9" height="1" fill="#fff"/><rect x="10" y="11" width="1" height="1" fill="#000"/><rect x="0" y="12" width="11" height="1" fill="#000"/></svg>
<svg class="px" style="left:41px;top:58px" width="16" height="13" viewBox="0 0 16 13" shape-rendering="crispEdges"><rect x="8" y="0" width="4" height="1" fill="#000"/><rect x="7" y="1" width="1" height="1" fill="#000"/><rect x="12" y="1" width="1" height="1" fill="#000"/><rect x="14" y="1" width="1" height="1" fill="#000"/><rect x="13" y="2" width="2" height="1" fill="#000"/><rect x="1" y="3" width="3" height="1" fill="#000"/><rect x="12" y="3" width="3" height="1" fill="#000"/><rect x="0" y="4" width="1" height="1" fill="#000"/><rect x="1" y="4" width="1" height="1" fill="#ffff00"/><rect x="2" y="4" width="1" height="1" fill="#fff"/><rect x="3" y="4" width="1" height="1" fill="#ffff00"/><rect x="4" y="4" width="7" height="1" fill="#000"/><rect x="0" y="5" width="1" height="1" fill="#000"/><rect x="1" y="5" width="1" height="1" fill="#fff"/><rect x="2" y="5" width="1" height="1" fill="#ffff00"/><rect x="3" y="5" width="1" height="1" fill="#fff"/><rect x="4" y="5" width="1" height="1" fill="#ffff00"/><rect x="5" y="5" width="1" height="1" fill="#fff"/><rect x="6" y="5" width="1" height="1" fill="#ffff00"/><rect x="7" y="5" width="1" height="1" fill="#fff"/><rect x="8" y="5" width="1" height="1" fill="#ffff00"/><rect x="9" y="5" width="1" height="1" fill="#fff"/><rect x="10" y="5" width="1" height="1" fill="#000"/><rect x="0" y="6" width="1" height="1" fill="#000"/><rect x="1" y="6" width="1" height="1" fill="#ffff00"/><rect x="2" y="6" width="1" height="1" fill="#fff"/><rect x="3" y="6" width="1" height="1" fill="#ffff00"/><rect x="4" y="6" width="1" height="1" fill="#fff"/><rect x="5" y="6" width="1" height="1" fill="#ffff00"/><rect x="6" y="6" width="1" height="1" fill="#fff"/><rect x="7" y="6" width="1" height="1" fill="#ffff00"/><rect x="8" y="6" width="1" height="1" fill="#fff"/><rect x="9" y="6" width="1" height="1" fill="#ffff00"/><rect x="10" y="6" width="1" height="1" fill="#000"/><rect x="0" y="7" width="1" height="1" fill="#000"/><rect x="1" y="7" width="1" height="1" fill="#fff"/><rect x="2" y="7" width="1" height="1" fill="#ffff00"/><rect x="3" y="7" width="1" height="1" fill="#fff"/><rect x="4" y="7" width="1" height="1" fill="#ffff00"/><rect x="5" y="7" width="10" height="1" fill="#000"/><rect x="0" y="8" width="1" height="1" fill="#000"/><rect x="1" y="8" width="1" height="1" fill="#ffff00"/><rect x="2" y="8" width="1" height="1" fill="#fff"/><rect x="3" y="8" width="1" height="1" fill="#ffff00"/><rect x="4" y="8" width="1" height="1" fill="#000"/><rect x="5" y="8" width="8" height="1" fill="#808000"/><rect x="13" y="8" width="1" height="1" fill="#000"/><rect x="0" y="9" width="1" height="1" fill="#000"/><rect x="1" y="9" width="1" height="1" fill="#fff"/><rect x="2" y="9" width="1" height="1" fill="#ffff00"/><rect x="3" y="9" width="1" height="1" fill="#000"/><rect x="4" y="9" width="8" height="1" fill="#808000"/><rect x="12" y="9" width="1" height="1" fill="#000"/><rect x="0" y="10" width="1" height="1" fill="#000"/><rect x="1" y="10" width="1" height="1" fill="#ffff00"/><rect x="2" y="10" width="1" height="1" fill="#000"/><rect x="3" y="10" width="8" height="1" fill="#808000"/><rect x="11" y="10" width="1" height="1" fill="#000"/><rect x="0" y="11" width="2" height="1" fill="#000"/><rect x="2" y="11" width="8" height="1" fill="#808000"/><rect x="10" y="11" width="1" height="1" fill="#000"/><rect x="0" y="12" width="11" height="1" fill="#000"/></svg>
<svg class="px" style="left:64px;top:58px" width="14" height="14" viewBox="0 0 14 14" shape-rendering="crispEdges"><rect x="0" y="0" width="14" height="1" fill="#000"/><rect x="0" y="1" width="1" height="1" fill="#000"/><rect x="1" y="1" width="1" height="1" fill="#808000"/><rect x="2" y="1" width="1" height="1" fill="#000"/><rect x="3" y="1" width="8" height="1" fill="#fff"/><rect x="11" y="1" width="1" height="1" fill="#000"/><rect x="12" y="1" width="1" height="1" fill="#fff"/><rect x="13" y="1" width="1" height="1" fill="#000"/><rect x="0" y="2" width="1" height="1" fill="#000"/><rect x="1" y="2" width="1" height="1" fill="#808000"/><rect x="2" y="2" width="1" height="1" fill="#000"/><rect x="3" y="2" width="1" height="1" fill="#fff"/><rect x="4" y="2" width="6" height="1" fill="#f0f0f0"/><rect x="10" y="2" width="1" height="1" fill="#fff"/><rect x="11" y="2" width="1" height="1" fill="#000"/><rect x="12" y="2" width="1" height="1" fill="#808000"/><rect x="13" y="2" width="1" height="1" fill="#000"/><rect x="0" y="3" width="1" height="1" fill="#000"/><rect x="1" y="3" width="1" height="1" fill="#808000"/><rect x="2" y="3" width="1" height="1" fill="#000"/><rect x="3" y="3" width="1" height="1" fill="#fff"/><rect x="4" y="3" width="6" height="1" fill="#f0f0f0"/><rect x="10" y="3" width="1" height="1" fill="#fff"/><rect x="11" y="3" width="1" height="1" fill="#000"/><rect x="12" y="3" width="1" height="1" fill="#808000"/><rect x="13" y="3" width="1" height="1" fill="#000"/><rect x="0" y="4" width="1" height="1" fill="#000"/><rect x="1" y="4" width="1" height="1" fill="#808000"/><rect x="2" y="4" width="1" height="1" fill="#000"/><rect x="3" y="4" width="1" height="1" fill="#fff"/><rect x="4" y="4" width="6" height="1" fill="#f0f0f0"/><rect x="10" y="4" width="1" height="1" fill="#fff"/><rect x="11" y="4" width="1" height="1" fill="#000"/><rect x="12" y="4" width="1" height="1" fill="#808000"/><rect x="13" y="4" width="1" height="1" fill="#000"/><rect x="0" y="5" width="1" height="1" fill="#000"/><rect x="1" y="5" width="1" height="1" fill="#808000"/><rect x="2" y="5" width="1" height="1" fill="#000"/><rect x="3" y="5" width="1" height="1" fill="#fff"/><rect x="4" y="5" width="6" height="1" fill="#f0f0f0"/><rect x="10" y="5" width="1" height="1" fill="#fff"/><rect x="11" y="5" width="1" height="1" fill="#000"/><rect x="12" y="5" width="1" height="1" fill="#808000"/><rect x="13" y="5" width="1" height="1" fill="#000"/><rect x="0" y="6" width="1" height="1" fill="#000"/><rect x="1" y="6" width="1" height="1" fill="#808000"/><rect x="2" y="6" width="1" height="1" fill="#000"/><rect x="3" y="6" width="8" height="1" fill="#fff"/><rect x="11" y="6" width="1" height="1" fill="#000"/><rect x="12" y="6" width="1" height="1" fill="#808000"/><rect x="13" y="6" width="1" height="1" fill="#000"/><rect x="0" y="7" width="1" height="1" fill="#000"/><rect x="1" y="7" width="2" height="1" fill="#808000"/><rect x="3" y="7" width="8" height="1" fill="#000"/><rect x="11" y="7" width="2" height="1" fill="#808000"/><rect x="13" y="7" width="1" height="1" fill="#000"/><rect x="0" y="8" width="1" height="1" fill="#000"/><rect x="1" y="8" width="12" height="1" fill="#808000"/><rect x="13" y="8" width="1" height="1" fill="#000"/><rect x="0" y="9" width="1" height="1" fill="#000"/><rect x="1" y="9" width="2" height="1" fill="#808000"/><rect x="3" y="9" width="9" height="1" fill="#000"/><rect x="12" y="9" width="1" height="1" fill="#808000"/><rect x="13" y="9" width="1" height="1" fill="#000"/><rect x="0" y="10" width="1" height="1" fill="#000"/><rect x="1" y="10" width="2" height="1" fill="#808000"/><rect x="3" y="10" width="6" height="1" fill="#000"/><rect x="9" y="10" width="2" height="1" fill="#fff"/><rect x="11" y="10" width="1" height="1" fill="#000"/><rect x="12" y="10" width="1" height="1" fill="#808000"/><rect x="13" y="10" width="1" height="1" fill="#000"/><rect x="0" y="11" width="1" height="1" fill="#000"/><rect x="1" y="11" width="2" height="1" fill="#808000"/><rect x="3" y="11" width="6" height="1" fill="#000"/><rect x="9" y="11" width="2" height="1" fill="#fff"/><rect x="11" y="11" width="1" height="1" fill="#000"/><rect x="12" y="11" width="1" height="1" fill="#808000"/><rect x="13" y="11" width="1" height="1" fill="#000"/><rect x="0" y="12" width="1" height="1" fill="#000"/><rect x="1" y="12" width="2" height="1" fill="#808000"/><rect x="3" y="12" width="6" height="1" fill="#000"/><rect x="9" y="12" width="2" height="1" fill="#fff"/><rect x="11" y="12" width="1" height="1" fill="#000"/><rect x="12" y="12" width="1" height="1" fill="#808000"/><rect x="13" y="12" width="1" height="1" fill="#000"/><rect x="1" y="13" width="13" height="1" fill="#000"/></svg>
<svg class="px" style="left:94px;top:58px" width="16" height="14" viewBox="0 0 16 14" shape-rendering="crispEdges"><rect x="5" y="0" width="9" height="1" fill="#000"/><rect x="4" y="1" width="1" height="1" fill="#000"/><rect x="5" y="1" width="7" height="1" fill="#fff"/><rect x="12" y="1" width="1" height="1" fill="#000"/><rect x="4" y="2" width="1" height="1" fill="#000"/><rect x="5" y="2" width="1" height="1" fill="#fff"/><rect x="6" y="2" width="5" height="1" fill="#000"/><rect x="11" y="2" width="1" height="1" fill="#fff"/><rect x="12" y="2" width="2" height="1" fill="#000"/><rect x="3" y="3" width="1" height="1" fill="#000"/><rect x="4" y="3" width="7" height="1" fill="#fff"/><rect x="11" y="3" width="1" height="1" fill="#000"/><rect x="12" y="3" width="1" height="1" fill="#fff"/><rect x="14" y="3" width="1" height="1" fill="#000"/><rect x="3" y="4" width="1" height="1" fill="#000"/><rect x="4" y="4" width="1" height="1" fill="#fff"/><rect x="5" y="4" width="5" height="1" fill="#000"/><rect x="10" y="4" width="1" height="1" fill="#fff"/><rect x="11" y="4" width="1" height="1" fill="#000"/><rect x="13" y="4" width="1" height="1" fill="#000"/><rect x="15" y="4" width="1" height="1" fill="#000"/><rect x="2" y="5" width="1" height="1" fill="#000"/><rect x="3" y="5" width="8" height="1" fill="#fff"/><rect x="11" y="5" width="1" height="1" fill="#000"/><rect x="13" y="5" width="1" height="1" fill="#000"/><rect x="15" y="5" width="1" height="1" fill="#000"/><rect x="1" y="6" width="12" height="1" fill="#000"/><rect x="14" y="6" width="2" height="1" fill="#000"/><rect x="0" y="7" width="1" height="1" fill="#000"/><rect x="1" y="7" width="11" height="1" fill="#fff"/><rect x="12" y="7" width="2" height="1" fill="#000"/><rect x="15" y="7" width="1" height="1" fill="#000"/><rect x="0" y="8" width="12" height="1" fill="#000"/><rect x="13" y="8" width="1" height="1" fill="#000"/><rect x="15" y="8" width="1" height="1" fill="#000"/><rect x="0" y="9" width="1" height="1" fill="#000"/><rect x="1" y="9" width="10" height="1" fill="#fff"/><rect x="11" y="9" width="1" height="1" fill="#000"/><rect x="13" y="9" width="3" height="1" fill="#000"/><rect x="0" y="10" width="1" height="1" fill="#000"/><rect x="1" y="10" width="5" height="1" fill="#fff"/><rect x="6" y="10" width="3" height="1" fill="#ffff00"/><rect x="9" y="10" width="2" height="1" fill="#fff"/><rect x="11" y="10" width="3" height="1" fill="#000"/><rect x="15" y="10" width="1" height="1" fill="#000"/><rect x="0" y="11" width="12" height="1" fill="#000"/><rect x="13" y="11" width="2" height="1" fill="#000"/><rect x="1" y="12" width="1" height="1" fill="#000"/><rect x="2" y="12" width="10" height="1" fill="#fff"/><rect x="12" y="12" width="2" height="1" fill="#000"/><rect x="1" y="13" width="12" height="1" fill="#000"/></svg>
<svg class="px" style="left:117px;top:58px" width="16" height="15" viewBox="0 0 16 15" shape-rendering="crispEdges"><rect x="0" y="0" width="8" height="1" fill="#000"/><rect x="0" y="1" width="1" height="1" fill="#000"/><rect x="1" y="1" width="6" height="1" fill="#fff"/><rect x="7" y="1" width="2" height="1" fill="#000"/><rect x="0" y="2" width="1" height="1" fill="#000"/><rect x="1" y="2" width="6" height="1" fill="#fff"/><rect x="7" y="2" width="1" height="1" fill="#000"/><rect x="8" y="2" width="1" height="1" fill="#fff"/><rect x="9" y="2" width="1" height="1" fill="#000"/><rect x="0" y="3" width="1" height="1" fill="#000"/><rect x="1" y="3" width="6" height="1" fill="#fff"/><rect x="7" y="3" width="4" height="1" fill="#000"/><rect x="0" y="4" width="1" height="1" fill="#000"/><rect x="1" y="4" width="9" height="1" fill="#fff"/><rect x="10" y="4" width="1" height="1" fill="#000"/><rect x="0" y="5" width="1" height="1" fill="#000"/><rect x="1" y="5" width="6" height="1" fill="#fff"/><rect x="7" y="5" width="4" height="1" fill="#000"/><rect x="0" y="6" width="1" height="1" fill="#000"/><rect x="1" y="6" width="5" height="1" fill="#fff"/><rect x="6" y="6" width="1" height="1" fill="#000"/><rect x="7" y="6" width="1" height="1" fill="#00ffff"/><rect x="8" y="6" width="1" height="1" fill="#fff"/><rect x="9" y="6" width="2" height="1" fill="#f0f0f0"/><rect x="11" y="6" width="1" height="1" fill="#000"/><rect x="0" y="7" width="1" height="1" fill="#000"/><rect x="1" y="7" width="4" height="1" fill="#fff"/><rect x="5" y="7" width="1" height="1" fill="#000"/><rect x="6" y="7" width="2" height="1" fill="#00ffff"/><rect x="8" y="7" width="1" height="1" fill="#fff"/><rect x="9" y="7" width="3" height="1" fill="#f0f0f0"/><rect x="12" y="7" width="1" height="1" fill="#000"/><rect x="0" y="8" width="1" height="1" fill="#000"/><rect x="1" y="8" width="4" height="1" fill="#fff"/><rect x="5" y="8" width="1" height="1" fill="#000"/><rect x="6" y="8" width="3" height="1" fill="#fff"/><rect x="9" y="8" width="3" height="1" fill="#f0f0f0"/><rect x="12" y="8" width="1" height="1" fill="#000"/><rect x="0" y="9" width="1" height="1" fill="#000"/><rect x="1" y="9" width="4" height="1" fill="#fff"/><rect x="5" y="9" width="1" height="1" fill="#000"/><rect x="6" y="9" width="2" height="1" fill="#fff"/><rect x="8" y="9" width="1" height="1" fill="#00ffff"/><rect x="9" y="9" width="3" height="1" fill="#f0f0f0"/><rect x="12" y="9" width="1" height="1" fill="#000"/><rect x="0" y="10" width="1" height="1" fill="#000"/><rect x="1" y="10" width="5" height="1" fill="#fff"/><rect x="6" y="10" width="1" height="1" fill="#000"/><rect x="7" y="10" width="1" height="1" fill="#f0f0f0"/><rect x="8" y="10" width="1" height="1" fill="#00ffff"/><rect x="9" y="10" width="2" height="1" fill="#f0f0f0"/><rect x="11" y="10" width="1" height="1" fill="#000"/><rect x="0" y="11" width="1" height="1" fill="#000"/><rect x="1" y="11" width="6" height="1" fill="#fff"/><rect x="7" y="11" width="4" height="1" fill="#000"/><rect x="12" y="11" width="1" height="1" fill="#000"/><rect x="0" y="12" width="1" height="1" fill="#000"/><rect x="1" y="12" width="9" height="1" fill="#fff"/><rect x="10" y="12" width="1" height="1" fill="#000"/><rect x="12" y="12" width="3" height="1" fill="#000"/><rect x="0" y="13" width="1" height="1" fill="#000"/><rect x="1" y="13" width="9" height="1" fill="#fff"/><rect x="10" y="13" width="1" height="1" fill="#000"/><rect x="13" y="13" width="3" height="1" fill="#000"/><rect x="0" y="14" width="11" height="1" fill="#000"/><rect x="14" y="14" width="2" height="1" fill="#000"/></svg>
<svg class="px" style="left:140px;top:58px" width="15" height="15" viewBox="0 0 15 15" shape-rendering="crispEdges"><rect x="7" y="0" width="1" height="1" fill="#a0a0a0"/><rect x="6" y="1" width="3" height="1" fill="#a0a0a0"/><rect x="5" y="2" width="5" height="1" fill="#a0a0a0"/><rect x="7" y="3" width="1" height="1" fill="#a0a0a0"/><rect x="7" y="4" width="1" height="1" fill="#a0a0a0"/><rect x="2" y="5" width="1" height="1" fill="#a0a0a0"/><rect x="7" y="5" width="1" height="1" fill="#a0a0a0"/><rect x="12" y="5" width="1" height="1" fill="#a0a0a0"/><rect x="1" y="6" width="2" height="1" fill="#a0a0a0"/><rect x="7" y="6" width="1" height="1" fill="#a0a0a0"/><rect x="12" y="6" width="2" height="1" fill="#a0a0a0"/><rect x="0" y="7" width="15" height="1" fill="#a0a0a0"/><rect x="1" y="8" width="2" height="1" fill="#a0a0a0"/><rect x="7" y="8" width="1" height="1" fill="#a0a0a0"/><rect x="12" y="8" width="2" height="1" fill="#a0a0a0"/><rect x="2" y="9" width="1" height="1" fill="#a0a0a0"/><rect x="7" y="9" width="1" height="1" fill="#a0a0a0"/><rect x="12" y="9" width="1" height="1" fill="#a0a0a0"/><rect x="7" y="10" width="1" height="1" fill="#a0a0a0"/><rect x="7" y="11" width="1" height="1" fill="#a0a0a0"/><rect x="5" y="12" width="5" height="1" fill="#a0a0a0"/><rect x="6" y="13" width="3" height="1" fill="#a0a0a0"/><rect x="7" y="14" width="1" height="1" fill="#a0a0a0"/></svg>
<svg class="px" style="left:166px;top:58px" width="10" height="14" viewBox="0 0 10 14" shape-rendering="crispEdges"><rect x="2" y="0" width="6" height="1" fill="#000"/><rect x="1" y="1" width="1" height="1" fill="#000"/><rect x="2" y="1" width="6" height="1" fill="#ffff00"/><rect x="8" y="1" width="1" height="1" fill="#000"/><rect x="0" y="2" width="1" height="1" fill="#000"/><rect x="1" y="2" width="2" height="1" fill="#ffff00"/><rect x="3" y="2" width="4" height="1" fill="#000"/><rect x="7" y="2" width="2" height="1" fill="#ffff00"/><rect x="9" y="2" width="1" height="1" fill="#000"/><rect x="0" y="3" width="1" height="1" fill="#000"/><rect x="1" y="3" width="2" height="1" fill="#ffff00"/><rect x="3" y="3" width="1" height="1" fill="#000"/><rect x="6" y="3" width="1" height="1" fill="#000"/><rect x="7" y="3" width="2" height="1" fill="#ffff00"/><rect x="9" y="3" width="1" height="1" fill="#000"/><rect x="1" y="4" width="2" height="1" fill="#000"/><rect x="5" y="4" width="1" height="1" fill="#000"/><rect x="6" y="4" width="2" height="1" fill="#ffff00"/><rect x="8" y="4" width="1" height="1" fill="#000"/><rect x="4" y="5" width="1" height="1" fill="#000"/><rect x="5" y="5" width="2" height="1" fill="#ffff00"/><rect x="7" y="5" width="1" height="1" fill="#000"/><rect x="3" y="6" width="1" height="1" fill="#000"/><rect x="4" y="6" width="2" height="1" fill="#ffff00"/><rect x="6" y="6" width="1" height="1" fill="#000"/><rect x="3" y="7" width="1" height="1" fill="#000"/><rect x="4" y="7" width="2" height="1" fill="#ffff00"/><rect x="6" y="7" width="1" height="1" fill="#000"/><rect x="3" y="8" width="1" height="1" fill="#000"/><rect x="4" y="8" width="2" height="1" fill="#ffff00"/><rect x="6" y="8" width="1" height="1" fill="#000"/><rect x="4" y="9" width="2" height="1" fill="#000"/><rect x="3" y="10" width="4" height="1" fill="#000"/><rect x="2" y="11" width="1" height="1" fill="#000"/><rect x="3" y="11" width="3" height="1" fill="#ffff00"/><rect x="6" y="11" width="1" height="1" fill="#000"/><rect x="2" y="12" width="1" height="1" fill="#000"/><rect x="3" y="12" width="3" height="1" fill="#ffff00"/><rect x="6" y="12" width="1" height="1" fill="#000"/><rect x="3" y="13" width="3" height="1" fill="#000"/></svg>
<svg class="px" style="left:187px;top:58px" width="16" height="14" viewBox="0 0 16 14" shape-rendering="crispEdges"><rect x="0" y="0" width="1" height="1" fill="#000"/><rect x="7" y="0" width="6" height="1" fill="#000080"/><rect x="0" y="1" width="2" height="1" fill="#000"/><rect x="6" y="1" width="3" height="1" fill="#000080"/><rect x="11" y="1" width="3" height="1" fill="#000080"/><rect x="0" y="2" width="3" height="1" fill="#000"/><rect x="6" y="2" width="3" height="1" fill="#000080"/><rect x="11" y="2" width="3" height="1" fill="#000080"/><rect x="0" y="3" width="4" height="1" fill="#000"/><rect x="11" y="3" width="3" height="1" fill="#000080"/><rect x="0" y="4" width="5" height="1" fill="#000"/><rect x="10" y="4" width="3" height="1" fill="#000080"/><rect x="0" y="5" width="6" height="1" fill="#000"/><rect x="9" y="5" width="3" height="1" fill="#000080"/><rect x="0" y="6" width="7" height="1" fill="#000"/><rect x="9" y="6" width="3" height="1" fill="#000080"/><rect x="0" y="7" width="8" height="1" fill="#000"/><rect x="9" y="7" width="3" height="1" fill="#000080"/><rect x="0" y="8" width="5" height="1" fill="#000"/><rect x="0" y="9" width="2" height="1" fill="#000"/><rect x="3" y="9" width="2" height="1" fill="#000"/><rect x="9" y="9" width="3" height="1" fill="#000080"/><rect x="0" y="10" width="1" height="1" fill="#000"/><rect x="3" y="10" width="3" height="1" fill="#000"/><rect x="9" y="10" width="3" height="1" fill="#000080"/><rect x="4" y="11" width="2" height="1" fill="#000"/><rect x="4" y="12" width="3" height="1" fill="#000"/><rect x="5" y="13" width="2" height="1" fill="#000"/></svg>
<div class="form"></div>
<span class="t" style="left:21.13px;transform-origin:0 0;top:91.00px;font-size:12px;line-height:16px;transform:scaleX(0.905);"><u>D</u>rive:</span>
<span class="t" style="left:21.79px;transform-origin:0 0;top:117.00px;font-size:12px;line-height:16px;transform:scaleX(0.868);">Transfer Si<u>z</u>e:</span>
<span class="t" style="left:21.78px;transform-origin:0 0;top:143.00px;font-size:12px;line-height:16px;transform:scaleX(0.912);">Total <u>L</u>ength:</span>
<div style="position:absolute;left:97px;top:89px;width:77px;height:21px;background:#fff;box-shadow:inset 1px 1px 0 #a0a0a0,inset -1px -1px 0 #fff,inset 2px 2px 0 #696969,inset -2px -2px 0 #e3e3e3;"></div><div style="position:absolute;left:155px;top:91px;width:17px;height:17px;background:#f0f0f0;box-shadow:inset 1px 1px 0 #e3e3e3,inset -1px -1px 0 #696969,inset 2px 2px 0 #fff,inset -2px -2px 0 #a0a0a0;"></div><svg class="px" style="left:160px;top:98px" width="7" height="4" viewBox="0 0 7 4" shape-rendering="crispEdges"><path d="M0 0h7v1h-1v1h-1v1h-1v1h-1v-1h-1v-1h-1v-1h-1z" fill="#000"/></svg>
<div style="position:absolute;left:97px;top:115px;width:77px;height:21px;background:#fff;box-shadow:inset 1px 1px 0 #a0a0a0,inset -1px -1px 0 #fff,inset 2px 2px 0 #696969,inset -2px -2px 0 #e3e3e3;"></div><div style="position:absolute;left:155px;top:117px;width:17px;height:17px;background:#f0f0f0;box-shadow:inset 1px 1px 0 #e3e3e3,inset -1px -1px 0 #696969,inset 2px 2px 0 #fff,inset -2px -2px 0 #a0a0a0;"></div><svg class="px" style="left:160px;top:124px" width="7" height="4" viewBox="0 0 7 4" shape-rendering="crispEdges"><path d="M0 0h7v1h-1v1h-1v1h-1v1h-1v-1h-1v-1h-1v-1h-1z" fill="#000"/></svg>
<div style="position:absolute;left:97px;top:141px;width:77px;height:21px;background:#fff;box-shadow:inset 1px 1px 0 #a0a0a0,inset -1px -1px 0 #fff,inset 2px 2px 0 #696969,inset -2px -2px 0 #e3e3e3;"></div><div style="position:absolute;left:155px;top:143px;width:17px;height:17px;background:#f0f0f0;box-shadow:inset 1px 1px 0 #e3e3e3,inset -1px -1px 0 #696969,inset 2px 2px 0 #fff,inset -2px -2px 0 #a0a0a0;"></div><svg class="px" style="left:160px;top:150px" width="7" height="4" viewBox="0 0 7 4" shape-rendering="crispEdges"><path d="M0 0h7v1h-1v1h-1v1h-1v1h-1v-1h-1v-1h-1v-1h-1z" fill="#000"/></svg>
<span class="t" style="left:101.09px;transform-origin:0 0;top:92.00px;font-size:12px;line-height:16px;transform:scaleX(0.846);">[-i-]</span>
<span class="t" style="left:118.93px;transform-origin:0 0;top:118.00px;font-size:12px;line-height:16px;transform:scaleX(0.974);">0.5</span>
<span class="t" style="left:100.96px;transform-origin:0 0;top:144.00px;font-size:12px;line-height:16px;transform:scaleX(0.901);">256 MB</span>
<span class="t" style="left:178.28px;transform-origin:0 0;top:117.00px;font-size:12px;line-height:16px;transform:scaleX(0.920);"><u>t</u>o</span>
<div style="position:absolute;left:193px;top:115px;width:77px;height:21px;background:#fff;box-shadow:inset 1px 1px 0 #a0a0a0,inset -1px -1px 0 #fff,inset 2px 2px 0 #696969,inset -2px -2px 0 #e3e3e3;"></div><div style="position:absolute;left:251px;top:117px;width:17px;height:17px;background:#f0f0f0;box-shadow:inset 1px 1px 0 #e3e3e3,inset -1px -1px 0 #696969,inset 2px 2px 0 #fff,inset -2px -2px 0 #a0a0a0;"></div><svg class="px" style="left:256px;top:124px" width="7" height="4" viewBox="0 0 7 4" shape-rendering="crispEdges"><path d="M0 0h7v1h-1v1h-1v1h-1v1h-1v-1h-1v-1h-1v-1h-1z" fill="#000"/></svg>
<span class="t" style="left:197.16px;transform-origin:0 0;top:118.00px;font-size:12px;line-height:16px;transform:scaleX(0.920);">8192.0</span>
<span class="t" style="left:276.67px;transform-origin:0 0;top:117.00px;font-size:12px;line-height:16px;transform:scaleX(0.868);">KB</span>
<div style="position:absolute;left:193px;top:90px;width:13px;height:13px;background:#fff;box-shadow:inset 1px 1px 0 #a0a0a0,inset -1px -1px 0 #fff,inset 2px 2px 0 #696969,inset -2px -2px 0 #e3e3e3;"></div>
<span class="t" style="left:210.82px;transform-origin:0 0;top:89.00px;font-size:12px;line-height:16px;transform:scaleX(0.912);">Force Write <u>A</u>ccess</span>
<div style="position:absolute;left:339px;top:90px;width:13px;height:13px;background:#fff;box-shadow:inset 1px 1px 0 #a0a0a0,inset -1px -1px 0 #fff,inset 2px 2px 0 #696969,inset -2px -2px 0 #e3e3e3;"></div><svg class="px" style="left:342px;top:93px" width="7" height="7" viewBox="0 0 7 7" shape-rendering="crispEdges"><path d="M0 2h1v1h1v1h1v-1h1v-1h1v-1h1v-1h1v3h-1v1h-1v1h-1v1h-1v1h-1v-1h-1v-1h-1z" fill="#000"/></svg>
<span class="t" style="left:356.61px;transform-origin:0 0;top:89.00px;font-size:12px;line-height:16px;transform:scaleX(0.927);">Di<u>r</u>ect I/O</span>
<div style="position:absolute;left:334px;top:106px;width:127px;height:58px;border:1px solid #a0a0a0;box-shadow:1px 1px 0 #fff,inset 1px 1px 0 #fff;box-sizing:border-box;"></div>
<svg class="px" style="left:340px;top:112px" width="12" height="12" viewBox="0 0 12 12"><circle cx="6" cy="6" r="5.5" fill="#fff"/><path d="M1.8 10.2A5.5 5.5 0 0 1 10.2 1.8" fill="none" stroke="#a0a0a0" stroke-width="1"/><path d="M2.5 9.5A4.5 4.5 0 0 1 9.5 2.5" fill="none" stroke="#696969" stroke-width="1"/><path d="M10.2 1.8A5.5 5.5 0 0 1 1.8 10.2" fill="none" stroke="#fff" stroke-width="1"/><path d="M9.5 2.5A4.5 4.5 0 0 1 2.5 9.5" fill="none" stroke="#e3e3e3" stroke-width="1"/></svg>
<svg class="px" style="left:340px;top:129px" width="12" height="12" viewBox="0 0 12 12"><circle cx="6" cy="6" r="5.5" fill="#fff"/><path d="M1.8 10.2A5.5 5.5 0 0 1 10.2 1.8" fill="none" stroke="#a0a0a0" stroke-width="1"/><path d="M2.5 9.5A4.5 4.5 0 0 1 9.5 2.5" fill="none" stroke="#696969" stroke-width="1"/><path d="M10.2 1.8A5.5 5.5 0 0 1 1.8 10.2" fill="none" stroke="#fff" stroke-width="1"/><path d="M9.5 2.5A4.5 4.5 0 0 1 2.5 9.5" fill="none" stroke="#e3e3e3" stroke-width="1"/><circle cx="6" cy="6" r="2" fill="#000"/></svg>
<svg class="px" style="left:340px;top:146px" width="12" height="12" viewBox="0 0 12 12"><circle cx="6" cy="6" r="5.5" fill="#fff"/><path d="M1.8 10.2A5.5 5.5 0 0 1 10.2 1.8" fill="none" stroke="#a0a0a0" stroke-width="1"/><path d="M2.5 9.5A4.5 4.5 0 0 1 9.5 2.5" fill="none" stroke="#696969" stroke-width="1"/><path d="M10.2 1.8A5.5 5.5 0 0 1 1.8 10.2" fill="none" stroke="#fff" stroke-width="1"/><path d="M9.5 2.5A4.5 4.5 0 0 1 2.5 9.5" fill="none" stroke="#e3e3e3" stroke-width="1"/></svg>
<span class="t" style="left:356.53px;transform-origin:0 0;top:111.00px;font-size:12px;line-height:16px;transform:scaleX(0.894);">I/O <u>C</u>omparison</span>
<span class="t" style="left:356.96px;transform-origin:0 0;top:128.00px;font-size:12px;line-height:16px;transform:scaleX(0.904);"><u>O</u>verlapped I/O</span>
<span class="t" style="left:356.64px;transform-origin:0 0;top:145.00px;font-size:12px;line-height:16px;transform:scaleX(0.892);"><u>N</u>either</span>
<span class="t" style="left:338.45px;transform-origin:0 0;top:169.00px;font-size:12px;line-height:16px;transform:scaleX(0.911);"><u>Q</u>ueue Depth:</span>
<div style="position:absolute;left:415px;top:167px;width:46px;height:21px;background:#fff;box-shadow:inset 1px 1px 0 #a0a0a0,inset -1px -1px 0 #fff,inset 2px 2px 0 #696969,inset -2px -2px 0 #e3e3e3;"></div><div style="position:absolute;left:442px;top:169px;width:17px;height:17px;background:#f0f0f0;box-shadow:inset 1px 1px 0 #e3e3e3,inset -1px -1px 0 #696969,inset 2px 2px 0 #fff,inset -2px -2px 0 #a0a0a0;"></div><svg class="px" style="left:447px;top:176px" width="7" height="4" viewBox="0 0 7 4" shape-rendering="crispEdges"><path d="M0 0h7v1h-1v1h-1v1h-1v1h-1v-1h-1v-1h-1v-1h-1z" fill="#000"/></svg>
<span class="t" style="left:419.27px;transform-origin:0 0;top:170.00px;font-size:12px;line-height:16px;transform:scaleX(0.948);">4</span>
<span class="t" style="left:21.48px;transform-origin:0 0;top:192.00px;font-size:12px;line-height:16px;transform:scaleX(0.860);">Controlled <u>b</u>y:</span>
<div style="position:absolute;left:21px;top:207px;width:212px;height:21px;background:#fff;box-shadow:inset 1px 1px 0 #a0a0a0,inset -1px -1px 0 #fff,inset 2px 2px 0 #696969,inset -2px -2px 0 #e3e3e3;"></div><div style="position:absolute;left:214px;top:209px;width:17px;height:17px;background:#f0f0f0;box-shadow:inset 1px 1px 0 #e3e3e3,inset -1px -1px 0 #696969,inset 2px 2px 0 #fff,inset -2px -2px 0 #a0a0a0;"></div><svg class="px" style="left:219px;top:216px" width="7" height="4" viewBox="0 0 7 4" shape-rendering="crispEdges"><path d="M0 0h7v1h-1v1h-1v1h-1v1h-1v-1h-1v-1h-1v-1h-1z" fill="#000"/></svg>
<div style="position:absolute;left:393px;top:207px;width:69px;height:20px;background:#f0f0f0;box-shadow:inset 0 0 0 1px #6a6a6a,inset 2px 2px 0 #fff,inset -2px -2px 0 #696969,inset 3px 3px 0 #e8e8e8,inset -3px -3px 0 #a0a0a0;"></div>
<div style="position:absolute;left:397px;top:211px;width:61px;height:12px;border:1px dotted #000;box-sizing:border-box;"></div>
<span class="t" style="left:416.07px;transform-origin:0 0;top:209.00px;font-size:12px;line-height:16px;transform:scaleX(0.886);"><u>S</u>tart</span>
<div style="position:absolute;left:21px;top:233px;width:440px;height:45px;background:#fff;box-shadow:inset 1px 1px 0 #a0a0a0,inset -1px -1px 0 #fff,inset 2px 2px 0 #696969,inset -2px -2px 0 #e3e3e3;"></div>
<div style="position:absolute;left:444px;top:235px;width:15px;height:41px;background:#f1f1f1;box-shadow:inset 1px 0 0 #e9e9e9;"></div>
<svg class="px" style="left:449px;top:242px" width="7" height="4" viewBox="0 0 7 4" shape-rendering="crispEdges"><path d="M3 0h1v1h1v1h1v1h1v1h-7v-1h1v-1h1v-1h1z" fill="#a0a0a0"/></svg>
<svg class="px" style="left:449px;top:267px" width="7" height="4" viewBox="0 0 7 4" shape-rendering="crispEdges"><path d="M0 0h7v1h-1v1h-1v1h-1v1h-1v-1h-1v-1h-1v-1h-1z" fill="#a0a0a0"/></svg>
<span class="t ds" style="left:26.02px;transform-origin:0 0;top:240.00px;font-size:13.6px;line-height:17px;transform:scaleX(1.030);">4x ST2000DM01-9YN164 @ Raid 5</span>
<span class="t ds" style="left:26.08px;transform-origin:0 0;top:259.00px;font-size:13.6px;line-height:17px;transform:scaleX(1.055);">Controller: ARC-1212 /w BBU - FW: 1.51</span>
<div style="position:absolute;left:21px;top:288px;width:440px;height:286px;border:1px solid #a0a0a0;box-shadow:1px 1px 0 #fff,inset 1px 1px 0 #fff;box-sizing:border-box;"></div>
<div style="position:absolute;left:209px;top:286px;width:64px;height:6px;background:#f0f0f0;"></div>
<span class="t" style="left:211.48px;transform-origin:0 0;top:281.00px;font-size:12px;line-height:16px;transform:scaleX(0.904);">Test Results</span>
<span class="t" style="left:156.89px;transform-origin:0 0;top:297.00px;font-size:12px;line-height:16px;transform:scaleX(0.937);">Write</span>
<div style="position:absolute;left:190px;top:302px;width:25px;height:5px;background:#f00;"></div>
<span class="t" style="left:239.67px;transform-origin:0 0;top:297.00px;font-size:12px;line-height:16px;transform:scaleX(0.967);">Read</span>
<div style="position:absolute;left:273px;top:302px;width:25px;height:5px;background:#008000;"></div>
<span class="t" style="left:368.89px;transform-origin:0 0;top:297.00px;font-size:12px;line-height:16px;transform:scaleX(0.929);">Write</span>
<span class="t" style="left:416.58px;transform-origin:0 0;top:297.00px;font-size:12px;line-height:16px;transform:scaleX(0.960);">Read</span>
<div class="chart">
<i class="g" style="left:29px"></i>
<i class="g" style="left:59px"></i>
<i class="g" style="left:89px"></i>
<i class="g" style="left:119px"></i>
<i class="g" style="left:149px"></i>
<i class="g" style="left:179px"></i>
<i class="g" style="left:209px"></i>
<i class="g" style="left:239px"></i>
<i class="g" style="left:269px"></i>
<i class="r" style="top:4px;width:21.2px"></i><i class="n" style="top:9px;width:30.3px"></i>
<i class="r" style="top:18px;width:46.9px"></i><i class="n" style="top:23px;width:59.9px"></i>
<i class="r" style="top:33px;width:98.8px"></i><i class="n" style="top:38px;width:79.0px"></i>
<i class="r" style="top:47px;width:175.6px"></i><i class="n" style="top:52px;width:177.8px"></i>
<i class="r" style="top:62px;width:226.4px"></i><i class="n" style="top:67px;width:234.3px"></i>
<i class="r" style="top:76px;width:238.1px"></i><i class="n" style="top:81px;width:242.0px"></i>
<i class="r" style="top:91px;width:243.9px"></i><i class="n" style="top:96px;width:221.7px"></i>
<i class="r" style="top:106px;width:248.2px"></i><i class="n" style="top:111px;width:245.1px"></i>
<i class="r" style="top:120px;width:234.5px"></i><i class="n" style="top:125px;width:217.4px"></i>
<i class="r" style="top:135px;width:245.6px"></i><i class="n" style="top:140px;width:214.4px"></i>
<i class="r" style="top:149px;width:245.8px"></i><i class="n" style="top:154px;width:176.8px"></i>
<i class="r" style="top:164px;width:242.1px"></i><i class="n" style="top:169px;width:185.4px"></i>
<i class="r" style="top:178px;width:244.8px"></i><i class="n" style="top:183px;width:184.6px"></i>
<i class="r" style="top:193px;width:242.6px"></i><i class="n" style="top:198px;width:181.6px"></i>
<i class="r" style="top:208px;width:238.4px"></i><i class="n" style="top:213px;width:209.1px"></i>
</div>
<span class="t" style="left:40.16px;transform-origin:100% 0;top:317.00px;font-size:12px;line-height:16px;transform:scaleX(0.893);">0.5</span>
<span class="t" style="left:371.58px;transform-origin:100% 0;top:317.00px;font-size:12px;line-height:16px;transform:scaleX(0.893);">37632</span>
<span class="t" style="left:419.16px;transform-origin:100% 0;top:317.00px;font-size:12px;line-height:16px;transform:scaleX(0.893);">52864</span>
<span class="t" style="left:40.05px;transform-origin:100% 0;top:331.00px;font-size:12px;line-height:16px;transform:scaleX(0.893);">1.0</span>
<span class="t" style="left:371.47px;transform-origin:100% 0;top:331.00px;font-size:12px;line-height:16px;transform:scaleX(0.893);">80420</span>
<span class="t" style="left:412.55px;transform-origin:100% 0;top:331.00px;font-size:12px;line-height:16px;transform:scaleX(0.893);">102180</span>
<span class="t" style="left:40.05px;transform-origin:100% 0;top:346.00px;font-size:12px;line-height:16px;transform:scaleX(0.893);">2.0</span>
<span class="t" style="left:364.86px;transform-origin:100% 0;top:346.00px;font-size:12px;line-height:16px;transform:scaleX(0.893);">166985</span>
<span class="t" style="left:412.66px;transform-origin:100% 0;top:346.00px;font-size:12px;line-height:16px;transform:scaleX(0.893);">134059</span>
<span class="t" style="left:40.05px;transform-origin:100% 0;top:360.00px;font-size:12px;line-height:16px;transform:scaleX(0.893);">4.0</span>
<span class="t" style="left:364.86px;transform-origin:100% 0;top:360.00px;font-size:12px;line-height:16px;transform:scaleX(0.893);">295059</span>
<span class="t" style="left:412.66px;transform-origin:100% 0;top:360.00px;font-size:12px;line-height:16px;transform:scaleX(0.893);">298686</span>
<span class="t" style="left:40.05px;transform-origin:100% 0;top:375.00px;font-size:12px;line-height:16px;transform:scaleX(0.893);">8.0</span>
<span class="t" style="left:364.86px;transform-origin:100% 0;top:375.00px;font-size:12px;line-height:16px;transform:scaleX(0.893);">379651</span>
<span class="t" style="left:412.66px;transform-origin:100% 0;top:375.00px;font-size:12px;line-height:16px;transform:scaleX(0.893);">392888</span>
<span class="t" style="left:33.33px;transform-origin:100% 0;top:389.00px;font-size:12px;line-height:16px;transform:scaleX(0.893);">16.0</span>
<span class="t" style="left:364.65px;transform-origin:100% 0;top:389.00px;font-size:12px;line-height:16px;transform:scaleX(0.893);">399084</span>
<span class="t" style="left:412.45px;transform-origin:100% 0;top:389.00px;font-size:12px;line-height:16px;transform:scaleX(0.893);">405734</span>
<span class="t" style="left:33.33px;transform-origin:100% 0;top:404.00px;font-size:12px;line-height:16px;transform:scaleX(0.893);">32.0</span>
<span class="t" style="left:364.86px;transform-origin:100% 0;top:404.00px;font-size:12px;line-height:16px;transform:scaleX(0.893);">408801</span>
<span class="t" style="left:412.66px;transform-origin:100% 0;top:404.00px;font-size:12px;line-height:16px;transform:scaleX(0.893);">371856</span>
<span class="t" style="left:33.33px;transform-origin:100% 0;top:419.00px;font-size:12px;line-height:16px;transform:scaleX(0.893);">64.0</span>
<span class="t" style="left:364.86px;transform-origin:100% 0;top:419.00px;font-size:12px;line-height:16px;transform:scaleX(0.893);">415917</span>
<span class="t" style="left:412.55px;transform-origin:100% 0;top:419.00px;font-size:12px;line-height:16px;transform:scaleX(0.893);">410820</span>
<span class="t" style="left:26.62px;transform-origin:100% 0;top:433.00px;font-size:12px;line-height:16px;transform:scaleX(0.893);">128.0</span>
<span class="t" style="left:364.86px;transform-origin:100% 0;top:433.00px;font-size:12px;line-height:16px;transform:scaleX(0.893);">393216</span>
<span class="t" style="left:412.66px;transform-origin:100% 0;top:433.00px;font-size:12px;line-height:16px;transform:scaleX(0.893);">364665</span>
<span class="t" style="left:26.62px;transform-origin:100% 0;top:448.00px;font-size:12px;line-height:16px;transform:scaleX(0.893);">256.0</span>
<span class="t" style="left:365.49px;transform-origin:100% 0;top:448.00px;font-size:12px;line-height:16px;transform:scaleX(0.893);">411594</span>
<span class="t" style="left:412.66px;transform-origin:100% 0;top:448.00px;font-size:12px;line-height:16px;transform:scaleX(0.893);">359713</span>
<span class="t" style="left:26.62px;transform-origin:100% 0;top:462.00px;font-size:12px;line-height:16px;transform:scaleX(0.893);">512.0</span>
<span class="t" style="left:364.86px;transform-origin:100% 0;top:462.00px;font-size:12px;line-height:16px;transform:scaleX(0.893);">412071</span>
<span class="t" style="left:412.66px;transform-origin:100% 0;top:462.00px;font-size:12px;line-height:16px;transform:scaleX(0.893);">296941</span>
<span class="t" style="left:20.01px;transform-origin:100% 0;top:477.00px;font-size:12px;line-height:16px;transform:scaleX(0.893);">1024.0</span>
<span class="t" style="left:364.86px;transform-origin:100% 0;top:477.00px;font-size:12px;line-height:16px;transform:scaleX(0.893);">405841</span>
<span class="t" style="left:413.40px;transform-origin:100% 0;top:477.00px;font-size:12px;line-height:16px;transform:scaleX(0.893);">311410</span>
<span class="t" style="left:20.01px;transform-origin:100% 0;top:491.00px;font-size:12px;line-height:16px;transform:scaleX(0.893);">2048.0</span>
<span class="t" style="left:364.86px;transform-origin:100% 0;top:491.00px;font-size:12px;line-height:16px;transform:scaleX(0.893);">410272</span>
<span class="t" style="left:412.66px;transform-origin:100% 0;top:491.00px;font-size:12px;line-height:16px;transform:scaleX(0.893);">309971</span>
<span class="t" style="left:20.01px;transform-origin:100% 0;top:506.00px;font-size:12px;line-height:16px;transform:scaleX(0.893);">4096.0</span>
<span class="t" style="left:364.75px;transform-origin:100% 0;top:506.00px;font-size:12px;line-height:16px;transform:scaleX(0.893);">406720</span>
<span class="t" style="left:412.55px;transform-origin:100% 0;top:506.00px;font-size:12px;line-height:16px;transform:scaleX(0.893);">305040</span>
<span class="t" style="left:20.01px;transform-origin:100% 0;top:521.00px;font-size:12px;line-height:16px;transform:scaleX(0.893);">8192.0</span>
<span class="t" style="left:364.86px;transform-origin:100% 0;top:521.00px;font-size:12px;line-height:16px;transform:scaleX(0.893);">399655</span>
<span class="t" style="left:412.66px;transform-origin:100% 0;top:521.00px;font-size:12px;line-height:16px;transform:scaleX(0.893);">350896</span>
<span class="t" style="left:56.34px;transform-origin:50% 0;top:544.00px;font-size:12px;line-height:16px;transform:scaleX(0.893);">0</span>
<span class="t" style="left:82.99px;transform-origin:50% 0;top:544.00px;font-size:12px;line-height:16px;transform:scaleX(0.893);">50</span>
<span class="t" style="left:109.47px;transform-origin:50% 0;top:544.00px;font-size:12px;line-height:16px;transform:scaleX(0.893);">100</span>
<span class="t" style="left:139.47px;transform-origin:50% 0;top:544.00px;font-size:12px;line-height:16px;transform:scaleX(0.893);">150</span>
<span class="t" style="left:169.63px;transform-origin:50% 0;top:544.00px;font-size:12px;line-height:16px;transform:scaleX(0.893);">200</span>
<span class="t" style="left:199.63px;transform-origin:50% 0;top:544.00px;font-size:12px;line-height:16px;transform:scaleX(0.893);">250</span>
<span class="t" style="left:229.68px;transform-origin:50% 0;top:544.00px;font-size:12px;line-height:16px;transform:scaleX(0.893);">300</span>
<span class="t" style="left:259.68px;transform-origin:50% 0;top:544.00px;font-size:12px;line-height:16px;transform:scaleX(0.893);">350</span>
<span class="t" style="left:289.79px;transform-origin:50% 0;top:544.00px;font-size:12px;line-height:16px;transform:scaleX(0.893);">400</span>
<span class="t" style="left:319.79px;transform-origin:50% 0;top:544.00px;font-size:12px;line-height:16px;transform:scaleX(0.893);">450</span>
<span class="t" style="left:349.68px;transform-origin:50% 0;top:544.00px;font-size:12px;line-height:16px;transform:scaleX(0.893);">500</span>
<span class="t" style="left:144.68px;transform-origin:0 0;top:557.00px;font-size:12px;line-height:16px;transform:scaleX(0.907);">Transfer Rate - MB / Sec</span>
<div class="status"></div>
<span class="t ns" style="left:9.50px;transform-origin:0 0;top:591.00px;font-size:12px;line-height:16px;transform:scaleX(0.940);">For Help, press F1</span>
<svg class="px" style="left:461px;top:594px" width="13" height="13" viewBox="0 0 13 13"><path d="M13 1.5L1.5 13M13 5.5L5.5 13M13 9.5L9.5 13" stroke="#fff" stroke-width="1.2"/><path d="M12.5 1L1 12.5M12.5 5L5 12.5M12.5 9L9 12.5" stroke="#a4a4a4" stroke-width="1.7"/></svg>
</div>
</body></html>
